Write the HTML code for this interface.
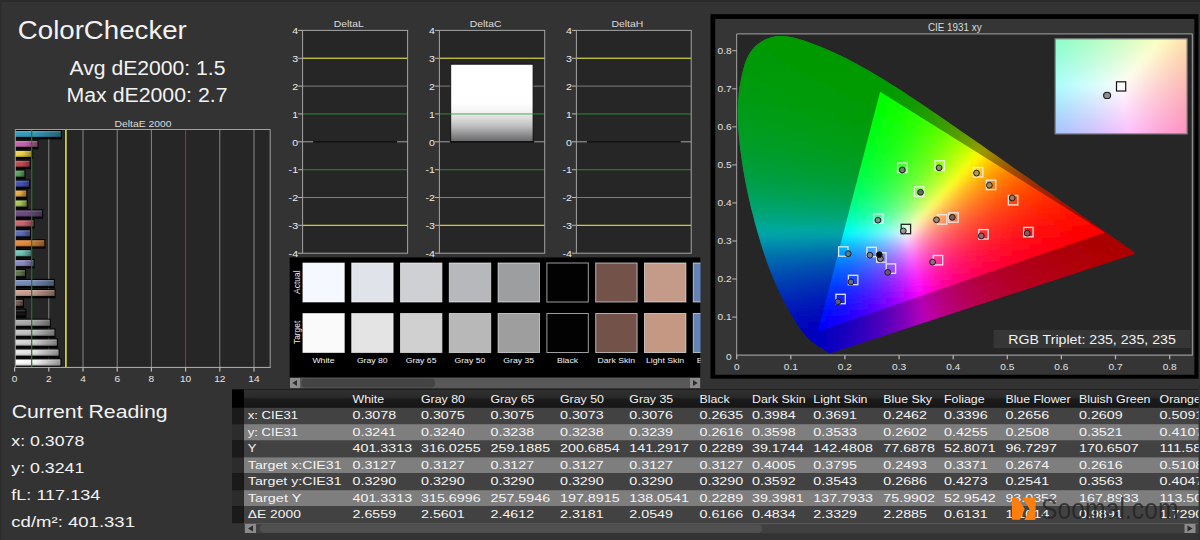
<!DOCTYPE html>
<html><head><meta charset="utf-8"><title>ColorChecker</title>
<style>
html,body{margin:0;padding:0;background:#333333;}
body{width:1200px;height:540px;overflow:hidden;}
svg{display:block;font-family:"Liberation Sans", sans-serif;}
</style></head><body>
<svg width="1200" height="540" viewBox="0 0 1200 540">
<rect x="0" y="0" width="1200" height="2" fill="#2a2a2a"/><rect x="0" y="0" width="1.5" height="540" fill="#2c2c2c"/>
<text x="17.8" y="39" font-size="25" text-anchor="start" fill="#f2f2f2" textLength="169" lengthAdjust="spacingAndGlyphs">ColorChecker</text>
<text x="69.5" y="75" font-size="19.5" text-anchor="start" fill="#f2f2f2" textLength="156" lengthAdjust="spacingAndGlyphs">Avg dE2000: 1.5</text>
<text x="66.5" y="101.5" font-size="19.5" text-anchor="start" fill="#f2f2f2" textLength="161" lengthAdjust="spacingAndGlyphs">Max dE2000: 2.7</text>
<rect x="15.3" y="129.5" width="254.89999999999998" height="237.89999999999998" fill="#262626"/>
<text x="143" y="126.6" font-size="9.6" text-anchor="middle" fill="#dcdcdc" textLength="56.9" lengthAdjust="spacingAndGlyphs">DeltaE 2000</text>
<rect x="48.3" y="129.5" width="1" height="237.89999999999998" fill="#868686"/>
<rect x="82.5" y="129.5" width="1" height="237.89999999999998" fill="#868686"/>
<rect x="116.7" y="129.5" width="1" height="237.89999999999998" fill="#868686"/>
<rect x="150.9" y="129.5" width="1" height="237.89999999999998" fill="#868686"/>
<rect x="185.1" y="129.5" width="1" height="237.89999999999998" fill="#cc2222"/>
<rect x="219.3" y="129.5" width="1" height="237.89999999999998" fill="#868686"/>
<rect x="253.5" y="129.5" width="1" height="237.89999999999998" fill="#868686"/>
<defs><linearGradient id="gl" x1="0" y1="0" x2="0" y2="1"><stop offset="0" stop-color="#fff" stop-opacity="0.25"/><stop offset="0.4" stop-color="#fff" stop-opacity="0"/><stop offset="1" stop-color="#000" stop-opacity="0.25"/></linearGradient><linearGradient id="gh" x1="0" y1="0" x2="1" y2="0"><stop offset="0" stop-color="#000" stop-opacity="0"/><stop offset="0.45" stop-color="#000" stop-opacity="0.05"/><stop offset="1" stop-color="#000" stop-opacity="0.42"/></linearGradient></defs>
<rect x="15.3" y="358.3" width="46.2" height="9.6" fill="#000" opacity="0.85"/>
<rect x="15.3" y="359.5" width="45.0" height="6" fill="#ffffff"/>
<rect x="15.3" y="359.5" width="45.0" height="6" fill="url(#gh)"/>
<rect x="15.3" y="359.5" width="45.0" height="6" fill="url(#gl)"/>
<rect x="15.3" y="348.4" width="44.3" height="9.6" fill="#000" opacity="0.85"/>
<rect x="15.3" y="349.6" width="43.1" height="6" fill="#eaeaea"/>
<rect x="15.3" y="349.6" width="43.1" height="6" fill="url(#gh)"/>
<rect x="15.3" y="349.6" width="43.1" height="6" fill="url(#gl)"/>
<rect x="15.3" y="338.4" width="42.6" height="9.6" fill="#000" opacity="0.85"/>
<rect x="15.3" y="339.6" width="41.4" height="6" fill="#d8d8d8"/>
<rect x="15.3" y="339.6" width="41.4" height="6" fill="url(#gh)"/>
<rect x="15.3" y="339.6" width="41.4" height="6" fill="url(#gl)"/>
<rect x="15.3" y="328.5" width="40.2" height="9.6" fill="#000" opacity="0.85"/>
<rect x="15.3" y="329.7" width="39.0" height="6" fill="#c6c6c6"/>
<rect x="15.3" y="329.7" width="39.0" height="6" fill="url(#gh)"/>
<rect x="15.3" y="329.7" width="39.0" height="6" fill="url(#gl)"/>
<rect x="15.3" y="318.6" width="35.6" height="9.6" fill="#000" opacity="0.85"/>
<rect x="15.3" y="319.8" width="34.4" height="6" fill="#adadad"/>
<rect x="15.3" y="319.8" width="34.4" height="6" fill="url(#gh)"/>
<rect x="15.3" y="319.8" width="34.4" height="6" fill="url(#gl)"/>
<rect x="15.3" y="308.6" width="11.1" height="9.6" fill="#000" opacity="0.85"/>
<rect x="15.3" y="309.8" width="9.9" height="6" fill="#0a0a0a"/>
<rect x="15.3" y="309.8" width="9.9" height="6" fill="url(#gh)"/>
<rect x="15.3" y="309.8" width="9.9" height="6" fill="url(#gl)"/>
<rect x="15.3" y="298.7" width="8.7" height="9.6" fill="#000" opacity="0.85"/>
<rect x="15.3" y="299.9" width="7.5" height="6" fill="#78584c"/>
<rect x="15.3" y="299.9" width="7.5" height="6" fill="url(#gh)"/>
<rect x="15.3" y="299.9" width="7.5" height="6" fill="url(#gl)"/>
<rect x="15.3" y="288.8" width="40.3" height="9.6" fill="#000" opacity="0.85"/>
<rect x="15.3" y="290.0" width="39.1" height="6" fill="#cca090"/>
<rect x="15.3" y="290.0" width="39.1" height="6" fill="url(#gh)"/>
<rect x="15.3" y="290.0" width="39.1" height="6" fill="url(#gl)"/>
<rect x="15.3" y="278.8" width="39.7" height="9.6" fill="#000" opacity="0.85"/>
<rect x="15.3" y="280.0" width="38.5" height="6" fill="#748cbc"/>
<rect x="15.3" y="280.0" width="38.5" height="6" fill="url(#gh)"/>
<rect x="15.3" y="280.0" width="38.5" height="6" fill="url(#gl)"/>
<rect x="15.3" y="268.9" width="10.9" height="9.6" fill="#000" opacity="0.85"/>
<rect x="15.3" y="270.1" width="9.7" height="6" fill="#627848"/>
<rect x="15.3" y="270.1" width="9.7" height="6" fill="url(#gh)"/>
<rect x="15.3" y="270.1" width="9.7" height="6" fill="url(#gl)"/>
<rect x="15.3" y="258.9" width="19.3" height="9.6" fill="#000" opacity="0.85"/>
<rect x="15.3" y="260.1" width="18.1" height="6" fill="#908cc8"/>
<rect x="15.3" y="260.1" width="18.1" height="6" fill="url(#gh)"/>
<rect x="15.3" y="260.1" width="18.1" height="6" fill="url(#gl)"/>
<rect x="15.3" y="249.0" width="16.7" height="9.6" fill="#000" opacity="0.85"/>
<rect x="15.3" y="250.2" width="15.5" height="6" fill="#70ccbc"/>
<rect x="15.3" y="250.2" width="15.5" height="6" fill="url(#gh)"/>
<rect x="15.3" y="250.2" width="15.5" height="6" fill="url(#gl)"/>
<rect x="15.3" y="239.1" width="30.1" height="9.6" fill="#000" opacity="0.85"/>
<rect x="15.3" y="240.3" width="28.9" height="6" fill="#ea8a3a"/>
<rect x="15.3" y="240.3" width="28.9" height="6" fill="url(#gh)"/>
<rect x="15.3" y="240.3" width="28.9" height="6" fill="url(#gl)"/>
<rect x="15.3" y="229.1" width="15.9" height="9.6" fill="#000" opacity="0.85"/>
<rect x="15.3" y="230.3" width="14.7" height="6" fill="#5c6cc0"/>
<rect x="15.3" y="230.3" width="14.7" height="6" fill="url(#gh)"/>
<rect x="15.3" y="230.3" width="14.7" height="6" fill="url(#gl)"/>
<rect x="15.3" y="219.2" width="19.3" height="9.6" fill="#000" opacity="0.85"/>
<rect x="15.3" y="220.4" width="18.1" height="6" fill="#d06470"/>
<rect x="15.3" y="220.4" width="18.1" height="6" fill="url(#gh)"/>
<rect x="15.3" y="220.4" width="18.1" height="6" fill="url(#gl)"/>
<rect x="15.3" y="209.3" width="27.9" height="9.6" fill="#000" opacity="0.85"/>
<rect x="15.3" y="210.5" width="26.7" height="6" fill="#6a4680"/>
<rect x="15.3" y="210.5" width="26.7" height="6" fill="url(#gh)"/>
<rect x="15.3" y="210.5" width="26.7" height="6" fill="url(#gl)"/>
<rect x="15.3" y="199.3" width="12.5" height="9.6" fill="#000" opacity="0.85"/>
<rect x="15.3" y="200.5" width="11.3" height="6" fill="#b0cc50"/>
<rect x="15.3" y="200.5" width="11.3" height="6" fill="url(#gh)"/>
<rect x="15.3" y="200.5" width="11.3" height="6" fill="url(#gl)"/>
<rect x="15.3" y="189.4" width="12.1" height="9.6" fill="#000" opacity="0.85"/>
<rect x="15.3" y="190.6" width="10.9" height="6" fill="#f0b040"/>
<rect x="15.3" y="190.6" width="10.9" height="6" fill="url(#gh)"/>
<rect x="15.3" y="190.6" width="10.9" height="6" fill="url(#gl)"/>
<rect x="15.3" y="179.5" width="15.0" height="9.6" fill="#000" opacity="0.85"/>
<rect x="15.3" y="180.7" width="13.8" height="6" fill="#4050b8"/>
<rect x="15.3" y="180.7" width="13.8" height="6" fill="url(#gh)"/>
<rect x="15.3" y="180.7" width="13.8" height="6" fill="url(#gl)"/>
<rect x="15.3" y="169.5" width="10.2" height="9.6" fill="#000" opacity="0.85"/>
<rect x="15.3" y="170.7" width="9.0" height="6" fill="#5aa85c"/>
<rect x="15.3" y="170.7" width="9.0" height="6" fill="url(#gh)"/>
<rect x="15.3" y="170.7" width="9.0" height="6" fill="url(#gl)"/>
<rect x="15.3" y="159.6" width="15.4" height="9.6" fill="#000" opacity="0.85"/>
<rect x="15.3" y="160.8" width="14.2" height="6" fill="#c84850"/>
<rect x="15.3" y="160.8" width="14.2" height="6" fill="url(#gh)"/>
<rect x="15.3" y="160.8" width="14.2" height="6" fill="url(#gl)"/>
<rect x="15.3" y="149.7" width="17.8" height="9.6" fill="#000" opacity="0.85"/>
<rect x="15.3" y="150.9" width="16.6" height="6" fill="#f4d844"/>
<rect x="15.3" y="150.9" width="16.6" height="6" fill="url(#gh)"/>
<rect x="15.3" y="150.9" width="16.6" height="6" fill="url(#gl)"/>
<rect x="15.3" y="139.7" width="23.2" height="9.6" fill="#000" opacity="0.85"/>
<rect x="15.3" y="140.9" width="22.0" height="6" fill="#c864b0"/>
<rect x="15.3" y="140.9" width="22.0" height="6" fill="url(#gh)"/>
<rect x="15.3" y="140.9" width="22.0" height="6" fill="url(#gl)"/>
<rect x="15.3" y="129.8" width="46.5" height="9.6" fill="#000" opacity="0.85"/>
<rect x="15.3" y="131.0" width="45.3" height="6" fill="#2e9cc0"/>
<rect x="15.3" y="131.0" width="45.3" height="6" fill="url(#gh)"/>
<rect x="15.3" y="131.0" width="45.3" height="6" fill="url(#gl)"/>
<rect x="31.0" y="129.5" width="1.3" height="237.89999999999998" fill="#1c7a20" opacity="0.9"/>
<rect x="64.3" y="129.5" width="3.2" height="237.89999999999998" fill="#1c1c10" opacity="0.7"/>
<rect x="65.0" y="129.5" width="1.8" height="237.89999999999998" fill="#d2c846"/>
<path d="M15.3 367.4 V129.5 H270.2 V367.4" fill="none" stroke="#a0a0a0" stroke-width="1"/>
<path d="M14.8 367.4 H270.7" fill="none" stroke="#b4b4b4" stroke-width="1"/>
<rect x="14.0" y="367.4" width="1.2" height="4.2" fill="#b8b8b8"/>
<text x="14.6" y="381.7" font-size="9.4" text-anchor="middle" fill="#e4e4e4" textLength="5.6" lengthAdjust="spacingAndGlyphs">0</text>
<rect x="48.2" y="367.4" width="1.2" height="4.2" fill="#b8b8b8"/>
<text x="48.8" y="381.7" font-size="9.4" text-anchor="middle" fill="#e4e4e4" textLength="5.6" lengthAdjust="spacingAndGlyphs">2</text>
<rect x="82.4" y="367.4" width="1.2" height="4.2" fill="#b8b8b8"/>
<text x="83.0" y="381.7" font-size="9.4" text-anchor="middle" fill="#e4e4e4" textLength="5.6" lengthAdjust="spacingAndGlyphs">4</text>
<rect x="116.6" y="367.4" width="1.2" height="4.2" fill="#b8b8b8"/>
<text x="117.2" y="381.7" font-size="9.4" text-anchor="middle" fill="#e4e4e4" textLength="5.6" lengthAdjust="spacingAndGlyphs">6</text>
<rect x="150.8" y="367.4" width="1.2" height="4.2" fill="#b8b8b8"/>
<text x="151.4" y="381.7" font-size="9.4" text-anchor="middle" fill="#e4e4e4" textLength="5.6" lengthAdjust="spacingAndGlyphs">8</text>
<rect x="185.0" y="367.4" width="1.2" height="4.2" fill="#b8b8b8"/>
<text x="185.6" y="381.7" font-size="9.4" text-anchor="middle" fill="#e4e4e4" textLength="11.3" lengthAdjust="spacingAndGlyphs">10</text>
<rect x="219.2" y="367.4" width="1.2" height="4.2" fill="#b8b8b8"/>
<text x="219.8" y="381.7" font-size="9.4" text-anchor="middle" fill="#e4e4e4" textLength="11.3" lengthAdjust="spacingAndGlyphs">12</text>
<rect x="253.4" y="367.4" width="1.2" height="4.2" fill="#b8b8b8"/>
<text x="254.0" y="381.7" font-size="9.4" text-anchor="middle" fill="#e4e4e4" textLength="11.3" lengthAdjust="spacingAndGlyphs">14</text>
<defs><linearGradient id="wb" x1="0" y1="0" x2="0" y2="1"><stop offset="0" stop-color="#fff"/><stop offset="0.5" stop-color="#fefefe"/><stop offset="0.62" stop-color="#f2f2f2"/><stop offset="0.8" stop-color="#bebec0"/><stop offset="1" stop-color="#646464"/></linearGradient></defs>
<rect x="302.6" y="30.4" width="105.0" height="222.79999999999998" fill="#262626"/>
<text x="298.1" y="256.9" font-size="9.3" text-anchor="end" fill="#ececec" textLength="9.5" lengthAdjust="spacingAndGlyphs">-4</text>
<rect x="298.1" y="252.7" width="4.5" height="1" fill="#b8b8b8"/>
<text x="298.1" y="229.0" font-size="9.3" text-anchor="end" fill="#ececec" textLength="9.5" lengthAdjust="spacingAndGlyphs">-3</text>
<rect x="298.1" y="224.8" width="4.5" height="1" fill="#b8b8b8"/>
<text x="298.1" y="201.2" font-size="9.3" text-anchor="end" fill="#ececec" textLength="9.5" lengthAdjust="spacingAndGlyphs">-2</text>
<rect x="298.1" y="197.0" width="4.5" height="1" fill="#b8b8b8"/>
<text x="298.1" y="173.3" font-size="9.3" text-anchor="end" fill="#ececec" textLength="9.5" lengthAdjust="spacingAndGlyphs">-1</text>
<rect x="298.1" y="169.2" width="4.5" height="1" fill="#b8b8b8"/>
<text x="298.1" y="145.5" font-size="9.3" text-anchor="end" fill="#ececec" textLength="5.9" lengthAdjust="spacingAndGlyphs">0</text>
<rect x="298.1" y="141.3" width="4.5" height="1" fill="#b8b8b8"/>
<text x="298.1" y="117.6" font-size="9.3" text-anchor="end" fill="#ececec" textLength="5.9" lengthAdjust="spacingAndGlyphs">1</text>
<rect x="298.1" y="113.4" width="4.5" height="1" fill="#b8b8b8"/>
<text x="298.1" y="89.8" font-size="9.3" text-anchor="end" fill="#ececec" textLength="5.9" lengthAdjust="spacingAndGlyphs">2</text>
<rect x="298.1" y="85.6" width="4.5" height="1" fill="#b8b8b8"/>
<text x="298.1" y="62.0" font-size="9.3" text-anchor="end" fill="#ececec" textLength="5.9" lengthAdjust="spacingAndGlyphs">3</text>
<rect x="298.1" y="57.8" width="4.5" height="1" fill="#b8b8b8"/>
<text x="298.1" y="34.1" font-size="9.3" text-anchor="end" fill="#ececec" textLength="5.9" lengthAdjust="spacingAndGlyphs">4</text>
<rect x="298.1" y="29.9" width="4.5" height="1" fill="#b8b8b8"/>
<rect x="302.6" y="85.60" width="105.0" height="1" fill="#7c7c7c"/>
<rect x="302.6" y="197.00" width="105.0" height="1" fill="#7c7c7c"/>
<rect x="302.6" y="57.65" width="105.0" height="1.2" fill="#d6d63c" opacity="1"/>
<rect x="302.6" y="113.35" width="105.0" height="1.2" fill="#2f9a36" opacity="0.7"/>
<rect x="302.6" y="169.05" width="105.0" height="1.2" fill="#2f9a36" opacity="0.7"/>
<rect x="302.6" y="224.75" width="105.0" height="1.2" fill="#d6d63c" opacity="1"/>
<rect x="313.1" y="141.3" width="84.0" height="1.2" fill="#0c0c0c"/>
<rect x="302.6" y="141.3" width="10.5" height="1" fill="#a0a0a0"/>
<rect x="397.1" y="141.3" width="10.5" height="1" fill="#a0a0a0"/>
<rect x="302.6" y="30.4" width="105.0" height="222.79999999999998" fill="none" stroke="#a4a4a4" stroke-width="1"/>
<text x="348.70000000000005" y="27.1" font-size="9.2" text-anchor="middle" fill="#dcdcdc" textLength="30.0" lengthAdjust="spacingAndGlyphs">DeltaL</text>
<rect x="439.4" y="30.4" width="105.30000000000007" height="222.79999999999998" fill="#262626"/>
<text x="434.9" y="256.9" font-size="9.3" text-anchor="end" fill="#ececec" textLength="9.5" lengthAdjust="spacingAndGlyphs">-4</text>
<rect x="434.9" y="252.7" width="4.5" height="1" fill="#b8b8b8"/>
<text x="434.9" y="229.0" font-size="9.3" text-anchor="end" fill="#ececec" textLength="9.5" lengthAdjust="spacingAndGlyphs">-3</text>
<rect x="434.9" y="224.8" width="4.5" height="1" fill="#b8b8b8"/>
<text x="434.9" y="201.2" font-size="9.3" text-anchor="end" fill="#ececec" textLength="9.5" lengthAdjust="spacingAndGlyphs">-2</text>
<rect x="434.9" y="197.0" width="4.5" height="1" fill="#b8b8b8"/>
<text x="434.9" y="173.3" font-size="9.3" text-anchor="end" fill="#ececec" textLength="9.5" lengthAdjust="spacingAndGlyphs">-1</text>
<rect x="434.9" y="169.2" width="4.5" height="1" fill="#b8b8b8"/>
<text x="434.9" y="145.5" font-size="9.3" text-anchor="end" fill="#ececec" textLength="5.9" lengthAdjust="spacingAndGlyphs">0</text>
<rect x="434.9" y="141.3" width="4.5" height="1" fill="#b8b8b8"/>
<text x="434.9" y="117.6" font-size="9.3" text-anchor="end" fill="#ececec" textLength="5.9" lengthAdjust="spacingAndGlyphs">1</text>
<rect x="434.9" y="113.4" width="4.5" height="1" fill="#b8b8b8"/>
<text x="434.9" y="89.8" font-size="9.3" text-anchor="end" fill="#ececec" textLength="5.9" lengthAdjust="spacingAndGlyphs">2</text>
<rect x="434.9" y="85.6" width="4.5" height="1" fill="#b8b8b8"/>
<text x="434.9" y="62.0" font-size="9.3" text-anchor="end" fill="#ececec" textLength="5.9" lengthAdjust="spacingAndGlyphs">3</text>
<rect x="434.9" y="57.8" width="4.5" height="1" fill="#b8b8b8"/>
<text x="434.9" y="34.1" font-size="9.3" text-anchor="end" fill="#ececec" textLength="5.9" lengthAdjust="spacingAndGlyphs">4</text>
<rect x="434.9" y="29.9" width="4.5" height="1" fill="#b8b8b8"/>
<rect x="439.4" y="85.60" width="105.30000000000007" height="1" fill="#7c7c7c"/>
<rect x="439.4" y="197.00" width="105.30000000000007" height="1" fill="#7c7c7c"/>
<rect x="450.7" y="64.2" width="82.4" height="77.6" fill="url(#wb)" stroke="#0c0c0c" stroke-width="0.9"/>
<rect x="439.4" y="57.65" width="105.30000000000007" height="1.2" fill="#d6d63c" opacity="1"/>
<rect x="439.4" y="113.35" width="105.30000000000007" height="1.2" fill="#2f9a36" opacity="0.7"/>
<rect x="439.4" y="169.05" width="105.30000000000007" height="1.2" fill="#2f9a36" opacity="0.7"/>
<rect x="439.4" y="224.75" width="105.30000000000007" height="1.2" fill="#d6d63c" opacity="1"/>
<rect x="449.9" y="141.3" width="84.30000000000007" height="1.2" fill="#0c0c0c"/>
<rect x="439.4" y="141.3" width="10.5" height="1" fill="#a0a0a0"/>
<rect x="534.2" y="141.3" width="10.5" height="1" fill="#a0a0a0"/>
<rect x="439.4" y="30.4" width="105.30000000000007" height="222.79999999999998" fill="none" stroke="#a4a4a4" stroke-width="1"/>
<text x="485.65000000000003" y="27.1" font-size="9.2" text-anchor="middle" fill="#dcdcdc" textLength="31.8" lengthAdjust="spacingAndGlyphs">DeltaC</text>
<rect x="576.4" y="30.4" width="114.80000000000007" height="222.79999999999998" fill="#262626"/>
<text x="571.9" y="256.9" font-size="9.3" text-anchor="end" fill="#ececec" textLength="9.5" lengthAdjust="spacingAndGlyphs">-4</text>
<rect x="571.9" y="252.7" width="4.5" height="1" fill="#b8b8b8"/>
<text x="571.9" y="229.0" font-size="9.3" text-anchor="end" fill="#ececec" textLength="9.5" lengthAdjust="spacingAndGlyphs">-3</text>
<rect x="571.9" y="224.8" width="4.5" height="1" fill="#b8b8b8"/>
<text x="571.9" y="201.2" font-size="9.3" text-anchor="end" fill="#ececec" textLength="9.5" lengthAdjust="spacingAndGlyphs">-2</text>
<rect x="571.9" y="197.0" width="4.5" height="1" fill="#b8b8b8"/>
<text x="571.9" y="173.3" font-size="9.3" text-anchor="end" fill="#ececec" textLength="9.5" lengthAdjust="spacingAndGlyphs">-1</text>
<rect x="571.9" y="169.2" width="4.5" height="1" fill="#b8b8b8"/>
<text x="571.9" y="145.5" font-size="9.3" text-anchor="end" fill="#ececec" textLength="5.9" lengthAdjust="spacingAndGlyphs">0</text>
<rect x="571.9" y="141.3" width="4.5" height="1" fill="#b8b8b8"/>
<text x="571.9" y="117.6" font-size="9.3" text-anchor="end" fill="#ececec" textLength="5.9" lengthAdjust="spacingAndGlyphs">1</text>
<rect x="571.9" y="113.4" width="4.5" height="1" fill="#b8b8b8"/>
<text x="571.9" y="89.8" font-size="9.3" text-anchor="end" fill="#ececec" textLength="5.9" lengthAdjust="spacingAndGlyphs">2</text>
<rect x="571.9" y="85.6" width="4.5" height="1" fill="#b8b8b8"/>
<text x="571.9" y="62.0" font-size="9.3" text-anchor="end" fill="#ececec" textLength="5.9" lengthAdjust="spacingAndGlyphs">3</text>
<rect x="571.9" y="57.8" width="4.5" height="1" fill="#b8b8b8"/>
<text x="571.9" y="34.1" font-size="9.3" text-anchor="end" fill="#ececec" textLength="5.9" lengthAdjust="spacingAndGlyphs">4</text>
<rect x="571.9" y="29.9" width="4.5" height="1" fill="#b8b8b8"/>
<rect x="576.4" y="85.60" width="114.80000000000007" height="1" fill="#7c7c7c"/>
<rect x="576.4" y="197.00" width="114.80000000000007" height="1" fill="#7c7c7c"/>
<rect x="576.4" y="57.65" width="114.80000000000007" height="1.2" fill="#d6d63c" opacity="1"/>
<rect x="576.4" y="113.35" width="114.80000000000007" height="1.2" fill="#2f9a36" opacity="0.7"/>
<rect x="576.4" y="169.05" width="114.80000000000007" height="1.2" fill="#2f9a36" opacity="0.7"/>
<rect x="576.4" y="224.75" width="114.80000000000007" height="1.2" fill="#d6d63c" opacity="1"/>
<rect x="586.9" y="141.3" width="93.80000000000007" height="1.2" fill="#0c0c0c"/>
<rect x="576.4" y="141.3" width="10.5" height="1" fill="#a0a0a0"/>
<rect x="680.7" y="141.3" width="10.5" height="1" fill="#a0a0a0"/>
<rect x="576.4" y="30.4" width="114.80000000000007" height="222.79999999999998" fill="none" stroke="#a4a4a4" stroke-width="1"/>
<text x="627.4" y="27.1" font-size="9.2" text-anchor="middle" fill="#dcdcdc" textLength="31.8" lengthAdjust="spacingAndGlyphs">DeltaH</text>
<rect x="289.7" y="257.4" width="410.8" height="131" fill="#000"/>
<rect x="302.9" y="263.0" width="41.4" height="39" fill="#f6f8ff" stroke="#fff" stroke-opacity="0.62" stroke-width="1"/>
<rect x="302.9" y="313.5" width="41.4" height="39" fill="#fafafa" stroke="#fff" stroke-opacity="0.62" stroke-width="1"/>
<text x="323.5" y="363" font-size="8.1" text-anchor="middle" fill="#f4f4f4" textLength="22.2" lengthAdjust="spacingAndGlyphs">White</text>
<rect x="351.7" y="263.0" width="41.4" height="39" fill="#e0e4ea" stroke="#fff" stroke-opacity="0.62" stroke-width="1"/>
<rect x="351.7" y="313.5" width="41.4" height="39" fill="#e4e4e4" stroke="#fff" stroke-opacity="0.62" stroke-width="1"/>
<text x="372.3" y="363" font-size="8.1" text-anchor="middle" fill="#f4f4f4" textLength="30.8" lengthAdjust="spacingAndGlyphs">Gray 80</text>
<rect x="400.5" y="263.0" width="41.4" height="39" fill="#ced0d4" stroke="#fff" stroke-opacity="0.62" stroke-width="1"/>
<rect x="400.5" y="313.5" width="41.4" height="39" fill="#d0d0d0" stroke="#fff" stroke-opacity="0.62" stroke-width="1"/>
<text x="421.1" y="363" font-size="8.1" text-anchor="middle" fill="#f4f4f4" textLength="30.8" lengthAdjust="spacingAndGlyphs">Gray 65</text>
<rect x="449.3" y="263.0" width="41.4" height="39" fill="#b6b8bc" stroke="#fff" stroke-opacity="0.62" stroke-width="1"/>
<rect x="449.3" y="313.5" width="41.4" height="39" fill="#b8b8b8" stroke="#fff" stroke-opacity="0.62" stroke-width="1"/>
<text x="469.9" y="363" font-size="8.1" text-anchor="middle" fill="#f4f4f4" textLength="30.8" lengthAdjust="spacingAndGlyphs">Gray 50</text>
<rect x="498.1" y="263.0" width="41.4" height="39" fill="#9c9ea0" stroke="#fff" stroke-opacity="0.62" stroke-width="1"/>
<rect x="498.1" y="313.5" width="41.4" height="39" fill="#9e9e9e" stroke="#fff" stroke-opacity="0.62" stroke-width="1"/>
<text x="518.7" y="363" font-size="8.1" text-anchor="middle" fill="#f4f4f4" textLength="30.8" lengthAdjust="spacingAndGlyphs">Gray 35</text>
<rect x="546.9" y="263.0" width="41.4" height="39" fill="#020202" stroke="#fff" stroke-opacity="0.62" stroke-width="1"/>
<rect x="546.9" y="313.5" width="41.4" height="39" fill="#020202" stroke="#fff" stroke-opacity="0.62" stroke-width="1"/>
<text x="567.5" y="363" font-size="8.1" text-anchor="middle" fill="#f4f4f4" textLength="21.2" lengthAdjust="spacingAndGlyphs">Black</text>
<rect x="595.7" y="263.0" width="41.4" height="39" fill="#73524a" stroke="#fff" stroke-opacity="0.62" stroke-width="1"/>
<rect x="595.7" y="313.5" width="41.4" height="39" fill="#73524a" stroke="#fff" stroke-opacity="0.62" stroke-width="1"/>
<text x="616.3" y="363" font-size="8.1" text-anchor="middle" fill="#f4f4f4" textLength="37.6" lengthAdjust="spacingAndGlyphs">Dark Skin</text>
<rect x="644.5" y="263.0" width="41.4" height="39" fill="#c49a88" stroke="#fff" stroke-opacity="0.62" stroke-width="1"/>
<rect x="644.5" y="313.5" width="41.4" height="39" fill="#c59884" stroke="#fff" stroke-opacity="0.62" stroke-width="1"/>
<text x="665.0999999999999" y="363" font-size="8.1" text-anchor="middle" fill="#f4f4f4" textLength="38.1" lengthAdjust="spacingAndGlyphs">Light Skin</text>
<rect x="693.3" y="263.0" width="41.4" height="39" fill="#6484b8" stroke="#fff" stroke-opacity="0.62" stroke-width="1"/>
<rect x="693.3" y="313.5" width="41.4" height="39" fill="#6484b8" stroke="#fff" stroke-opacity="0.62" stroke-width="1"/>
<text x="713.9" y="363" font-size="8.1" text-anchor="middle" fill="#f4f4f4" textLength="34.2" lengthAdjust="spacingAndGlyphs">Blue Sky</text>
<rect x="700.5" y="257" width="10.5" height="132" fill="#333333"/>
<text x="0" y="0" font-size="9.2" text-anchor="middle" fill="#f0f0f0" textLength="23.4" lengthAdjust="spacingAndGlyphs" transform="translate(299.6,282.2) rotate(-90)">Actual</text>
<text x="0" y="0" font-size="9.2" text-anchor="middle" fill="#f0f0f0" textLength="23.2" lengthAdjust="spacingAndGlyphs" transform="translate(299.6,332.4) rotate(-90)">Target</text>
<rect x="289.7" y="377.5" width="410.8" height="10.9" fill="#585858"/>
<rect x="301.5" y="378.5" width="133.5" height="9" fill="#444444" rx="4"/>
<rect x="290" y="378" width="10" height="10" fill="#8c8c8c"/><path d="M297 380 L292.3 383 L297 386 Z" fill="#2c2c2c"/>
<rect x="690" y="378" width="10" height="10" fill="#8c8c8c"/><path d="M693 380 L697.7 383 L693 386 Z" fill="#2c2c2c"/>
<rect x="710.5" y="14.2" width="488" height="364.5" fill="#000"/>
<rect x="715.2" y="18.9" width="479.2" height="355.9" fill="#353535"/>
<rect x="736.7" y="33.9" width="455.5999999999999" height="321.20000000000005" fill="#262626"/>
<text x="954.8" y="30.8" font-size="10" text-anchor="middle" fill="#dcdcdc" textLength="53.7" lengthAdjust="spacingAndGlyphs">CIE 1931 xy</text>
<defs><clipPath id="hs"><path d="M831.2 353.1 L831.1 353.1 L830.9 353.1 L830.8 353.1 L830.6 353.2 L830.3 353.2 L830.1 353.2 L829.7 353.2 L829.2 353.0 L828.5 352.7 L827.7 352.3 L826.6 351.6 L825.2 350.7 L823.5 349.6 L821.0 348.1 L818.0 346.2 L814.2 343.5 L811.7 341.6 L809.5 339.6 L806.2 336.2 L803.2 332.7 L800.4 329.1 L797.8 325.4 L795.3 321.6 L793.2 318.1 L791.1 314.6 L789.2 311.1 L787.3 307.6 L785.4 304.1 L783.2 299.8 L781.1 295.5 L779.0 291.2 L777.0 286.9 L775.0 282.5 L773.1 278.1 L771.5 274.2 L770.0 270.2 L768.5 266.2 L767.0 262.2 L765.7 258.2 L764.3 254.2 L763.0 250.2 L761.7 246.2 L760.5 242.2 L759.2 237.7 L757.9 233.3 L756.6 228.8 L755.3 224.3 L754.1 219.8 L753.0 215.3 L751.8 210.8 L750.7 206.3 L749.7 201.8 L748.6 197.3 L747.7 193.0 L746.8 188.7 L745.9 184.3 L745.1 180.0 L744.3 175.6 L743.5 171.3 L742.8 166.9 L742.1 162.6 L741.5 158.2 L740.9 153.8 L740.3 149.4 L739.8 145.0 L739.4 140.6 L738.9 136.1 L738.6 131.7 L738.3 127.2 L738.1 122.8 L737.9 118.3 L737.9 113.9 L737.9 109.5 L738.0 105.0 L738.2 100.5 L738.6 95.9 L739.0 91.3 L739.6 86.8 L740.4 82.2 L741.2 77.7 L742.3 73.1 L743.5 68.5 L744.7 64.3 L746.2 60.1 L748.1 55.9 L750.5 51.9 L753.5 48.1 L757.2 44.6 L761.4 41.6 L766.1 39.1 L771.3 37.2 L776.8 36.1 L782.3 36.0 L787.9 36.6 L793.4 37.6 L798.7 39.1 L804.5 40.8 L810.0 42.7 L815.4 44.7 L820.7 46.8 L826.0 49.0 L831.2 51.3 L836.4 53.7 L841.4 56.1 L846.5 58.6 L851.5 61.2 L856.5 63.8 L861.3 66.5 L866.3 69.3 L871.2 72.1 L876.1 75.0 L881.0 77.9 L884.9 80.3 L888.8 82.7 L892.7 85.2 L896.5 87.6 L900.4 90.1 L904.3 92.6 L908.1 95.2 L912.0 97.7 L915.8 100.3 L919.7 102.8 L923.6 105.4 L927.5 108.0 L931.3 110.7 L935.2 113.3 L939.1 115.9 L942.9 118.6 L946.8 121.2 L950.6 123.9 L954.5 126.5 L958.3 129.2 L962.2 131.9 L966.0 134.5 L969.8 137.2 L973.7 139.8 L977.5 142.5 L981.3 145.1 L985.0 147.7 L988.8 150.4 L992.5 153.0 L996.3 155.6 L1000.8 158.8 L1005.4 162.0 L1010.0 165.2 L1014.5 168.4 L1018.9 171.5 L1023.3 174.5 L1027.6 177.6 L1032.0 180.6 L1036.1 183.5 L1040.2 186.4 L1044.3 189.3 L1048.5 192.1 L1052.2 194.8 L1056.0 197.4 L1059.7 200.0 L1063.4 202.7 L1067.8 205.7 L1072.1 208.8 L1076.5 211.8 L1080.3 214.5 L1084.1 217.2 L1088.0 219.8 L1091.1 222.0 L1094.3 224.2 L1097.5 226.5 L1101.4 229.2 L1105.2 231.9 L1108.3 234.1 L1111.4 236.2 L1113.9 237.9 L1116.3 239.7 L1120.3 242.4 L1123.6 244.8 L1126.3 246.7 L1128.4 248.1 L1130.1 249.3 L1132.2 250.8 L1134.1 252.1 L1134.6 254.0 Z"/></clipPath><filter id="bl" x="-5%" y="-5%" width="110%" height="110%"><feGaussianBlur stdDeviation="3"/></filter></defs>
<g clip-path="url(#hs)"><g filter="url(#bl)">
<rect x="766.7" y="27.9" width="6.5" height="6.5" fill="#00ff01"/>
<rect x="772.7" y="27.9" width="6.5" height="6.5" fill="#00ff00"/>
<rect x="778.7" y="27.9" width="6.5" height="6.5" fill="#00ff00"/>
<rect x="784.7" y="27.9" width="6.5" height="6.5" fill="#00ff00"/>
<rect x="790.7" y="27.9" width="6.5" height="6.5" fill="#00ff00"/>
<rect x="754.7" y="33.9" width="6.5" height="6.5" fill="#00ff04"/>
<rect x="760.7" y="33.9" width="6.5" height="6.5" fill="#00ff03"/>
<rect x="766.7" y="33.9" width="6.5" height="6.5" fill="#00ff02"/>
<rect x="772.7" y="33.9" width="6.5" height="6.5" fill="#00ff01"/>
<rect x="778.7" y="33.9" width="6.5" height="6.5" fill="#00ff01"/>
<rect x="784.7" y="33.9" width="6.5" height="6.5" fill="#00ff00"/>
<rect x="790.7" y="33.9" width="6.5" height="6.5" fill="#00ff00"/>
<rect x="796.7" y="33.9" width="6.5" height="6.5" fill="#00ff00"/>
<rect x="802.7" y="33.9" width="6.5" height="6.5" fill="#00ff00"/>
<rect x="808.7" y="33.9" width="6.5" height="6.5" fill="#00ff00"/>
<rect x="748.7" y="39.9" width="6.5" height="6.5" fill="#00ff06"/>
<rect x="754.7" y="39.9" width="6.5" height="6.5" fill="#00ff05"/>
<rect x="760.7" y="39.9" width="6.5" height="6.5" fill="#00ff04"/>
<rect x="766.7" y="39.9" width="6.5" height="6.5" fill="#00ff03"/>
<rect x="772.7" y="39.9" width="6.5" height="6.5" fill="#00ff03"/>
<rect x="778.7" y="39.9" width="6.5" height="6.5" fill="#00ff02"/>
<rect x="784.7" y="39.9" width="6.5" height="6.5" fill="#00ff01"/>
<rect x="790.7" y="39.9" width="6.5" height="6.5" fill="#00ff01"/>
<rect x="796.7" y="39.9" width="6.5" height="6.5" fill="#00ff00"/>
<rect x="802.7" y="39.9" width="6.5" height="6.5" fill="#00ff00"/>
<rect x="808.7" y="39.9" width="6.5" height="6.5" fill="#00ff00"/>
<rect x="814.7" y="39.9" width="6.5" height="6.5" fill="#00ff00"/>
<rect x="820.7" y="39.9" width="6.5" height="6.5" fill="#00ff00"/>
<rect x="742.7" y="45.9" width="6.5" height="6.5" fill="#00ff09"/>
<rect x="748.7" y="45.9" width="6.5" height="6.5" fill="#00ff08"/>
<rect x="754.7" y="45.9" width="6.5" height="6.5" fill="#00ff07"/>
<rect x="760.7" y="45.9" width="6.5" height="6.5" fill="#00ff06"/>
<rect x="766.7" y="45.9" width="6.5" height="6.5" fill="#00ff05"/>
<rect x="772.7" y="45.9" width="6.5" height="6.5" fill="#00ff04"/>
<rect x="778.7" y="45.9" width="6.5" height="6.5" fill="#00ff03"/>
<rect x="784.7" y="45.9" width="6.5" height="6.5" fill="#00ff02"/>
<rect x="790.7" y="45.9" width="6.5" height="6.5" fill="#00ff02"/>
<rect x="796.7" y="45.9" width="6.5" height="6.5" fill="#00ff01"/>
<rect x="802.7" y="45.9" width="6.5" height="6.5" fill="#00ff00"/>
<rect x="808.7" y="45.9" width="6.5" height="6.5" fill="#00ff00"/>
<rect x="814.7" y="45.9" width="6.5" height="6.5" fill="#00ff00"/>
<rect x="820.7" y="45.9" width="6.5" height="6.5" fill="#00ff00"/>
<rect x="826.7" y="45.9" width="6.5" height="6.5" fill="#00ff00"/>
<rect x="832.7" y="45.9" width="6.5" height="6.5" fill="#00ff00"/>
<rect x="838.7" y="45.9" width="6.5" height="6.5" fill="#00ff00"/>
<rect x="742.7" y="51.9" width="6.5" height="6.5" fill="#00ff0b"/>
<rect x="748.7" y="51.9" width="6.5" height="6.5" fill="#00ff0a"/>
<rect x="754.7" y="51.9" width="6.5" height="6.5" fill="#00ff09"/>
<rect x="760.7" y="51.9" width="6.5" height="6.5" fill="#00ff08"/>
<rect x="766.7" y="51.9" width="6.5" height="6.5" fill="#00ff07"/>
<rect x="772.7" y="51.9" width="6.5" height="6.5" fill="#00ff06"/>
<rect x="778.7" y="51.9" width="6.5" height="6.5" fill="#00ff05"/>
<rect x="784.7" y="51.9" width="6.5" height="6.5" fill="#00ff04"/>
<rect x="790.7" y="51.9" width="6.5" height="6.5" fill="#00ff03"/>
<rect x="796.7" y="51.9" width="6.5" height="6.5" fill="#00ff02"/>
<rect x="802.7" y="51.9" width="6.5" height="6.5" fill="#00ff02"/>
<rect x="808.7" y="51.9" width="6.5" height="6.5" fill="#00ff01"/>
<rect x="814.7" y="51.9" width="6.5" height="6.5" fill="#00ff00"/>
<rect x="820.7" y="51.9" width="6.5" height="6.5" fill="#00ff00"/>
<rect x="826.7" y="51.9" width="6.5" height="6.5" fill="#00ff00"/>
<rect x="832.7" y="51.9" width="6.5" height="6.5" fill="#00ff00"/>
<rect x="838.7" y="51.9" width="6.5" height="6.5" fill="#00ff00"/>
<rect x="844.7" y="51.9" width="6.5" height="6.5" fill="#00ff00"/>
<rect x="850.7" y="51.9" width="6.5" height="6.5" fill="#00ff00"/>
<rect x="736.7" y="57.9" width="6.5" height="6.5" fill="#00ff0e"/>
<rect x="742.7" y="57.9" width="6.5" height="6.5" fill="#00ff0d"/>
<rect x="748.7" y="57.9" width="6.5" height="6.5" fill="#00ff0c"/>
<rect x="754.7" y="57.9" width="6.5" height="6.5" fill="#00ff0b"/>
<rect x="760.7" y="57.9" width="6.5" height="6.5" fill="#00ff0a"/>
<rect x="766.7" y="57.9" width="6.5" height="6.5" fill="#00ff09"/>
<rect x="772.7" y="57.9" width="6.5" height="6.5" fill="#00ff08"/>
<rect x="778.7" y="57.9" width="6.5" height="6.5" fill="#00ff07"/>
<rect x="784.7" y="57.9" width="6.5" height="6.5" fill="#00ff06"/>
<rect x="790.7" y="57.9" width="6.5" height="6.5" fill="#00ff05"/>
<rect x="796.7" y="57.9" width="6.5" height="6.5" fill="#00ff04"/>
<rect x="802.7" y="57.9" width="6.5" height="6.5" fill="#00ff03"/>
<rect x="808.7" y="57.9" width="6.5" height="6.5" fill="#00ff02"/>
<rect x="814.7" y="57.9" width="6.5" height="6.5" fill="#00ff01"/>
<rect x="820.7" y="57.9" width="6.5" height="6.5" fill="#00ff01"/>
<rect x="826.7" y="57.9" width="6.5" height="6.5" fill="#00ff00"/>
<rect x="832.7" y="57.9" width="6.5" height="6.5" fill="#00ff00"/>
<rect x="838.7" y="57.9" width="6.5" height="6.5" fill="#00ff00"/>
<rect x="844.7" y="57.9" width="6.5" height="6.5" fill="#00ff00"/>
<rect x="850.7" y="57.9" width="6.5" height="6.5" fill="#00ff00"/>
<rect x="856.7" y="57.9" width="6.5" height="6.5" fill="#00ff00"/>
<rect x="736.7" y="63.9" width="6.5" height="6.5" fill="#00ff10"/>
<rect x="742.7" y="63.9" width="6.5" height="6.5" fill="#00ff0f"/>
<rect x="748.7" y="63.9" width="6.5" height="6.5" fill="#00ff0e"/>
<rect x="754.7" y="63.9" width="6.5" height="6.5" fill="#00ff0d"/>
<rect x="760.7" y="63.9" width="6.5" height="6.5" fill="#00ff0c"/>
<rect x="766.7" y="63.9" width="6.5" height="6.5" fill="#00ff0b"/>
<rect x="772.7" y="63.9" width="6.5" height="6.5" fill="#00ff0a"/>
<rect x="778.7" y="63.9" width="6.5" height="6.5" fill="#00ff08"/>
<rect x="784.7" y="63.9" width="6.5" height="6.5" fill="#00ff07"/>
<rect x="790.7" y="63.9" width="6.5" height="6.5" fill="#00ff06"/>
<rect x="796.7" y="63.9" width="6.5" height="6.5" fill="#00ff05"/>
<rect x="802.7" y="63.9" width="6.5" height="6.5" fill="#00ff04"/>
<rect x="808.7" y="63.9" width="6.5" height="6.5" fill="#00ff04"/>
<rect x="814.7" y="63.9" width="6.5" height="6.5" fill="#00ff03"/>
<rect x="820.7" y="63.9" width="6.5" height="6.5" fill="#00ff02"/>
<rect x="826.7" y="63.9" width="6.5" height="6.5" fill="#00ff01"/>
<rect x="832.7" y="63.9" width="6.5" height="6.5" fill="#00ff00"/>
<rect x="838.7" y="63.9" width="6.5" height="6.5" fill="#00ff00"/>
<rect x="844.7" y="63.9" width="6.5" height="6.5" fill="#00ff00"/>
<rect x="850.7" y="63.9" width="6.5" height="6.5" fill="#00ff00"/>
<rect x="856.7" y="63.9" width="6.5" height="6.5" fill="#00ff00"/>
<rect x="862.7" y="63.9" width="6.5" height="6.5" fill="#00ff00"/>
<rect x="868.7" y="63.9" width="6.5" height="6.5" fill="#00ff00"/>
<rect x="736.7" y="69.9" width="6.5" height="6.5" fill="#00ff12"/>
<rect x="742.7" y="69.9" width="6.5" height="6.5" fill="#00ff11"/>
<rect x="748.7" y="69.9" width="6.5" height="6.5" fill="#00ff10"/>
<rect x="754.7" y="69.9" width="6.5" height="6.5" fill="#00ff0f"/>
<rect x="760.7" y="69.9" width="6.5" height="6.5" fill="#00ff0e"/>
<rect x="766.7" y="69.9" width="6.5" height="6.5" fill="#00ff0d"/>
<rect x="772.7" y="69.9" width="6.5" height="6.5" fill="#00ff0c"/>
<rect x="778.7" y="69.9" width="6.5" height="6.5" fill="#00ff0b"/>
<rect x="784.7" y="69.9" width="6.5" height="6.5" fill="#00ff0a"/>
<rect x="790.7" y="69.9" width="6.5" height="6.5" fill="#00ff08"/>
<rect x="796.7" y="69.9" width="6.5" height="6.5" fill="#00ff07"/>
<rect x="802.7" y="69.9" width="6.5" height="6.5" fill="#00ff06"/>
<rect x="808.7" y="69.9" width="6.5" height="6.5" fill="#00ff05"/>
<rect x="814.7" y="69.9" width="6.5" height="6.5" fill="#00ff04"/>
<rect x="820.7" y="69.9" width="6.5" height="6.5" fill="#00ff03"/>
<rect x="826.7" y="69.9" width="6.5" height="6.5" fill="#00ff02"/>
<rect x="832.7" y="69.9" width="6.5" height="6.5" fill="#00ff02"/>
<rect x="838.7" y="69.9" width="6.5" height="6.5" fill="#00ff01"/>
<rect x="844.7" y="69.9" width="6.5" height="6.5" fill="#00ff00"/>
<rect x="850.7" y="69.9" width="6.5" height="6.5" fill="#00ff00"/>
<rect x="856.7" y="69.9" width="6.5" height="6.5" fill="#00ff00"/>
<rect x="862.7" y="69.9" width="6.5" height="6.5" fill="#00ff00"/>
<rect x="868.7" y="69.9" width="6.5" height="6.5" fill="#00ff00"/>
<rect x="874.7" y="69.9" width="6.5" height="6.5" fill="#00ff00"/>
<rect x="880.7" y="69.9" width="6.5" height="6.5" fill="#00ff00"/>
<rect x="736.7" y="75.9" width="6.5" height="6.5" fill="#00ff15"/>
<rect x="742.7" y="75.9" width="6.5" height="6.5" fill="#00ff14"/>
<rect x="748.7" y="75.9" width="6.5" height="6.5" fill="#00ff13"/>
<rect x="754.7" y="75.9" width="6.5" height="6.5" fill="#00ff12"/>
<rect x="760.7" y="75.9" width="6.5" height="6.5" fill="#00ff10"/>
<rect x="766.7" y="75.9" width="6.5" height="6.5" fill="#00ff0f"/>
<rect x="772.7" y="75.9" width="6.5" height="6.5" fill="#00ff0e"/>
<rect x="778.7" y="75.9" width="6.5" height="6.5" fill="#00ff0d"/>
<rect x="784.7" y="75.9" width="6.5" height="6.5" fill="#00ff0c"/>
<rect x="790.7" y="75.9" width="6.5" height="6.5" fill="#00ff0b"/>
<rect x="796.7" y="75.9" width="6.5" height="6.5" fill="#00ff09"/>
<rect x="802.7" y="75.9" width="6.5" height="6.5" fill="#00ff08"/>
<rect x="808.7" y="75.9" width="6.5" height="6.5" fill="#00ff07"/>
<rect x="814.7" y="75.9" width="6.5" height="6.5" fill="#00ff06"/>
<rect x="820.7" y="75.9" width="6.5" height="6.5" fill="#00ff05"/>
<rect x="826.7" y="75.9" width="6.5" height="6.5" fill="#00ff04"/>
<rect x="832.7" y="75.9" width="6.5" height="6.5" fill="#00ff03"/>
<rect x="838.7" y="75.9" width="6.5" height="6.5" fill="#00ff02"/>
<rect x="844.7" y="75.9" width="6.5" height="6.5" fill="#00ff01"/>
<rect x="850.7" y="75.9" width="6.5" height="6.5" fill="#00ff01"/>
<rect x="856.7" y="75.9" width="6.5" height="6.5" fill="#00ff00"/>
<rect x="862.7" y="75.9" width="6.5" height="6.5" fill="#00ff00"/>
<rect x="868.7" y="75.9" width="6.5" height="6.5" fill="#00ff00"/>
<rect x="874.7" y="75.9" width="6.5" height="6.5" fill="#00ff00"/>
<rect x="880.7" y="75.9" width="6.5" height="6.5" fill="#00ff00"/>
<rect x="886.7" y="75.9" width="6.5" height="6.5" fill="#03ff00"/>
<rect x="892.7" y="75.9" width="6.5" height="6.5" fill="#06ff00"/>
<rect x="730.7" y="81.9" width="6.5" height="6.5" fill="#00ff19"/>
<rect x="736.7" y="81.9" width="6.5" height="6.5" fill="#00ff18"/>
<rect x="742.7" y="81.9" width="6.5" height="6.5" fill="#00ff17"/>
<rect x="748.7" y="81.9" width="6.5" height="6.5" fill="#00ff16"/>
<rect x="754.7" y="81.9" width="6.5" height="6.5" fill="#00ff14"/>
<rect x="760.7" y="81.9" width="6.5" height="6.5" fill="#00ff13"/>
<rect x="766.7" y="81.9" width="6.5" height="6.5" fill="#00ff12"/>
<rect x="772.7" y="81.9" width="6.5" height="6.5" fill="#00ff11"/>
<rect x="778.7" y="81.9" width="6.5" height="6.5" fill="#00ff10"/>
<rect x="784.7" y="81.9" width="6.5" height="6.5" fill="#00ff0e"/>
<rect x="790.7" y="81.9" width="6.5" height="6.5" fill="#00ff0d"/>
<rect x="796.7" y="81.9" width="6.5" height="6.5" fill="#00ff0c"/>
<rect x="802.7" y="81.9" width="6.5" height="6.5" fill="#00ff0b"/>
<rect x="808.7" y="81.9" width="6.5" height="6.5" fill="#00ff09"/>
<rect x="814.7" y="81.9" width="6.5" height="6.5" fill="#00ff08"/>
<rect x="820.7" y="81.9" width="6.5" height="6.5" fill="#00ff07"/>
<rect x="826.7" y="81.9" width="6.5" height="6.5" fill="#00ff06"/>
<rect x="832.7" y="81.9" width="6.5" height="6.5" fill="#00ff05"/>
<rect x="838.7" y="81.9" width="6.5" height="6.5" fill="#00ff04"/>
<rect x="844.7" y="81.9" width="6.5" height="6.5" fill="#00ff03"/>
<rect x="850.7" y="81.9" width="6.5" height="6.5" fill="#00ff02"/>
<rect x="856.7" y="81.9" width="6.5" height="6.5" fill="#00ff01"/>
<rect x="862.7" y="81.9" width="6.5" height="6.5" fill="#00ff00"/>
<rect x="868.7" y="81.9" width="6.5" height="6.5" fill="#00ff00"/>
<rect x="874.7" y="81.9" width="6.5" height="6.5" fill="#00ff00"/>
<rect x="880.7" y="81.9" width="6.5" height="6.5" fill="#01ff00"/>
<rect x="886.7" y="81.9" width="6.5" height="6.5" fill="#04ff00"/>
<rect x="892.7" y="81.9" width="6.5" height="6.5" fill="#07ff00"/>
<rect x="898.7" y="81.9" width="6.5" height="6.5" fill="#0cff00"/>
<rect x="730.7" y="87.9" width="6.5" height="6.5" fill="#00ff1c"/>
<rect x="736.7" y="87.9" width="6.5" height="6.5" fill="#00ff1b"/>
<rect x="742.7" y="87.9" width="6.5" height="6.5" fill="#00ff1a"/>
<rect x="748.7" y="87.9" width="6.5" height="6.5" fill="#00ff19"/>
<rect x="754.7" y="87.9" width="6.5" height="6.5" fill="#00ff17"/>
<rect x="760.7" y="87.9" width="6.5" height="6.5" fill="#00ff16"/>
<rect x="766.7" y="87.9" width="6.5" height="6.5" fill="#00ff15"/>
<rect x="772.7" y="87.9" width="6.5" height="6.5" fill="#00ff14"/>
<rect x="778.7" y="87.9" width="6.5" height="6.5" fill="#00ff12"/>
<rect x="784.7" y="87.9" width="6.5" height="6.5" fill="#00ff11"/>
<rect x="790.7" y="87.9" width="6.5" height="6.5" fill="#00ff10"/>
<rect x="796.7" y="87.9" width="6.5" height="6.5" fill="#00ff0e"/>
<rect x="802.7" y="87.9" width="6.5" height="6.5" fill="#00ff0d"/>
<rect x="808.7" y="87.9" width="6.5" height="6.5" fill="#00ff0c"/>
<rect x="814.7" y="87.9" width="6.5" height="6.5" fill="#00ff0b"/>
<rect x="820.7" y="87.9" width="6.5" height="6.5" fill="#00ff09"/>
<rect x="826.7" y="87.9" width="6.5" height="6.5" fill="#00ff08"/>
<rect x="832.7" y="87.9" width="6.5" height="6.5" fill="#00ff07"/>
<rect x="838.7" y="87.9" width="6.5" height="6.5" fill="#00ff06"/>
<rect x="844.7" y="87.9" width="6.5" height="6.5" fill="#00ff05"/>
<rect x="850.7" y="87.9" width="6.5" height="6.5" fill="#00ff04"/>
<rect x="856.7" y="87.9" width="6.5" height="6.5" fill="#00ff03"/>
<rect x="862.7" y="87.9" width="6.5" height="6.5" fill="#00ff02"/>
<rect x="868.7" y="87.9" width="6.5" height="6.5" fill="#00ff01"/>
<rect x="874.7" y="87.9" width="6.5" height="6.5" fill="#00ff00"/>
<rect x="880.7" y="87.9" width="6.5" height="6.5" fill="#01ff00"/>
<rect x="886.7" y="87.9" width="6.5" height="6.5" fill="#05ff00"/>
<rect x="892.7" y="87.9" width="6.5" height="6.5" fill="#09ff00"/>
<rect x="898.7" y="87.9" width="6.5" height="6.5" fill="#0eff00"/>
<rect x="904.7" y="87.9" width="6.5" height="6.5" fill="#13ff00"/>
<rect x="910.7" y="87.9" width="6.5" height="6.5" fill="#19ff00"/>
<rect x="730.7" y="93.9" width="6.5" height="6.5" fill="#00ff20"/>
<rect x="736.7" y="93.9" width="6.5" height="6.5" fill="#00ff1e"/>
<rect x="742.7" y="93.9" width="6.5" height="6.5" fill="#00ff1d"/>
<rect x="748.7" y="93.9" width="6.5" height="6.5" fill="#00ff1c"/>
<rect x="754.7" y="93.9" width="6.5" height="6.5" fill="#00ff1b"/>
<rect x="760.7" y="93.9" width="6.5" height="6.5" fill="#00ff19"/>
<rect x="766.7" y="93.9" width="6.5" height="6.5" fill="#00ff18"/>
<rect x="772.7" y="93.9" width="6.5" height="6.5" fill="#00ff17"/>
<rect x="778.7" y="93.9" width="6.5" height="6.5" fill="#00ff15"/>
<rect x="784.7" y="93.9" width="6.5" height="6.5" fill="#00ff14"/>
<rect x="790.7" y="93.9" width="6.5" height="6.5" fill="#00ff13"/>
<rect x="796.7" y="93.9" width="6.5" height="6.5" fill="#00ff11"/>
<rect x="802.7" y="93.9" width="6.5" height="6.5" fill="#00ff10"/>
<rect x="808.7" y="93.9" width="6.5" height="6.5" fill="#00ff0f"/>
<rect x="814.7" y="93.9" width="6.5" height="6.5" fill="#00ff0d"/>
<rect x="820.7" y="93.9" width="6.5" height="6.5" fill="#00ff0c"/>
<rect x="826.7" y="93.9" width="6.5" height="6.5" fill="#00ff0b"/>
<rect x="832.7" y="93.9" width="6.5" height="6.5" fill="#00ff09"/>
<rect x="838.7" y="93.9" width="6.5" height="6.5" fill="#00ff08"/>
<rect x="844.7" y="93.9" width="6.5" height="6.5" fill="#00ff07"/>
<rect x="850.7" y="93.9" width="6.5" height="6.5" fill="#00ff06"/>
<rect x="856.7" y="93.9" width="6.5" height="6.5" fill="#00ff05"/>
<rect x="862.7" y="93.9" width="6.5" height="6.5" fill="#00ff03"/>
<rect x="868.7" y="93.9" width="6.5" height="6.5" fill="#00ff02"/>
<rect x="874.7" y="93.9" width="6.5" height="6.5" fill="#00ff01"/>
<rect x="880.7" y="93.9" width="6.5" height="6.5" fill="#02ff00"/>
<rect x="886.7" y="93.9" width="6.5" height="6.5" fill="#06ff00"/>
<rect x="892.7" y="93.9" width="6.5" height="6.5" fill="#0aff00"/>
<rect x="898.7" y="93.9" width="6.5" height="6.5" fill="#10ff00"/>
<rect x="904.7" y="93.9" width="6.5" height="6.5" fill="#16ff00"/>
<rect x="910.7" y="93.9" width="6.5" height="6.5" fill="#1cff00"/>
<rect x="916.7" y="93.9" width="6.5" height="6.5" fill="#23ff00"/>
<rect x="730.7" y="99.9" width="6.5" height="6.5" fill="#00ff23"/>
<rect x="736.7" y="99.9" width="6.5" height="6.5" fill="#00ff22"/>
<rect x="742.7" y="99.9" width="6.5" height="6.5" fill="#00ff21"/>
<rect x="748.7" y="99.9" width="6.5" height="6.5" fill="#00ff1f"/>
<rect x="754.7" y="99.9" width="6.5" height="6.5" fill="#00ff1e"/>
<rect x="760.7" y="99.9" width="6.5" height="6.5" fill="#00ff1d"/>
<rect x="766.7" y="99.9" width="6.5" height="6.5" fill="#00ff1b"/>
<rect x="772.7" y="99.9" width="6.5" height="6.5" fill="#00ff1a"/>
<rect x="778.7" y="99.9" width="6.5" height="6.5" fill="#00ff19"/>
<rect x="784.7" y="99.9" width="6.5" height="6.5" fill="#00ff17"/>
<rect x="790.7" y="99.9" width="6.5" height="6.5" fill="#00ff16"/>
<rect x="796.7" y="99.9" width="6.5" height="6.5" fill="#00ff14"/>
<rect x="802.7" y="99.9" width="6.5" height="6.5" fill="#00ff13"/>
<rect x="808.7" y="99.9" width="6.5" height="6.5" fill="#00ff12"/>
<rect x="814.7" y="99.9" width="6.5" height="6.5" fill="#00ff10"/>
<rect x="820.7" y="99.9" width="6.5" height="6.5" fill="#00ff0f"/>
<rect x="826.7" y="99.9" width="6.5" height="6.5" fill="#00ff0e"/>
<rect x="832.7" y="99.9" width="6.5" height="6.5" fill="#00ff0c"/>
<rect x="838.7" y="99.9" width="6.5" height="6.5" fill="#00ff0b"/>
<rect x="844.7" y="99.9" width="6.5" height="6.5" fill="#00ff09"/>
<rect x="850.7" y="99.9" width="6.5" height="6.5" fill="#00ff08"/>
<rect x="856.7" y="99.9" width="6.5" height="6.5" fill="#00ff07"/>
<rect x="862.7" y="99.9" width="6.5" height="6.5" fill="#00ff06"/>
<rect x="868.7" y="99.9" width="6.5" height="6.5" fill="#00ff04"/>
<rect x="874.7" y="99.9" width="6.5" height="6.5" fill="#00ff03"/>
<rect x="880.7" y="99.9" width="6.5" height="6.5" fill="#03ff02"/>
<rect x="886.7" y="99.9" width="6.5" height="6.5" fill="#07ff01"/>
<rect x="892.7" y="99.9" width="6.5" height="6.5" fill="#0cff00"/>
<rect x="898.7" y="99.9" width="6.5" height="6.5" fill="#12ff00"/>
<rect x="904.7" y="99.9" width="6.5" height="6.5" fill="#18ff00"/>
<rect x="910.7" y="99.9" width="6.5" height="6.5" fill="#1fff00"/>
<rect x="916.7" y="99.9" width="6.5" height="6.5" fill="#26ff00"/>
<rect x="922.7" y="99.9" width="6.5" height="6.5" fill="#2eff00"/>
<rect x="928.7" y="99.9" width="6.5" height="6.5" fill="#36ff00"/>
<rect x="730.7" y="105.9" width="6.5" height="6.5" fill="#00ff27"/>
<rect x="736.7" y="105.9" width="6.5" height="6.5" fill="#00ff26"/>
<rect x="742.7" y="105.9" width="6.5" height="6.5" fill="#00ff25"/>
<rect x="748.7" y="105.9" width="6.5" height="6.5" fill="#00ff23"/>
<rect x="754.7" y="105.9" width="6.5" height="6.5" fill="#00ff22"/>
<rect x="760.7" y="105.9" width="6.5" height="6.5" fill="#00ff20"/>
<rect x="766.7" y="105.9" width="6.5" height="6.5" fill="#00ff1f"/>
<rect x="772.7" y="105.9" width="6.5" height="6.5" fill="#00ff1e"/>
<rect x="778.7" y="105.9" width="6.5" height="6.5" fill="#00ff1c"/>
<rect x="784.7" y="105.9" width="6.5" height="6.5" fill="#00ff1b"/>
<rect x="790.7" y="105.9" width="6.5" height="6.5" fill="#00ff19"/>
<rect x="796.7" y="105.9" width="6.5" height="6.5" fill="#00ff18"/>
<rect x="802.7" y="105.9" width="6.5" height="6.5" fill="#00ff16"/>
<rect x="808.7" y="105.9" width="6.5" height="6.5" fill="#00ff15"/>
<rect x="814.7" y="105.9" width="6.5" height="6.5" fill="#00ff14"/>
<rect x="820.7" y="105.9" width="6.5" height="6.5" fill="#00ff12"/>
<rect x="826.7" y="105.9" width="6.5" height="6.5" fill="#00ff11"/>
<rect x="832.7" y="105.9" width="6.5" height="6.5" fill="#00ff0f"/>
<rect x="838.7" y="105.9" width="6.5" height="6.5" fill="#00ff0e"/>
<rect x="844.7" y="105.9" width="6.5" height="6.5" fill="#00ff0c"/>
<rect x="850.7" y="105.9" width="6.5" height="6.5" fill="#00ff0b"/>
<rect x="856.7" y="105.9" width="6.5" height="6.5" fill="#00ff09"/>
<rect x="862.7" y="105.9" width="6.5" height="6.5" fill="#00ff08"/>
<rect x="868.7" y="105.9" width="6.5" height="6.5" fill="#00ff07"/>
<rect x="874.7" y="105.9" width="6.5" height="6.5" fill="#01ff05"/>
<rect x="880.7" y="105.9" width="6.5" height="6.5" fill="#04ff04"/>
<rect x="886.7" y="105.9" width="6.5" height="6.5" fill="#09ff03"/>
<rect x="892.7" y="105.9" width="6.5" height="6.5" fill="#0eff02"/>
<rect x="898.7" y="105.9" width="6.5" height="6.5" fill="#14ff01"/>
<rect x="904.7" y="105.9" width="6.5" height="6.5" fill="#1bff00"/>
<rect x="910.7" y="105.9" width="6.5" height="6.5" fill="#22ff00"/>
<rect x="916.7" y="105.9" width="6.5" height="6.5" fill="#2aff00"/>
<rect x="922.7" y="105.9" width="6.5" height="6.5" fill="#32ff00"/>
<rect x="928.7" y="105.9" width="6.5" height="6.5" fill="#3aff00"/>
<rect x="934.7" y="105.9" width="6.5" height="6.5" fill="#44ff00"/>
<rect x="730.7" y="111.9" width="6.5" height="6.5" fill="#00ff2b"/>
<rect x="736.7" y="111.9" width="6.5" height="6.5" fill="#00ff2a"/>
<rect x="742.7" y="111.9" width="6.5" height="6.5" fill="#00ff29"/>
<rect x="748.7" y="111.9" width="6.5" height="6.5" fill="#00ff27"/>
<rect x="754.7" y="111.9" width="6.5" height="6.5" fill="#00ff26"/>
<rect x="760.7" y="111.9" width="6.5" height="6.5" fill="#00ff24"/>
<rect x="766.7" y="111.9" width="6.5" height="6.5" fill="#00ff23"/>
<rect x="772.7" y="111.9" width="6.5" height="6.5" fill="#00ff22"/>
<rect x="778.7" y="111.9" width="6.5" height="6.5" fill="#00ff20"/>
<rect x="784.7" y="111.9" width="6.5" height="6.5" fill="#00ff1f"/>
<rect x="790.7" y="111.9" width="6.5" height="6.5" fill="#00ff1d"/>
<rect x="796.7" y="111.9" width="6.5" height="6.5" fill="#00ff1c"/>
<rect x="802.7" y="111.9" width="6.5" height="6.5" fill="#00ff1a"/>
<rect x="808.7" y="111.9" width="6.5" height="6.5" fill="#00ff19"/>
<rect x="814.7" y="111.9" width="6.5" height="6.5" fill="#00ff17"/>
<rect x="820.7" y="111.9" width="6.5" height="6.5" fill="#00ff16"/>
<rect x="826.7" y="111.9" width="6.5" height="6.5" fill="#00ff14"/>
<rect x="832.7" y="111.9" width="6.5" height="6.5" fill="#00ff12"/>
<rect x="838.7" y="111.9" width="6.5" height="6.5" fill="#00ff11"/>
<rect x="844.7" y="111.9" width="6.5" height="6.5" fill="#00ff0f"/>
<rect x="850.7" y="111.9" width="6.5" height="6.5" fill="#00ff0e"/>
<rect x="856.7" y="111.9" width="6.5" height="6.5" fill="#00ff0c"/>
<rect x="862.7" y="111.9" width="6.5" height="6.5" fill="#00ff0b"/>
<rect x="868.7" y="111.9" width="6.5" height="6.5" fill="#00ff09"/>
<rect x="874.7" y="111.9" width="6.5" height="6.5" fill="#02ff08"/>
<rect x="880.7" y="111.9" width="6.5" height="6.5" fill="#05ff06"/>
<rect x="886.7" y="111.9" width="6.5" height="6.5" fill="#0aff05"/>
<rect x="892.7" y="111.9" width="6.5" height="6.5" fill="#10ff04"/>
<rect x="898.7" y="111.9" width="6.5" height="6.5" fill="#17ff02"/>
<rect x="904.7" y="111.9" width="6.5" height="6.5" fill="#1eff01"/>
<rect x="910.7" y="111.9" width="6.5" height="6.5" fill="#25ff00"/>
<rect x="916.7" y="111.9" width="6.5" height="6.5" fill="#2dff00"/>
<rect x="922.7" y="111.9" width="6.5" height="6.5" fill="#36ff00"/>
<rect x="928.7" y="111.9" width="6.5" height="6.5" fill="#3fff00"/>
<rect x="934.7" y="111.9" width="6.5" height="6.5" fill="#49ff00"/>
<rect x="940.7" y="111.9" width="6.5" height="6.5" fill="#53ff00"/>
<rect x="946.7" y="111.9" width="6.5" height="6.5" fill="#5eff00"/>
<rect x="730.7" y="117.9" width="6.5" height="6.5" fill="#00ff30"/>
<rect x="736.7" y="117.9" width="6.5" height="6.5" fill="#00ff2f"/>
<rect x="742.7" y="117.9" width="6.5" height="6.5" fill="#00ff2d"/>
<rect x="748.7" y="117.9" width="6.5" height="6.5" fill="#00ff2c"/>
<rect x="754.7" y="117.9" width="6.5" height="6.5" fill="#00ff2a"/>
<rect x="760.7" y="117.9" width="6.5" height="6.5" fill="#00ff29"/>
<rect x="766.7" y="117.9" width="6.5" height="6.5" fill="#00ff27"/>
<rect x="772.7" y="117.9" width="6.5" height="6.5" fill="#00ff26"/>
<rect x="778.7" y="117.9" width="6.5" height="6.5" fill="#00ff24"/>
<rect x="784.7" y="117.9" width="6.5" height="6.5" fill="#00ff23"/>
<rect x="790.7" y="117.9" width="6.5" height="6.5" fill="#00ff21"/>
<rect x="796.7" y="117.9" width="6.5" height="6.5" fill="#00ff20"/>
<rect x="802.7" y="117.9" width="6.5" height="6.5" fill="#00ff1e"/>
<rect x="808.7" y="117.9" width="6.5" height="6.5" fill="#00ff1d"/>
<rect x="814.7" y="117.9" width="6.5" height="6.5" fill="#00ff1b"/>
<rect x="820.7" y="117.9" width="6.5" height="6.5" fill="#00ff19"/>
<rect x="826.7" y="117.9" width="6.5" height="6.5" fill="#00ff18"/>
<rect x="832.7" y="117.9" width="6.5" height="6.5" fill="#00ff16"/>
<rect x="838.7" y="117.9" width="6.5" height="6.5" fill="#00ff15"/>
<rect x="844.7" y="117.9" width="6.5" height="6.5" fill="#00ff13"/>
<rect x="850.7" y="117.9" width="6.5" height="6.5" fill="#00ff11"/>
<rect x="856.7" y="117.9" width="6.5" height="6.5" fill="#00ff10"/>
<rect x="862.7" y="117.9" width="6.5" height="6.5" fill="#00ff0e"/>
<rect x="868.7" y="117.9" width="6.5" height="6.5" fill="#00ff0d"/>
<rect x="874.7" y="117.9" width="6.5" height="6.5" fill="#03ff0b"/>
<rect x="880.7" y="117.9" width="6.5" height="6.5" fill="#07ff09"/>
<rect x="886.7" y="117.9" width="6.5" height="6.5" fill="#0cff08"/>
<rect x="892.7" y="117.9" width="6.5" height="6.5" fill="#12ff06"/>
<rect x="898.7" y="117.9" width="6.5" height="6.5" fill="#19ff05"/>
<rect x="904.7" y="117.9" width="6.5" height="6.5" fill="#21ff03"/>
<rect x="910.7" y="117.9" width="6.5" height="6.5" fill="#29ff02"/>
<rect x="916.7" y="117.9" width="6.5" height="6.5" fill="#31ff01"/>
<rect x="922.7" y="117.9" width="6.5" height="6.5" fill="#3bff00"/>
<rect x="928.7" y="117.9" width="6.5" height="6.5" fill="#44ff00"/>
<rect x="934.7" y="117.9" width="6.5" height="6.5" fill="#4fff00"/>
<rect x="940.7" y="117.9" width="6.5" height="6.5" fill="#5aff00"/>
<rect x="946.7" y="117.9" width="6.5" height="6.5" fill="#66ff00"/>
<rect x="952.7" y="117.9" width="6.5" height="6.5" fill="#72ff00"/>
<rect x="730.7" y="123.9" width="6.5" height="6.5" fill="#00ff35"/>
<rect x="736.7" y="123.9" width="6.5" height="6.5" fill="#00ff33"/>
<rect x="742.7" y="123.9" width="6.5" height="6.5" fill="#00ff32"/>
<rect x="748.7" y="123.9" width="6.5" height="6.5" fill="#00ff30"/>
<rect x="754.7" y="123.9" width="6.5" height="6.5" fill="#00ff2f"/>
<rect x="760.7" y="123.9" width="6.5" height="6.5" fill="#00ff2d"/>
<rect x="766.7" y="123.9" width="6.5" height="6.5" fill="#00ff2c"/>
<rect x="772.7" y="123.9" width="6.5" height="6.5" fill="#00ff2a"/>
<rect x="778.7" y="123.9" width="6.5" height="6.5" fill="#00ff29"/>
<rect x="784.7" y="123.9" width="6.5" height="6.5" fill="#00ff27"/>
<rect x="790.7" y="123.9" width="6.5" height="6.5" fill="#00ff26"/>
<rect x="796.7" y="123.9" width="6.5" height="6.5" fill="#00ff24"/>
<rect x="802.7" y="123.9" width="6.5" height="6.5" fill="#00ff22"/>
<rect x="808.7" y="123.9" width="6.5" height="6.5" fill="#00ff21"/>
<rect x="814.7" y="123.9" width="6.5" height="6.5" fill="#00ff1f"/>
<rect x="820.7" y="123.9" width="6.5" height="6.5" fill="#00ff1e"/>
<rect x="826.7" y="123.9" width="6.5" height="6.5" fill="#00ff1c"/>
<rect x="832.7" y="123.9" width="6.5" height="6.5" fill="#00ff1a"/>
<rect x="838.7" y="123.9" width="6.5" height="6.5" fill="#00ff19"/>
<rect x="844.7" y="123.9" width="6.5" height="6.5" fill="#00ff17"/>
<rect x="850.7" y="123.9" width="6.5" height="6.5" fill="#00ff15"/>
<rect x="856.7" y="123.9" width="6.5" height="6.5" fill="#00ff13"/>
<rect x="862.7" y="123.9" width="6.5" height="6.5" fill="#00ff12"/>
<rect x="868.7" y="123.9" width="6.5" height="6.5" fill="#00ff10"/>
<rect x="874.7" y="123.9" width="6.5" height="6.5" fill="#04ff0e"/>
<rect x="880.7" y="123.9" width="6.5" height="6.5" fill="#09ff0d"/>
<rect x="886.7" y="123.9" width="6.5" height="6.5" fill="#0eff0b"/>
<rect x="892.7" y="123.9" width="6.5" height="6.5" fill="#15ff09"/>
<rect x="898.7" y="123.9" width="6.5" height="6.5" fill="#1cff08"/>
<rect x="904.7" y="123.9" width="6.5" height="6.5" fill="#24ff06"/>
<rect x="910.7" y="123.9" width="6.5" height="6.5" fill="#2dff05"/>
<rect x="916.7" y="123.9" width="6.5" height="6.5" fill="#36ff03"/>
<rect x="922.7" y="123.9" width="6.5" height="6.5" fill="#40ff02"/>
<rect x="928.7" y="123.9" width="6.5" height="6.5" fill="#4aff01"/>
<rect x="934.7" y="123.9" width="6.5" height="6.5" fill="#55ff00"/>
<rect x="940.7" y="123.9" width="6.5" height="6.5" fill="#61ff00"/>
<rect x="946.7" y="123.9" width="6.5" height="6.5" fill="#6dff00"/>
<rect x="952.7" y="123.9" width="6.5" height="6.5" fill="#7aff00"/>
<rect x="958.7" y="123.9" width="6.5" height="6.5" fill="#88ff00"/>
<rect x="730.7" y="129.9" width="6.5" height="6.5" fill="#00ff3a"/>
<rect x="736.7" y="129.9" width="6.5" height="6.5" fill="#00ff38"/>
<rect x="742.7" y="129.9" width="6.5" height="6.5" fill="#00ff37"/>
<rect x="748.7" y="129.9" width="6.5" height="6.5" fill="#00ff36"/>
<rect x="754.7" y="129.9" width="6.5" height="6.5" fill="#00ff34"/>
<rect x="760.7" y="129.9" width="6.5" height="6.5" fill="#00ff32"/>
<rect x="766.7" y="129.9" width="6.5" height="6.5" fill="#00ff31"/>
<rect x="772.7" y="129.9" width="6.5" height="6.5" fill="#00ff2f"/>
<rect x="778.7" y="129.9" width="6.5" height="6.5" fill="#00ff2e"/>
<rect x="784.7" y="129.9" width="6.5" height="6.5" fill="#00ff2c"/>
<rect x="790.7" y="129.9" width="6.5" height="6.5" fill="#00ff2b"/>
<rect x="796.7" y="129.9" width="6.5" height="6.5" fill="#00ff29"/>
<rect x="802.7" y="129.9" width="6.5" height="6.5" fill="#00ff27"/>
<rect x="808.7" y="129.9" width="6.5" height="6.5" fill="#00ff26"/>
<rect x="814.7" y="129.9" width="6.5" height="6.5" fill="#00ff24"/>
<rect x="820.7" y="129.9" width="6.5" height="6.5" fill="#00ff22"/>
<rect x="826.7" y="129.9" width="6.5" height="6.5" fill="#00ff20"/>
<rect x="832.7" y="129.9" width="6.5" height="6.5" fill="#00ff1f"/>
<rect x="838.7" y="129.9" width="6.5" height="6.5" fill="#00ff1d"/>
<rect x="844.7" y="129.9" width="6.5" height="6.5" fill="#00ff1b"/>
<rect x="850.7" y="129.9" width="6.5" height="6.5" fill="#00ff19"/>
<rect x="856.7" y="129.9" width="6.5" height="6.5" fill="#00ff18"/>
<rect x="862.7" y="129.9" width="6.5" height="6.5" fill="#00ff16"/>
<rect x="868.7" y="129.9" width="6.5" height="6.5" fill="#01ff14"/>
<rect x="874.7" y="129.9" width="6.5" height="6.5" fill="#05ff12"/>
<rect x="880.7" y="129.9" width="6.5" height="6.5" fill="#0aff10"/>
<rect x="886.7" y="129.9" width="6.5" height="6.5" fill="#11ff0f"/>
<rect x="892.7" y="129.9" width="6.5" height="6.5" fill="#18ff0d"/>
<rect x="898.7" y="129.9" width="6.5" height="6.5" fill="#20ff0b"/>
<rect x="904.7" y="129.9" width="6.5" height="6.5" fill="#28ff09"/>
<rect x="910.7" y="129.9" width="6.5" height="6.5" fill="#31ff08"/>
<rect x="916.7" y="129.9" width="6.5" height="6.5" fill="#3bff06"/>
<rect x="922.7" y="129.9" width="6.5" height="6.5" fill="#45ff04"/>
<rect x="928.7" y="129.9" width="6.5" height="6.5" fill="#50ff03"/>
<rect x="934.7" y="129.9" width="6.5" height="6.5" fill="#5cff01"/>
<rect x="940.7" y="129.9" width="6.5" height="6.5" fill="#69ff00"/>
<rect x="946.7" y="129.9" width="6.5" height="6.5" fill="#76ff00"/>
<rect x="952.7" y="129.9" width="6.5" height="6.5" fill="#84ff00"/>
<rect x="958.7" y="129.9" width="6.5" height="6.5" fill="#92ff00"/>
<rect x="964.7" y="129.9" width="6.5" height="6.5" fill="#a2ff00"/>
<rect x="970.7" y="129.9" width="6.5" height="6.5" fill="#b2ff00"/>
<rect x="730.7" y="135.9" width="6.5" height="6.5" fill="#00ff40"/>
<rect x="736.7" y="135.9" width="6.5" height="6.5" fill="#00ff3e"/>
<rect x="742.7" y="135.9" width="6.5" height="6.5" fill="#00ff3d"/>
<rect x="748.7" y="135.9" width="6.5" height="6.5" fill="#00ff3b"/>
<rect x="754.7" y="135.9" width="6.5" height="6.5" fill="#00ff3a"/>
<rect x="760.7" y="135.9" width="6.5" height="6.5" fill="#00ff38"/>
<rect x="766.7" y="135.9" width="6.5" height="6.5" fill="#00ff36"/>
<rect x="772.7" y="135.9" width="6.5" height="6.5" fill="#00ff35"/>
<rect x="778.7" y="135.9" width="6.5" height="6.5" fill="#00ff33"/>
<rect x="784.7" y="135.9" width="6.5" height="6.5" fill="#00ff32"/>
<rect x="790.7" y="135.9" width="6.5" height="6.5" fill="#00ff30"/>
<rect x="796.7" y="135.9" width="6.5" height="6.5" fill="#00ff2e"/>
<rect x="802.7" y="135.9" width="6.5" height="6.5" fill="#00ff2d"/>
<rect x="808.7" y="135.9" width="6.5" height="6.5" fill="#00ff2b"/>
<rect x="814.7" y="135.9" width="6.5" height="6.5" fill="#00ff29"/>
<rect x="820.7" y="135.9" width="6.5" height="6.5" fill="#00ff27"/>
<rect x="826.7" y="135.9" width="6.5" height="6.5" fill="#00ff26"/>
<rect x="832.7" y="135.9" width="6.5" height="6.5" fill="#00ff24"/>
<rect x="838.7" y="135.9" width="6.5" height="6.5" fill="#00ff22"/>
<rect x="844.7" y="135.9" width="6.5" height="6.5" fill="#00ff20"/>
<rect x="850.7" y="135.9" width="6.5" height="6.5" fill="#00ff1e"/>
<rect x="856.7" y="135.9" width="6.5" height="6.5" fill="#00ff1c"/>
<rect x="862.7" y="135.9" width="6.5" height="6.5" fill="#00ff1a"/>
<rect x="868.7" y="135.9" width="6.5" height="6.5" fill="#02ff19"/>
<rect x="874.7" y="135.9" width="6.5" height="6.5" fill="#07ff17"/>
<rect x="880.7" y="135.9" width="6.5" height="6.5" fill="#0cff15"/>
<rect x="886.7" y="135.9" width="6.5" height="6.5" fill="#13ff13"/>
<rect x="892.7" y="135.9" width="6.5" height="6.5" fill="#1bff11"/>
<rect x="898.7" y="135.9" width="6.5" height="6.5" fill="#23ff0f"/>
<rect x="904.7" y="135.9" width="6.5" height="6.5" fill="#2cff0d"/>
<rect x="910.7" y="135.9" width="6.5" height="6.5" fill="#36ff0b"/>
<rect x="916.7" y="135.9" width="6.5" height="6.5" fill="#40ff09"/>
<rect x="922.7" y="135.9" width="6.5" height="6.5" fill="#4cff07"/>
<rect x="928.7" y="135.9" width="6.5" height="6.5" fill="#57ff06"/>
<rect x="934.7" y="135.9" width="6.5" height="6.5" fill="#64ff04"/>
<rect x="940.7" y="135.9" width="6.5" height="6.5" fill="#71ff02"/>
<rect x="946.7" y="135.9" width="6.5" height="6.5" fill="#7fff01"/>
<rect x="952.7" y="135.9" width="6.5" height="6.5" fill="#8eff00"/>
<rect x="958.7" y="135.9" width="6.5" height="6.5" fill="#9eff00"/>
<rect x="964.7" y="135.9" width="6.5" height="6.5" fill="#aeff00"/>
<rect x="970.7" y="135.9" width="6.5" height="6.5" fill="#c0ff00"/>
<rect x="976.7" y="135.9" width="6.5" height="6.5" fill="#d2ff00"/>
<rect x="730.7" y="141.9" width="6.5" height="6.5" fill="#00ff46"/>
<rect x="736.7" y="141.9" width="6.5" height="6.5" fill="#00ff44"/>
<rect x="742.7" y="141.9" width="6.5" height="6.5" fill="#00ff43"/>
<rect x="748.7" y="141.9" width="6.5" height="6.5" fill="#00ff41"/>
<rect x="754.7" y="141.9" width="6.5" height="6.5" fill="#00ff3f"/>
<rect x="760.7" y="141.9" width="6.5" height="6.5" fill="#00ff3e"/>
<rect x="766.7" y="141.9" width="6.5" height="6.5" fill="#00ff3c"/>
<rect x="772.7" y="141.9" width="6.5" height="6.5" fill="#00ff3b"/>
<rect x="778.7" y="141.9" width="6.5" height="6.5" fill="#00ff39"/>
<rect x="784.7" y="141.9" width="6.5" height="6.5" fill="#00ff37"/>
<rect x="790.7" y="141.9" width="6.5" height="6.5" fill="#00ff36"/>
<rect x="796.7" y="141.9" width="6.5" height="6.5" fill="#00ff34"/>
<rect x="802.7" y="141.9" width="6.5" height="6.5" fill="#00ff32"/>
<rect x="808.7" y="141.9" width="6.5" height="6.5" fill="#00ff30"/>
<rect x="814.7" y="141.9" width="6.5" height="6.5" fill="#00ff2f"/>
<rect x="820.7" y="141.9" width="6.5" height="6.5" fill="#00ff2d"/>
<rect x="826.7" y="141.9" width="6.5" height="6.5" fill="#00ff2b"/>
<rect x="832.7" y="141.9" width="6.5" height="6.5" fill="#00ff29"/>
<rect x="838.7" y="141.9" width="6.5" height="6.5" fill="#00ff27"/>
<rect x="844.7" y="141.9" width="6.5" height="6.5" fill="#00ff25"/>
<rect x="850.7" y="141.9" width="6.5" height="6.5" fill="#00ff23"/>
<rect x="856.7" y="141.9" width="6.5" height="6.5" fill="#00ff22"/>
<rect x="862.7" y="141.9" width="6.5" height="6.5" fill="#00ff20"/>
<rect x="868.7" y="141.9" width="6.5" height="6.5" fill="#03ff1e"/>
<rect x="874.7" y="141.9" width="6.5" height="6.5" fill="#08ff1c"/>
<rect x="880.7" y="141.9" width="6.5" height="6.5" fill="#0fff1a"/>
<rect x="886.7" y="141.9" width="6.5" height="6.5" fill="#16ff18"/>
<rect x="892.7" y="141.9" width="6.5" height="6.5" fill="#1eff15"/>
<rect x="898.7" y="141.9" width="6.5" height="6.5" fill="#27ff13"/>
<rect x="904.7" y="141.9" width="6.5" height="6.5" fill="#31ff11"/>
<rect x="910.7" y="141.9" width="6.5" height="6.5" fill="#3bff0f"/>
<rect x="916.7" y="141.9" width="6.5" height="6.5" fill="#46ff0d"/>
<rect x="922.7" y="141.9" width="6.5" height="6.5" fill="#52ff0b"/>
<rect x="928.7" y="141.9" width="6.5" height="6.5" fill="#5fff09"/>
<rect x="934.7" y="141.9" width="6.5" height="6.5" fill="#6cff07"/>
<rect x="940.7" y="141.9" width="6.5" height="6.5" fill="#7bff05"/>
<rect x="946.7" y="141.9" width="6.5" height="6.5" fill="#8aff04"/>
<rect x="952.7" y="141.9" width="6.5" height="6.5" fill="#9aff02"/>
<rect x="958.7" y="141.9" width="6.5" height="6.5" fill="#abff01"/>
<rect x="964.7" y="141.9" width="6.5" height="6.5" fill="#bcff00"/>
<rect x="970.7" y="141.9" width="6.5" height="6.5" fill="#cfff00"/>
<rect x="976.7" y="141.9" width="6.5" height="6.5" fill="#e3ff00"/>
<rect x="982.7" y="141.9" width="6.5" height="6.5" fill="#f8ff00"/>
<rect x="988.7" y="141.9" width="6.5" height="6.5" fill="#fff100"/>
<rect x="730.7" y="147.9" width="6.5" height="6.5" fill="#00ff4c"/>
<rect x="736.7" y="147.9" width="6.5" height="6.5" fill="#00ff4b"/>
<rect x="742.7" y="147.9" width="6.5" height="6.5" fill="#00ff49"/>
<rect x="748.7" y="147.9" width="6.5" height="6.5" fill="#00ff47"/>
<rect x="754.7" y="147.9" width="6.5" height="6.5" fill="#00ff46"/>
<rect x="760.7" y="147.9" width="6.5" height="6.5" fill="#00ff44"/>
<rect x="766.7" y="147.9" width="6.5" height="6.5" fill="#00ff43"/>
<rect x="772.7" y="147.9" width="6.5" height="6.5" fill="#00ff41"/>
<rect x="778.7" y="147.9" width="6.5" height="6.5" fill="#00ff3f"/>
<rect x="784.7" y="147.9" width="6.5" height="6.5" fill="#00ff3e"/>
<rect x="790.7" y="147.9" width="6.5" height="6.5" fill="#00ff3c"/>
<rect x="796.7" y="147.9" width="6.5" height="6.5" fill="#00ff3a"/>
<rect x="802.7" y="147.9" width="6.5" height="6.5" fill="#00ff38"/>
<rect x="808.7" y="147.9" width="6.5" height="6.5" fill="#00ff37"/>
<rect x="814.7" y="147.9" width="6.5" height="6.5" fill="#00ff35"/>
<rect x="820.7" y="147.9" width="6.5" height="6.5" fill="#00ff33"/>
<rect x="826.7" y="147.9" width="6.5" height="6.5" fill="#00ff31"/>
<rect x="832.7" y="147.9" width="6.5" height="6.5" fill="#00ff2f"/>
<rect x="838.7" y="147.9" width="6.5" height="6.5" fill="#00ff2d"/>
<rect x="844.7" y="147.9" width="6.5" height="6.5" fill="#00ff2b"/>
<rect x="850.7" y="147.9" width="6.5" height="6.5" fill="#00ff29"/>
<rect x="856.7" y="147.9" width="6.5" height="6.5" fill="#00ff27"/>
<rect x="862.7" y="147.9" width="6.5" height="6.5" fill="#00ff25"/>
<rect x="868.7" y="147.9" width="6.5" height="6.5" fill="#05ff23"/>
<rect x="874.7" y="147.9" width="6.5" height="6.5" fill="#0aff21"/>
<rect x="880.7" y="147.9" width="6.5" height="6.5" fill="#11ff1f"/>
<rect x="886.7" y="147.9" width="6.5" height="6.5" fill="#19ff1d"/>
<rect x="892.7" y="147.9" width="6.5" height="6.5" fill="#22ff1b"/>
<rect x="898.7" y="147.9" width="6.5" height="6.5" fill="#2cff18"/>
<rect x="904.7" y="147.9" width="6.5" height="6.5" fill="#36ff16"/>
<rect x="910.7" y="147.9" width="6.5" height="6.5" fill="#41ff14"/>
<rect x="916.7" y="147.9" width="6.5" height="6.5" fill="#4dff12"/>
<rect x="922.7" y="147.9" width="6.5" height="6.5" fill="#5aff10"/>
<rect x="928.7" y="147.9" width="6.5" height="6.5" fill="#67ff0d"/>
<rect x="934.7" y="147.9" width="6.5" height="6.5" fill="#76ff0b"/>
<rect x="940.7" y="147.9" width="6.5" height="6.5" fill="#85ff09"/>
<rect x="946.7" y="147.9" width="6.5" height="6.5" fill="#95ff07"/>
<rect x="952.7" y="147.9" width="6.5" height="6.5" fill="#a6ff05"/>
<rect x="958.7" y="147.9" width="6.5" height="6.5" fill="#b9ff03"/>
<rect x="964.7" y="147.9" width="6.5" height="6.5" fill="#ccff01"/>
<rect x="970.7" y="147.9" width="6.5" height="6.5" fill="#e0ff00"/>
<rect x="976.7" y="147.9" width="6.5" height="6.5" fill="#f5ff00"/>
<rect x="982.7" y="147.9" width="6.5" height="6.5" fill="#fff300"/>
<rect x="988.7" y="147.9" width="6.5" height="6.5" fill="#ffdf00"/>
<rect x="994.7" y="147.9" width="6.5" height="6.5" fill="#ffcd00"/>
<rect x="736.7" y="153.9" width="6.5" height="6.5" fill="#00ff52"/>
<rect x="742.7" y="153.9" width="6.5" height="6.5" fill="#00ff50"/>
<rect x="748.7" y="153.9" width="6.5" height="6.5" fill="#00ff4e"/>
<rect x="754.7" y="153.9" width="6.5" height="6.5" fill="#00ff4d"/>
<rect x="760.7" y="153.9" width="6.5" height="6.5" fill="#00ff4b"/>
<rect x="766.7" y="153.9" width="6.5" height="6.5" fill="#00ff4a"/>
<rect x="772.7" y="153.9" width="6.5" height="6.5" fill="#00ff48"/>
<rect x="778.7" y="153.9" width="6.5" height="6.5" fill="#00ff46"/>
<rect x="784.7" y="153.9" width="6.5" height="6.5" fill="#00ff45"/>
<rect x="790.7" y="153.9" width="6.5" height="6.5" fill="#00ff43"/>
<rect x="796.7" y="153.9" width="6.5" height="6.5" fill="#00ff41"/>
<rect x="802.7" y="153.9" width="6.5" height="6.5" fill="#00ff3f"/>
<rect x="808.7" y="153.9" width="6.5" height="6.5" fill="#00ff3d"/>
<rect x="814.7" y="153.9" width="6.5" height="6.5" fill="#00ff3c"/>
<rect x="820.7" y="153.9" width="6.5" height="6.5" fill="#00ff3a"/>
<rect x="826.7" y="153.9" width="6.5" height="6.5" fill="#00ff38"/>
<rect x="832.7" y="153.9" width="6.5" height="6.5" fill="#00ff36"/>
<rect x="838.7" y="153.9" width="6.5" height="6.5" fill="#00ff34"/>
<rect x="844.7" y="153.9" width="6.5" height="6.5" fill="#00ff32"/>
<rect x="850.7" y="153.9" width="6.5" height="6.5" fill="#00ff30"/>
<rect x="856.7" y="153.9" width="6.5" height="6.5" fill="#00ff2e"/>
<rect x="862.7" y="153.9" width="6.5" height="6.5" fill="#01ff2c"/>
<rect x="868.7" y="153.9" width="6.5" height="6.5" fill="#06ff29"/>
<rect x="874.7" y="153.9" width="6.5" height="6.5" fill="#0dff27"/>
<rect x="880.7" y="153.9" width="6.5" height="6.5" fill="#14ff25"/>
<rect x="886.7" y="153.9" width="6.5" height="6.5" fill="#1dff23"/>
<rect x="892.7" y="153.9" width="6.5" height="6.5" fill="#26ff21"/>
<rect x="898.7" y="153.9" width="6.5" height="6.5" fill="#30ff1e"/>
<rect x="904.7" y="153.9" width="6.5" height="6.5" fill="#3cff1c"/>
<rect x="910.7" y="153.9" width="6.5" height="6.5" fill="#48ff1a"/>
<rect x="916.7" y="153.9" width="6.5" height="6.5" fill="#54ff17"/>
<rect x="922.7" y="153.9" width="6.5" height="6.5" fill="#62ff15"/>
<rect x="928.7" y="153.9" width="6.5" height="6.5" fill="#71ff13"/>
<rect x="934.7" y="153.9" width="6.5" height="6.5" fill="#80ff10"/>
<rect x="940.7" y="153.9" width="6.5" height="6.5" fill="#91ff0e"/>
<rect x="946.7" y="153.9" width="6.5" height="6.5" fill="#a2ff0b"/>
<rect x="952.7" y="153.9" width="6.5" height="6.5" fill="#b5ff09"/>
<rect x="958.7" y="153.9" width="6.5" height="6.5" fill="#c8ff07"/>
<rect x="964.7" y="153.9" width="6.5" height="6.5" fill="#ddff05"/>
<rect x="970.7" y="153.9" width="6.5" height="6.5" fill="#f3ff03"/>
<rect x="976.7" y="153.9" width="6.5" height="6.5" fill="#fff401"/>
<rect x="982.7" y="153.9" width="6.5" height="6.5" fill="#ffe000"/>
<rect x="988.7" y="153.9" width="6.5" height="6.5" fill="#ffcd00"/>
<rect x="994.7" y="153.9" width="6.5" height="6.5" fill="#ffbd00"/>
<rect x="1000.7" y="153.9" width="6.5" height="6.5" fill="#ffae00"/>
<rect x="1006.7" y="153.9" width="6.5" height="6.5" fill="#ffa100"/>
<rect x="736.7" y="159.9" width="6.5" height="6.5" fill="#00ff59"/>
<rect x="742.7" y="159.9" width="6.5" height="6.5" fill="#00ff58"/>
<rect x="748.7" y="159.9" width="6.5" height="6.5" fill="#00ff56"/>
<rect x="754.7" y="159.9" width="6.5" height="6.5" fill="#00ff55"/>
<rect x="760.7" y="159.9" width="6.5" height="6.5" fill="#00ff53"/>
<rect x="766.7" y="159.9" width="6.5" height="6.5" fill="#00ff51"/>
<rect x="772.7" y="159.9" width="6.5" height="6.5" fill="#00ff50"/>
<rect x="778.7" y="159.9" width="6.5" height="6.5" fill="#00ff4e"/>
<rect x="784.7" y="159.9" width="6.5" height="6.5" fill="#00ff4c"/>
<rect x="790.7" y="159.9" width="6.5" height="6.5" fill="#00ff4a"/>
<rect x="796.7" y="159.9" width="6.5" height="6.5" fill="#00ff49"/>
<rect x="802.7" y="159.9" width="6.5" height="6.5" fill="#00ff47"/>
<rect x="808.7" y="159.9" width="6.5" height="6.5" fill="#00ff45"/>
<rect x="814.7" y="159.9" width="6.5" height="6.5" fill="#00ff43"/>
<rect x="820.7" y="159.9" width="6.5" height="6.5" fill="#00ff41"/>
<rect x="826.7" y="159.9" width="6.5" height="6.5" fill="#00ff3f"/>
<rect x="832.7" y="159.9" width="6.5" height="6.5" fill="#00ff3d"/>
<rect x="838.7" y="159.9" width="6.5" height="6.5" fill="#00ff3b"/>
<rect x="844.7" y="159.9" width="6.5" height="6.5" fill="#00ff39"/>
<rect x="850.7" y="159.9" width="6.5" height="6.5" fill="#00ff37"/>
<rect x="856.7" y="159.9" width="6.5" height="6.5" fill="#00ff35"/>
<rect x="862.7" y="159.9" width="6.5" height="6.5" fill="#02ff33"/>
<rect x="868.7" y="159.9" width="6.5" height="6.5" fill="#08ff31"/>
<rect x="874.7" y="159.9" width="6.5" height="6.5" fill="#0fff2e"/>
<rect x="880.7" y="159.9" width="6.5" height="6.5" fill="#17ff2c"/>
<rect x="886.7" y="159.9" width="6.5" height="6.5" fill="#21ff2a"/>
<rect x="892.7" y="159.9" width="6.5" height="6.5" fill="#2bff27"/>
<rect x="898.7" y="159.9" width="6.5" height="6.5" fill="#36ff25"/>
<rect x="904.7" y="159.9" width="6.5" height="6.5" fill="#42ff22"/>
<rect x="910.7" y="159.9" width="6.5" height="6.5" fill="#4fff20"/>
<rect x="916.7" y="159.9" width="6.5" height="6.5" fill="#5dff1e"/>
<rect x="922.7" y="159.9" width="6.5" height="6.5" fill="#6bff1b"/>
<rect x="928.7" y="159.9" width="6.5" height="6.5" fill="#7bff18"/>
<rect x="934.7" y="159.9" width="6.5" height="6.5" fill="#8cff16"/>
<rect x="940.7" y="159.9" width="6.5" height="6.5" fill="#9eff13"/>
<rect x="946.7" y="159.9" width="6.5" height="6.5" fill="#b1ff11"/>
<rect x="952.7" y="159.9" width="6.5" height="6.5" fill="#c5ff0e"/>
<rect x="958.7" y="159.9" width="6.5" height="6.5" fill="#daff0c"/>
<rect x="964.7" y="159.9" width="6.5" height="6.5" fill="#f1ff09"/>
<rect x="970.7" y="159.9" width="6.5" height="6.5" fill="#fff606"/>
<rect x="976.7" y="159.9" width="6.5" height="6.5" fill="#ffe004"/>
<rect x="982.7" y="159.9" width="6.5" height="6.5" fill="#ffcd02"/>
<rect x="988.7" y="159.9" width="6.5" height="6.5" fill="#ffbc00"/>
<rect x="994.7" y="159.9" width="6.5" height="6.5" fill="#ffad00"/>
<rect x="1000.7" y="159.9" width="6.5" height="6.5" fill="#ffa000"/>
<rect x="1006.7" y="159.9" width="6.5" height="6.5" fill="#ff9400"/>
<rect x="1012.7" y="159.9" width="6.5" height="6.5" fill="#ff8800"/>
<rect x="736.7" y="165.9" width="6.5" height="6.5" fill="#00ff61"/>
<rect x="742.7" y="165.9" width="6.5" height="6.5" fill="#00ff60"/>
<rect x="748.7" y="165.9" width="6.5" height="6.5" fill="#00ff5e"/>
<rect x="754.7" y="165.9" width="6.5" height="6.5" fill="#00ff5d"/>
<rect x="760.7" y="165.9" width="6.5" height="6.5" fill="#00ff5b"/>
<rect x="766.7" y="165.9" width="6.5" height="6.5" fill="#00ff5a"/>
<rect x="772.7" y="165.9" width="6.5" height="6.5" fill="#00ff58"/>
<rect x="778.7" y="165.9" width="6.5" height="6.5" fill="#00ff56"/>
<rect x="784.7" y="165.9" width="6.5" height="6.5" fill="#00ff55"/>
<rect x="790.7" y="165.9" width="6.5" height="6.5" fill="#00ff53"/>
<rect x="796.7" y="165.9" width="6.5" height="6.5" fill="#00ff51"/>
<rect x="802.7" y="165.9" width="6.5" height="6.5" fill="#00ff4f"/>
<rect x="808.7" y="165.9" width="6.5" height="6.5" fill="#00ff4d"/>
<rect x="814.7" y="165.9" width="6.5" height="6.5" fill="#00ff4b"/>
<rect x="820.7" y="165.9" width="6.5" height="6.5" fill="#00ff49"/>
<rect x="826.7" y="165.9" width="6.5" height="6.5" fill="#00ff47"/>
<rect x="832.7" y="165.9" width="6.5" height="6.5" fill="#00ff45"/>
<rect x="838.7" y="165.9" width="6.5" height="6.5" fill="#00ff43"/>
<rect x="844.7" y="165.9" width="6.5" height="6.5" fill="#00ff41"/>
<rect x="850.7" y="165.9" width="6.5" height="6.5" fill="#00ff3f"/>
<rect x="856.7" y="165.9" width="6.5" height="6.5" fill="#00ff3d"/>
<rect x="862.7" y="165.9" width="6.5" height="6.5" fill="#04ff3b"/>
<rect x="868.7" y="165.9" width="6.5" height="6.5" fill="#0aff38"/>
<rect x="874.7" y="165.9" width="6.5" height="6.5" fill="#12ff36"/>
<rect x="880.7" y="165.9" width="6.5" height="6.5" fill="#1bff34"/>
<rect x="886.7" y="165.9" width="6.5" height="6.5" fill="#25ff31"/>
<rect x="892.7" y="165.9" width="6.5" height="6.5" fill="#30ff2f"/>
<rect x="898.7" y="165.9" width="6.5" height="6.5" fill="#3cff2c"/>
<rect x="904.7" y="165.9" width="6.5" height="6.5" fill="#49ff2a"/>
<rect x="910.7" y="165.9" width="6.5" height="6.5" fill="#57ff27"/>
<rect x="916.7" y="165.9" width="6.5" height="6.5" fill="#66ff25"/>
<rect x="922.7" y="165.9" width="6.5" height="6.5" fill="#76ff22"/>
<rect x="928.7" y="165.9" width="6.5" height="6.5" fill="#87ff1f"/>
<rect x="934.7" y="165.9" width="6.5" height="6.5" fill="#99ff1d"/>
<rect x="940.7" y="165.9" width="6.5" height="6.5" fill="#acff1a"/>
<rect x="946.7" y="165.9" width="6.5" height="6.5" fill="#c1ff17"/>
<rect x="952.7" y="165.9" width="6.5" height="6.5" fill="#d7ff14"/>
<rect x="958.7" y="165.9" width="6.5" height="6.5" fill="#eeff11"/>
<rect x="964.7" y="165.9" width="6.5" height="6.5" fill="#fff80e"/>
<rect x="970.7" y="165.9" width="6.5" height="6.5" fill="#ffe10a"/>
<rect x="976.7" y="165.9" width="6.5" height="6.5" fill="#ffcd07"/>
<rect x="982.7" y="165.9" width="6.5" height="6.5" fill="#ffbc05"/>
<rect x="988.7" y="165.9" width="6.5" height="6.5" fill="#ffac03"/>
<rect x="994.7" y="165.9" width="6.5" height="6.5" fill="#ff9e01"/>
<rect x="1000.7" y="165.9" width="6.5" height="6.5" fill="#ff9200"/>
<rect x="1006.7" y="165.9" width="6.5" height="6.5" fill="#ff8700"/>
<rect x="1012.7" y="165.9" width="6.5" height="6.5" fill="#ff7c00"/>
<rect x="1018.7" y="165.9" width="6.5" height="6.5" fill="#ff7300"/>
<rect x="736.7" y="171.9" width="6.5" height="6.5" fill="#00ff6a"/>
<rect x="742.7" y="171.9" width="6.5" height="6.5" fill="#00ff69"/>
<rect x="748.7" y="171.9" width="6.5" height="6.5" fill="#00ff67"/>
<rect x="754.7" y="171.9" width="6.5" height="6.5" fill="#00ff66"/>
<rect x="760.7" y="171.9" width="6.5" height="6.5" fill="#00ff64"/>
<rect x="766.7" y="171.9" width="6.5" height="6.5" fill="#00ff63"/>
<rect x="772.7" y="171.9" width="6.5" height="6.5" fill="#00ff61"/>
<rect x="778.7" y="171.9" width="6.5" height="6.5" fill="#00ff5f"/>
<rect x="784.7" y="171.9" width="6.5" height="6.5" fill="#00ff5e"/>
<rect x="790.7" y="171.9" width="6.5" height="6.5" fill="#00ff5c"/>
<rect x="796.7" y="171.9" width="6.5" height="6.5" fill="#00ff5a"/>
<rect x="802.7" y="171.9" width="6.5" height="6.5" fill="#00ff58"/>
<rect x="808.7" y="171.9" width="6.5" height="6.5" fill="#00ff56"/>
<rect x="814.7" y="171.9" width="6.5" height="6.5" fill="#00ff54"/>
<rect x="820.7" y="171.9" width="6.5" height="6.5" fill="#00ff53"/>
<rect x="826.7" y="171.9" width="6.5" height="6.5" fill="#00ff51"/>
<rect x="832.7" y="171.9" width="6.5" height="6.5" fill="#00ff4f"/>
<rect x="838.7" y="171.9" width="6.5" height="6.5" fill="#00ff4c"/>
<rect x="844.7" y="171.9" width="6.5" height="6.5" fill="#00ff4a"/>
<rect x="850.7" y="171.9" width="6.5" height="6.5" fill="#00ff48"/>
<rect x="856.7" y="171.9" width="6.5" height="6.5" fill="#01ff46"/>
<rect x="862.7" y="171.9" width="6.5" height="6.5" fill="#06ff44"/>
<rect x="868.7" y="171.9" width="6.5" height="6.5" fill="#0dff41"/>
<rect x="874.7" y="171.9" width="6.5" height="6.5" fill="#15ff3f"/>
<rect x="880.7" y="171.9" width="6.5" height="6.5" fill="#1fff3d"/>
<rect x="886.7" y="171.9" width="6.5" height="6.5" fill="#2aff3a"/>
<rect x="892.7" y="171.9" width="6.5" height="6.5" fill="#36ff38"/>
<rect x="898.7" y="171.9" width="6.5" height="6.5" fill="#43ff35"/>
<rect x="904.7" y="171.9" width="6.5" height="6.5" fill="#51ff32"/>
<rect x="910.7" y="171.9" width="6.5" height="6.5" fill="#60ff30"/>
<rect x="916.7" y="171.9" width="6.5" height="6.5" fill="#70ff2d"/>
<rect x="922.7" y="171.9" width="6.5" height="6.5" fill="#81ff2a"/>
<rect x="928.7" y="171.9" width="6.5" height="6.5" fill="#94ff27"/>
<rect x="934.7" y="171.9" width="6.5" height="6.5" fill="#a8ff24"/>
<rect x="940.7" y="171.9" width="6.5" height="6.5" fill="#bdff21"/>
<rect x="946.7" y="171.9" width="6.5" height="6.5" fill="#d3ff1e"/>
<rect x="952.7" y="171.9" width="6.5" height="6.5" fill="#ebff1b"/>
<rect x="958.7" y="171.9" width="6.5" height="6.5" fill="#fffa18"/>
<rect x="964.7" y="171.9" width="6.5" height="6.5" fill="#ffe213"/>
<rect x="970.7" y="171.9" width="6.5" height="6.5" fill="#ffce0f"/>
<rect x="976.7" y="171.9" width="6.5" height="6.5" fill="#ffbb0b"/>
<rect x="982.7" y="171.9" width="6.5" height="6.5" fill="#ffab08"/>
<rect x="988.7" y="171.9" width="6.5" height="6.5" fill="#ff9d05"/>
<rect x="994.7" y="171.9" width="6.5" height="6.5" fill="#ff9003"/>
<rect x="1000.7" y="171.9" width="6.5" height="6.5" fill="#ff8502"/>
<rect x="1006.7" y="171.9" width="6.5" height="6.5" fill="#ff7a00"/>
<rect x="1012.7" y="171.9" width="6.5" height="6.5" fill="#ff7100"/>
<rect x="1018.7" y="171.9" width="6.5" height="6.5" fill="#ff6800"/>
<rect x="1024.7" y="171.9" width="6.5" height="6.5" fill="#ff6000"/>
<rect x="1030.7" y="171.9" width="6.5" height="6.5" fill="#ff5900"/>
<rect x="736.7" y="177.9" width="6.5" height="6.5" fill="#00ff74"/>
<rect x="742.7" y="177.9" width="6.5" height="6.5" fill="#00ff73"/>
<rect x="748.7" y="177.9" width="6.5" height="6.5" fill="#00ff71"/>
<rect x="754.7" y="177.9" width="6.5" height="6.5" fill="#00ff70"/>
<rect x="760.7" y="177.9" width="6.5" height="6.5" fill="#00ff6e"/>
<rect x="766.7" y="177.9" width="6.5" height="6.5" fill="#00ff6d"/>
<rect x="772.7" y="177.9" width="6.5" height="6.5" fill="#00ff6b"/>
<rect x="778.7" y="177.9" width="6.5" height="6.5" fill="#00ff69"/>
<rect x="784.7" y="177.9" width="6.5" height="6.5" fill="#00ff68"/>
<rect x="790.7" y="177.9" width="6.5" height="6.5" fill="#00ff66"/>
<rect x="796.7" y="177.9" width="6.5" height="6.5" fill="#00ff64"/>
<rect x="802.7" y="177.9" width="6.5" height="6.5" fill="#00ff62"/>
<rect x="808.7" y="177.9" width="6.5" height="6.5" fill="#00ff60"/>
<rect x="814.7" y="177.9" width="6.5" height="6.5" fill="#00ff5f"/>
<rect x="820.7" y="177.9" width="6.5" height="6.5" fill="#00ff5d"/>
<rect x="826.7" y="177.9" width="6.5" height="6.5" fill="#00ff5b"/>
<rect x="832.7" y="177.9" width="6.5" height="6.5" fill="#00ff59"/>
<rect x="838.7" y="177.9" width="6.5" height="6.5" fill="#00ff57"/>
<rect x="844.7" y="177.9" width="6.5" height="6.5" fill="#00ff54"/>
<rect x="850.7" y="177.9" width="6.5" height="6.5" fill="#00ff52"/>
<rect x="856.7" y="177.9" width="6.5" height="6.5" fill="#02ff50"/>
<rect x="862.7" y="177.9" width="6.5" height="6.5" fill="#08ff4e"/>
<rect x="868.7" y="177.9" width="6.5" height="6.5" fill="#10ff4b"/>
<rect x="874.7" y="177.9" width="6.5" height="6.5" fill="#19ff49"/>
<rect x="880.7" y="177.9" width="6.5" height="6.5" fill="#24ff47"/>
<rect x="886.7" y="177.9" width="6.5" height="6.5" fill="#2fff44"/>
<rect x="892.7" y="177.9" width="6.5" height="6.5" fill="#3cff42"/>
<rect x="898.7" y="177.9" width="6.5" height="6.5" fill="#4aff3f"/>
<rect x="904.7" y="177.9" width="6.5" height="6.5" fill="#5aff3c"/>
<rect x="910.7" y="177.9" width="6.5" height="6.5" fill="#6aff39"/>
<rect x="916.7" y="177.9" width="6.5" height="6.5" fill="#7cff37"/>
<rect x="922.7" y="177.9" width="6.5" height="6.5" fill="#8eff34"/>
<rect x="928.7" y="177.9" width="6.5" height="6.5" fill="#a3ff31"/>
<rect x="934.7" y="177.9" width="6.5" height="6.5" fill="#b8ff2e"/>
<rect x="940.7" y="177.9" width="6.5" height="6.5" fill="#cfff2b"/>
<rect x="946.7" y="177.9" width="6.5" height="6.5" fill="#e8ff27"/>
<rect x="952.7" y="177.9" width="6.5" height="6.5" fill="#fffc24"/>
<rect x="958.7" y="177.9" width="6.5" height="6.5" fill="#ffe31d"/>
<rect x="964.7" y="177.9" width="6.5" height="6.5" fill="#ffce18"/>
<rect x="970.7" y="177.9" width="6.5" height="6.5" fill="#ffbb13"/>
<rect x="976.7" y="177.9" width="6.5" height="6.5" fill="#ffaa0f"/>
<rect x="982.7" y="177.9" width="6.5" height="6.5" fill="#ff9b0c"/>
<rect x="988.7" y="177.9" width="6.5" height="6.5" fill="#ff8e09"/>
<rect x="994.7" y="177.9" width="6.5" height="6.5" fill="#ff8206"/>
<rect x="1000.7" y="177.9" width="6.5" height="6.5" fill="#ff7804"/>
<rect x="1006.7" y="177.9" width="6.5" height="6.5" fill="#ff6e02"/>
<rect x="1012.7" y="177.9" width="6.5" height="6.5" fill="#ff6501"/>
<rect x="1018.7" y="177.9" width="6.5" height="6.5" fill="#ff5e00"/>
<rect x="1024.7" y="177.9" width="6.5" height="6.5" fill="#ff5600"/>
<rect x="1030.7" y="177.9" width="6.5" height="6.5" fill="#ff5000"/>
<rect x="1036.7" y="177.9" width="6.5" height="6.5" fill="#ff4a00"/>
<rect x="736.7" y="183.9" width="6.5" height="6.5" fill="#00ff7f"/>
<rect x="742.7" y="183.9" width="6.5" height="6.5" fill="#00ff7d"/>
<rect x="748.7" y="183.9" width="6.5" height="6.5" fill="#00ff7c"/>
<rect x="754.7" y="183.9" width="6.5" height="6.5" fill="#00ff7b"/>
<rect x="760.7" y="183.9" width="6.5" height="6.5" fill="#00ff79"/>
<rect x="766.7" y="183.9" width="6.5" height="6.5" fill="#00ff78"/>
<rect x="772.7" y="183.9" width="6.5" height="6.5" fill="#00ff76"/>
<rect x="778.7" y="183.9" width="6.5" height="6.5" fill="#00ff74"/>
<rect x="784.7" y="183.9" width="6.5" height="6.5" fill="#00ff73"/>
<rect x="790.7" y="183.9" width="6.5" height="6.5" fill="#00ff71"/>
<rect x="796.7" y="183.9" width="6.5" height="6.5" fill="#00ff6f"/>
<rect x="802.7" y="183.9" width="6.5" height="6.5" fill="#00ff6e"/>
<rect x="808.7" y="183.9" width="6.5" height="6.5" fill="#00ff6c"/>
<rect x="814.7" y="183.9" width="6.5" height="6.5" fill="#00ff6a"/>
<rect x="820.7" y="183.9" width="6.5" height="6.5" fill="#00ff68"/>
<rect x="826.7" y="183.9" width="6.5" height="6.5" fill="#00ff66"/>
<rect x="832.7" y="183.9" width="6.5" height="6.5" fill="#00ff64"/>
<rect x="838.7" y="183.9" width="6.5" height="6.5" fill="#00ff62"/>
<rect x="844.7" y="183.9" width="6.5" height="6.5" fill="#00ff60"/>
<rect x="850.7" y="183.9" width="6.5" height="6.5" fill="#00ff5e"/>
<rect x="856.7" y="183.9" width="6.5" height="6.5" fill="#03ff5b"/>
<rect x="862.7" y="183.9" width="6.5" height="6.5" fill="#0aff59"/>
<rect x="868.7" y="183.9" width="6.5" height="6.5" fill="#13ff57"/>
<rect x="874.7" y="183.9" width="6.5" height="6.5" fill="#1dff54"/>
<rect x="880.7" y="183.9" width="6.5" height="6.5" fill="#29ff52"/>
<rect x="886.7" y="183.9" width="6.5" height="6.5" fill="#36ff4f"/>
<rect x="892.7" y="183.9" width="6.5" height="6.5" fill="#44ff4d"/>
<rect x="898.7" y="183.9" width="6.5" height="6.5" fill="#53ff4a"/>
<rect x="904.7" y="183.9" width="6.5" height="6.5" fill="#64ff47"/>
<rect x="910.7" y="183.9" width="6.5" height="6.5" fill="#75ff45"/>
<rect x="916.7" y="183.9" width="6.5" height="6.5" fill="#89ff42"/>
<rect x="922.7" y="183.9" width="6.5" height="6.5" fill="#9dff3f"/>
<rect x="928.7" y="183.9" width="6.5" height="6.5" fill="#b4ff3c"/>
<rect x="934.7" y="183.9" width="6.5" height="6.5" fill="#cbff38"/>
<rect x="940.7" y="183.9" width="6.5" height="6.5" fill="#e5ff35"/>
<rect x="946.7" y="183.9" width="6.5" height="6.5" fill="#fffe32"/>
<rect x="952.7" y="183.9" width="6.5" height="6.5" fill="#ffe42a"/>
<rect x="958.7" y="183.9" width="6.5" height="6.5" fill="#ffce23"/>
<rect x="964.7" y="183.9" width="6.5" height="6.5" fill="#ffba1d"/>
<rect x="970.7" y="183.9" width="6.5" height="6.5" fill="#ffa918"/>
<rect x="976.7" y="183.9" width="6.5" height="6.5" fill="#ff9a13"/>
<rect x="982.7" y="183.9" width="6.5" height="6.5" fill="#ff8c0f"/>
<rect x="988.7" y="183.9" width="6.5" height="6.5" fill="#ff800c"/>
<rect x="994.7" y="183.9" width="6.5" height="6.5" fill="#ff7509"/>
<rect x="1000.7" y="183.9" width="6.5" height="6.5" fill="#ff6c07"/>
<rect x="1006.7" y="183.9" width="6.5" height="6.5" fill="#ff6305"/>
<rect x="1012.7" y="183.9" width="6.5" height="6.5" fill="#ff5b03"/>
<rect x="1018.7" y="183.9" width="6.5" height="6.5" fill="#ff5402"/>
<rect x="1024.7" y="183.9" width="6.5" height="6.5" fill="#ff4d00"/>
<rect x="1030.7" y="183.9" width="6.5" height="6.5" fill="#ff4700"/>
<rect x="1036.7" y="183.9" width="6.5" height="6.5" fill="#ff4100"/>
<rect x="1042.7" y="183.9" width="6.5" height="6.5" fill="#ff3c00"/>
<rect x="1048.7" y="183.9" width="6.5" height="6.5" fill="#ff3700"/>
<rect x="742.7" y="189.9" width="6.5" height="6.5" fill="#00ff89"/>
<rect x="748.7" y="189.9" width="6.5" height="6.5" fill="#00ff88"/>
<rect x="754.7" y="189.9" width="6.5" height="6.5" fill="#00ff86"/>
<rect x="760.7" y="189.9" width="6.5" height="6.5" fill="#00ff85"/>
<rect x="766.7" y="189.9" width="6.5" height="6.5" fill="#00ff84"/>
<rect x="772.7" y="189.9" width="6.5" height="6.5" fill="#00ff82"/>
<rect x="778.7" y="189.9" width="6.5" height="6.5" fill="#00ff81"/>
<rect x="784.7" y="189.9" width="6.5" height="6.5" fill="#00ff7f"/>
<rect x="790.7" y="189.9" width="6.5" height="6.5" fill="#00ff7d"/>
<rect x="796.7" y="189.9" width="6.5" height="6.5" fill="#00ff7c"/>
<rect x="802.7" y="189.9" width="6.5" height="6.5" fill="#00ff7a"/>
<rect x="808.7" y="189.9" width="6.5" height="6.5" fill="#00ff78"/>
<rect x="814.7" y="189.9" width="6.5" height="6.5" fill="#00ff76"/>
<rect x="820.7" y="189.9" width="6.5" height="6.5" fill="#00ff75"/>
<rect x="826.7" y="189.9" width="6.5" height="6.5" fill="#00ff73"/>
<rect x="832.7" y="189.9" width="6.5" height="6.5" fill="#00ff71"/>
<rect x="838.7" y="189.9" width="6.5" height="6.5" fill="#00ff6f"/>
<rect x="844.7" y="189.9" width="6.5" height="6.5" fill="#00ff6d"/>
<rect x="850.7" y="189.9" width="6.5" height="6.5" fill="#00ff6a"/>
<rect x="856.7" y="189.9" width="6.5" height="6.5" fill="#05ff68"/>
<rect x="862.7" y="189.9" width="6.5" height="6.5" fill="#0dff66"/>
<rect x="868.7" y="189.9" width="6.5" height="6.5" fill="#17ff64"/>
<rect x="874.7" y="189.9" width="6.5" height="6.5" fill="#22ff61"/>
<rect x="880.7" y="189.9" width="6.5" height="6.5" fill="#2fff5f"/>
<rect x="886.7" y="189.9" width="6.5" height="6.5" fill="#3dff5c"/>
<rect x="892.7" y="189.9" width="6.5" height="6.5" fill="#4cff5a"/>
<rect x="898.7" y="189.9" width="6.5" height="6.5" fill="#5dff57"/>
<rect x="904.7" y="189.9" width="6.5" height="6.5" fill="#6fff54"/>
<rect x="910.7" y="189.9" width="6.5" height="6.5" fill="#83ff52"/>
<rect x="916.7" y="189.9" width="6.5" height="6.5" fill="#98ff4f"/>
<rect x="922.7" y="189.9" width="6.5" height="6.5" fill="#afff4c"/>
<rect x="928.7" y="189.9" width="6.5" height="6.5" fill="#c7ff48"/>
<rect x="934.7" y="189.9" width="6.5" height="6.5" fill="#e1ff45"/>
<rect x="940.7" y="189.9" width="6.5" height="6.5" fill="#fdff42"/>
<rect x="946.7" y="189.9" width="6.5" height="6.5" fill="#ffe538"/>
<rect x="952.7" y="189.9" width="6.5" height="6.5" fill="#ffce30"/>
<rect x="958.7" y="189.9" width="6.5" height="6.5" fill="#ffb928"/>
<rect x="964.7" y="189.9" width="6.5" height="6.5" fill="#ffa822"/>
<rect x="970.7" y="189.9" width="6.5" height="6.5" fill="#ff981c"/>
<rect x="976.7" y="189.9" width="6.5" height="6.5" fill="#ff8a18"/>
<rect x="982.7" y="189.9" width="6.5" height="6.5" fill="#ff7e13"/>
<rect x="988.7" y="189.9" width="6.5" height="6.5" fill="#ff7310"/>
<rect x="994.7" y="189.9" width="6.5" height="6.5" fill="#ff690d"/>
<rect x="1000.7" y="189.9" width="6.5" height="6.5" fill="#ff600a"/>
<rect x="1006.7" y="189.9" width="6.5" height="6.5" fill="#ff5808"/>
<rect x="1012.7" y="189.9" width="6.5" height="6.5" fill="#ff5105"/>
<rect x="1018.7" y="189.9" width="6.5" height="6.5" fill="#ff4a04"/>
<rect x="1024.7" y="189.9" width="6.5" height="6.5" fill="#ff4402"/>
<rect x="1030.7" y="189.9" width="6.5" height="6.5" fill="#ff3e01"/>
<rect x="1036.7" y="189.9" width="6.5" height="6.5" fill="#ff3900"/>
<rect x="1042.7" y="189.9" width="6.5" height="6.5" fill="#ff3500"/>
<rect x="1048.7" y="189.9" width="6.5" height="6.5" fill="#ff3000"/>
<rect x="1054.7" y="189.9" width="6.5" height="6.5" fill="#ff2c00"/>
<rect x="742.7" y="195.9" width="6.5" height="6.5" fill="#00ff96"/>
<rect x="748.7" y="195.9" width="6.5" height="6.5" fill="#00ff95"/>
<rect x="754.7" y="195.9" width="6.5" height="6.5" fill="#00ff94"/>
<rect x="760.7" y="195.9" width="6.5" height="6.5" fill="#00ff92"/>
<rect x="766.7" y="195.9" width="6.5" height="6.5" fill="#00ff91"/>
<rect x="772.7" y="195.9" width="6.5" height="6.5" fill="#00ff8f"/>
<rect x="778.7" y="195.9" width="6.5" height="6.5" fill="#00ff8e"/>
<rect x="784.7" y="195.9" width="6.5" height="6.5" fill="#00ff8d"/>
<rect x="790.7" y="195.9" width="6.5" height="6.5" fill="#00ff8b"/>
<rect x="796.7" y="195.9" width="6.5" height="6.5" fill="#00ff89"/>
<rect x="802.7" y="195.9" width="6.5" height="6.5" fill="#00ff88"/>
<rect x="808.7" y="195.9" width="6.5" height="6.5" fill="#00ff86"/>
<rect x="814.7" y="195.9" width="6.5" height="6.5" fill="#00ff84"/>
<rect x="820.7" y="195.9" width="6.5" height="6.5" fill="#00ff83"/>
<rect x="826.7" y="195.9" width="6.5" height="6.5" fill="#00ff81"/>
<rect x="832.7" y="195.9" width="6.5" height="6.5" fill="#00ff7f"/>
<rect x="838.7" y="195.9" width="6.5" height="6.5" fill="#00ff7d"/>
<rect x="844.7" y="195.9" width="6.5" height="6.5" fill="#00ff7b"/>
<rect x="850.7" y="195.9" width="6.5" height="6.5" fill="#01ff79"/>
<rect x="856.7" y="195.9" width="6.5" height="6.5" fill="#07ff77"/>
<rect x="862.7" y="195.9" width="6.5" height="6.5" fill="#11ff75"/>
<rect x="868.7" y="195.9" width="6.5" height="6.5" fill="#1bff73"/>
<rect x="874.7" y="195.9" width="6.5" height="6.5" fill="#28ff70"/>
<rect x="880.7" y="195.9" width="6.5" height="6.5" fill="#36ff6e"/>
<rect x="886.7" y="195.9" width="6.5" height="6.5" fill="#45ff6b"/>
<rect x="892.7" y="195.9" width="6.5" height="6.5" fill="#56ff69"/>
<rect x="898.7" y="195.9" width="6.5" height="6.5" fill="#68ff66"/>
<rect x="904.7" y="195.9" width="6.5" height="6.5" fill="#7cff63"/>
<rect x="910.7" y="195.9" width="6.5" height="6.5" fill="#92ff61"/>
<rect x="916.7" y="195.9" width="6.5" height="6.5" fill="#a9ff5e"/>
<rect x="922.7" y="195.9" width="6.5" height="6.5" fill="#c2ff5b"/>
<rect x="928.7" y="195.9" width="6.5" height="6.5" fill="#ddff58"/>
<rect x="934.7" y="195.9" width="6.5" height="6.5" fill="#fbff54"/>
<rect x="940.7" y="195.9" width="6.5" height="6.5" fill="#ffe749"/>
<rect x="946.7" y="195.9" width="6.5" height="6.5" fill="#ffce3f"/>
<rect x="952.7" y="195.9" width="6.5" height="6.5" fill="#ffb935"/>
<rect x="958.7" y="195.9" width="6.5" height="6.5" fill="#ffa62e"/>
<rect x="964.7" y="195.9" width="6.5" height="6.5" fill="#ff9627"/>
<rect x="970.7" y="195.9" width="6.5" height="6.5" fill="#ff8821"/>
<rect x="976.7" y="195.9" width="6.5" height="6.5" fill="#ff7b1c"/>
<rect x="982.7" y="195.9" width="6.5" height="6.5" fill="#ff7018"/>
<rect x="988.7" y="195.9" width="6.5" height="6.5" fill="#ff6614"/>
<rect x="994.7" y="195.9" width="6.5" height="6.5" fill="#ff5d10"/>
<rect x="1000.7" y="195.9" width="6.5" height="6.5" fill="#ff550d"/>
<rect x="1006.7" y="195.9" width="6.5" height="6.5" fill="#ff4e0a"/>
<rect x="1012.7" y="195.9" width="6.5" height="6.5" fill="#ff4708"/>
<rect x="1018.7" y="195.9" width="6.5" height="6.5" fill="#ff4106"/>
<rect x="1024.7" y="195.9" width="6.5" height="6.5" fill="#ff3b04"/>
<rect x="1030.7" y="195.9" width="6.5" height="6.5" fill="#ff3603"/>
<rect x="1036.7" y="195.9" width="6.5" height="6.5" fill="#ff3202"/>
<rect x="1042.7" y="195.9" width="6.5" height="6.5" fill="#ff2d01"/>
<rect x="1048.7" y="195.9" width="6.5" height="6.5" fill="#ff2900"/>
<rect x="1054.7" y="195.9" width="6.5" height="6.5" fill="#ff2600"/>
<rect x="1060.7" y="195.9" width="6.5" height="6.5" fill="#ff2200"/>
<rect x="1066.7" y="195.9" width="6.5" height="6.5" fill="#ff1f00"/>
<rect x="742.7" y="201.9" width="6.5" height="6.5" fill="#00ffa4"/>
<rect x="748.7" y="201.9" width="6.5" height="6.5" fill="#00ffa3"/>
<rect x="754.7" y="201.9" width="6.5" height="6.5" fill="#00ffa2"/>
<rect x="760.7" y="201.9" width="6.5" height="6.5" fill="#00ffa1"/>
<rect x="766.7" y="201.9" width="6.5" height="6.5" fill="#00ffa0"/>
<rect x="772.7" y="201.9" width="6.5" height="6.5" fill="#00ff9e"/>
<rect x="778.7" y="201.9" width="6.5" height="6.5" fill="#00ff9d"/>
<rect x="784.7" y="201.9" width="6.5" height="6.5" fill="#00ff9c"/>
<rect x="790.7" y="201.9" width="6.5" height="6.5" fill="#00ff9a"/>
<rect x="796.7" y="201.9" width="6.5" height="6.5" fill="#00ff99"/>
<rect x="802.7" y="201.9" width="6.5" height="6.5" fill="#00ff97"/>
<rect x="808.7" y="201.9" width="6.5" height="6.5" fill="#00ff96"/>
<rect x="814.7" y="201.9" width="6.5" height="6.5" fill="#00ff94"/>
<rect x="820.7" y="201.9" width="6.5" height="6.5" fill="#00ff93"/>
<rect x="826.7" y="201.9" width="6.5" height="6.5" fill="#00ff91"/>
<rect x="832.7" y="201.9" width="6.5" height="6.5" fill="#00ff8f"/>
<rect x="838.7" y="201.9" width="6.5" height="6.5" fill="#00ff8d"/>
<rect x="844.7" y="201.9" width="6.5" height="6.5" fill="#00ff8b"/>
<rect x="850.7" y="201.9" width="6.5" height="6.5" fill="#02ff8a"/>
<rect x="856.7" y="201.9" width="6.5" height="6.5" fill="#0aff88"/>
<rect x="862.7" y="201.9" width="6.5" height="6.5" fill="#14ff86"/>
<rect x="868.7" y="201.9" width="6.5" height="6.5" fill="#20ff83"/>
<rect x="874.7" y="201.9" width="6.5" height="6.5" fill="#2eff81"/>
<rect x="880.7" y="201.9" width="6.5" height="6.5" fill="#3dff7f"/>
<rect x="886.7" y="201.9" width="6.5" height="6.5" fill="#4eff7d"/>
<rect x="892.7" y="201.9" width="6.5" height="6.5" fill="#61ff7a"/>
<rect x="898.7" y="201.9" width="6.5" height="6.5" fill="#75ff78"/>
<rect x="904.7" y="201.9" width="6.5" height="6.5" fill="#8bff75"/>
<rect x="910.7" y="201.9" width="6.5" height="6.5" fill="#a3ff72"/>
<rect x="916.7" y="201.9" width="6.5" height="6.5" fill="#bdff70"/>
<rect x="922.7" y="201.9" width="6.5" height="6.5" fill="#d9ff6d"/>
<rect x="928.7" y="201.9" width="6.5" height="6.5" fill="#f8ff6a"/>
<rect x="934.7" y="201.9" width="6.5" height="6.5" fill="#ffe85d"/>
<rect x="940.7" y="201.9" width="6.5" height="6.5" fill="#ffce50"/>
<rect x="946.7" y="201.9" width="6.5" height="6.5" fill="#ffb845"/>
<rect x="952.7" y="201.9" width="6.5" height="6.5" fill="#ffa53b"/>
<rect x="958.7" y="201.9" width="6.5" height="6.5" fill="#ff9433"/>
<rect x="964.7" y="201.9" width="6.5" height="6.5" fill="#ff852c"/>
<rect x="970.7" y="201.9" width="6.5" height="6.5" fill="#ff7926"/>
<rect x="976.7" y="201.9" width="6.5" height="6.5" fill="#ff6d20"/>
<rect x="982.7" y="201.9" width="6.5" height="6.5" fill="#ff631c"/>
<rect x="988.7" y="201.9" width="6.5" height="6.5" fill="#ff5a17"/>
<rect x="994.7" y="201.9" width="6.5" height="6.5" fill="#ff5214"/>
<rect x="1000.7" y="201.9" width="6.5" height="6.5" fill="#ff4a10"/>
<rect x="1006.7" y="201.9" width="6.5" height="6.5" fill="#ff440e"/>
<rect x="1012.7" y="201.9" width="6.5" height="6.5" fill="#ff3e0b"/>
<rect x="1018.7" y="201.9" width="6.5" height="6.5" fill="#ff3809"/>
<rect x="1024.7" y="201.9" width="6.5" height="6.5" fill="#ff3307"/>
<rect x="1030.7" y="201.9" width="6.5" height="6.5" fill="#ff2f05"/>
<rect x="1036.7" y="201.9" width="6.5" height="6.5" fill="#ff2a03"/>
<rect x="1042.7" y="201.9" width="6.5" height="6.5" fill="#ff2602"/>
<rect x="1048.7" y="201.9" width="6.5" height="6.5" fill="#ff2301"/>
<rect x="1054.7" y="201.9" width="6.5" height="6.5" fill="#ff2000"/>
<rect x="1060.7" y="201.9" width="6.5" height="6.5" fill="#ff1d00"/>
<rect x="1066.7" y="201.9" width="6.5" height="6.5" fill="#ff1a00"/>
<rect x="1072.7" y="201.9" width="6.5" height="6.5" fill="#ff1700"/>
<rect x="742.7" y="207.9" width="6.5" height="6.5" fill="#00ffb4"/>
<rect x="748.7" y="207.9" width="6.5" height="6.5" fill="#00ffb3"/>
<rect x="754.7" y="207.9" width="6.5" height="6.5" fill="#00ffb2"/>
<rect x="760.7" y="207.9" width="6.5" height="6.5" fill="#00ffb1"/>
<rect x="766.7" y="207.9" width="6.5" height="6.5" fill="#00ffb0"/>
<rect x="772.7" y="207.9" width="6.5" height="6.5" fill="#00ffaf"/>
<rect x="778.7" y="207.9" width="6.5" height="6.5" fill="#00ffae"/>
<rect x="784.7" y="207.9" width="6.5" height="6.5" fill="#00ffad"/>
<rect x="790.7" y="207.9" width="6.5" height="6.5" fill="#00ffab"/>
<rect x="796.7" y="207.9" width="6.5" height="6.5" fill="#00ffaa"/>
<rect x="802.7" y="207.9" width="6.5" height="6.5" fill="#00ffa9"/>
<rect x="808.7" y="207.9" width="6.5" height="6.5" fill="#00ffa7"/>
<rect x="814.7" y="207.9" width="6.5" height="6.5" fill="#00ffa6"/>
<rect x="820.7" y="207.9" width="6.5" height="6.5" fill="#00ffa4"/>
<rect x="826.7" y="207.9" width="6.5" height="6.5" fill="#00ffa3"/>
<rect x="832.7" y="207.9" width="6.5" height="6.5" fill="#00ffa1"/>
<rect x="838.7" y="207.9" width="6.5" height="6.5" fill="#00ffa0"/>
<rect x="844.7" y="207.9" width="6.5" height="6.5" fill="#00ff9e"/>
<rect x="850.7" y="207.9" width="6.5" height="6.5" fill="#04ff9d"/>
<rect x="856.7" y="207.9" width="6.5" height="6.5" fill="#0eff9b"/>
<rect x="862.7" y="207.9" width="6.5" height="6.5" fill="#19ff99"/>
<rect x="868.7" y="207.9" width="6.5" height="6.5" fill="#26ff97"/>
<rect x="874.7" y="207.9" width="6.5" height="6.5" fill="#36ff95"/>
<rect x="880.7" y="207.9" width="6.5" height="6.5" fill="#46ff93"/>
<rect x="886.7" y="207.9" width="6.5" height="6.5" fill="#59ff91"/>
<rect x="892.7" y="207.9" width="6.5" height="6.5" fill="#6eff8f"/>
<rect x="898.7" y="207.9" width="6.5" height="6.5" fill="#84ff8c"/>
<rect x="904.7" y="207.9" width="6.5" height="6.5" fill="#9dff8a"/>
<rect x="910.7" y="207.9" width="6.5" height="6.5" fill="#b8ff87"/>
<rect x="916.7" y="207.9" width="6.5" height="6.5" fill="#d5ff85"/>
<rect x="922.7" y="207.9" width="6.5" height="6.5" fill="#f4ff82"/>
<rect x="928.7" y="207.9" width="6.5" height="6.5" fill="#ffea74"/>
<rect x="934.7" y="207.9" width="6.5" height="6.5" fill="#ffce64"/>
<rect x="940.7" y="207.9" width="6.5" height="6.5" fill="#ffb757"/>
<rect x="946.7" y="207.9" width="6.5" height="6.5" fill="#ffa34b"/>
<rect x="952.7" y="207.9" width="6.5" height="6.5" fill="#ff9241"/>
<rect x="958.7" y="207.9" width="6.5" height="6.5" fill="#ff8339"/>
<rect x="964.7" y="207.9" width="6.5" height="6.5" fill="#ff7631"/>
<rect x="970.7" y="207.9" width="6.5" height="6.5" fill="#ff6a2b"/>
<rect x="976.7" y="207.9" width="6.5" height="6.5" fill="#ff6025"/>
<rect x="982.7" y="207.9" width="6.5" height="6.5" fill="#ff5720"/>
<rect x="988.7" y="207.9" width="6.5" height="6.5" fill="#ff4e1b"/>
<rect x="994.7" y="207.9" width="6.5" height="6.5" fill="#ff4717"/>
<rect x="1000.7" y="207.9" width="6.5" height="6.5" fill="#ff4014"/>
<rect x="1006.7" y="207.9" width="6.5" height="6.5" fill="#ff3a11"/>
<rect x="1012.7" y="207.9" width="6.5" height="6.5" fill="#ff350e"/>
<rect x="1018.7" y="207.9" width="6.5" height="6.5" fill="#ff300b"/>
<rect x="1024.7" y="207.9" width="6.5" height="6.5" fill="#ff2b09"/>
<rect x="1030.7" y="207.9" width="6.5" height="6.5" fill="#ff2707"/>
<rect x="1036.7" y="207.9" width="6.5" height="6.5" fill="#ff2306"/>
<rect x="1042.7" y="207.9" width="6.5" height="6.5" fill="#ff2004"/>
<rect x="1048.7" y="207.9" width="6.5" height="6.5" fill="#ff1d03"/>
<rect x="1054.7" y="207.9" width="6.5" height="6.5" fill="#ff1a02"/>
<rect x="1060.7" y="207.9" width="6.5" height="6.5" fill="#ff1701"/>
<rect x="1066.7" y="207.9" width="6.5" height="6.5" fill="#ff1500"/>
<rect x="1072.7" y="207.9" width="6.5" height="6.5" fill="#ff1200"/>
<rect x="1078.7" y="207.9" width="6.5" height="6.5" fill="#ff1000"/>
<rect x="748.7" y="213.9" width="6.5" height="6.5" fill="#00ffc5"/>
<rect x="754.7" y="213.9" width="6.5" height="6.5" fill="#00ffc4"/>
<rect x="760.7" y="213.9" width="6.5" height="6.5" fill="#00ffc3"/>
<rect x="766.7" y="213.9" width="6.5" height="6.5" fill="#00ffc2"/>
<rect x="772.7" y="213.9" width="6.5" height="6.5" fill="#00ffc1"/>
<rect x="778.7" y="213.9" width="6.5" height="6.5" fill="#00ffc0"/>
<rect x="784.7" y="213.9" width="6.5" height="6.5" fill="#00ffbf"/>
<rect x="790.7" y="213.9" width="6.5" height="6.5" fill="#00ffbe"/>
<rect x="796.7" y="213.9" width="6.5" height="6.5" fill="#00ffbd"/>
<rect x="802.7" y="213.9" width="6.5" height="6.5" fill="#00ffbc"/>
<rect x="808.7" y="213.9" width="6.5" height="6.5" fill="#00ffbb"/>
<rect x="814.7" y="213.9" width="6.5" height="6.5" fill="#00ffba"/>
<rect x="820.7" y="213.9" width="6.5" height="6.5" fill="#00ffb9"/>
<rect x="826.7" y="213.9" width="6.5" height="6.5" fill="#00ffb8"/>
<rect x="832.7" y="213.9" width="6.5" height="6.5" fill="#00ffb6"/>
<rect x="838.7" y="213.9" width="6.5" height="6.5" fill="#00ffb5"/>
<rect x="844.7" y="213.9" width="6.5" height="6.5" fill="#00ffb4"/>
<rect x="850.7" y="213.9" width="6.5" height="6.5" fill="#07ffb2"/>
<rect x="856.7" y="213.9" width="6.5" height="6.5" fill="#11ffb1"/>
<rect x="862.7" y="213.9" width="6.5" height="6.5" fill="#1effaf"/>
<rect x="868.7" y="213.9" width="6.5" height="6.5" fill="#2dffae"/>
<rect x="874.7" y="213.9" width="6.5" height="6.5" fill="#3effac"/>
<rect x="880.7" y="213.9" width="6.5" height="6.5" fill="#51ffaa"/>
<rect x="886.7" y="213.9" width="6.5" height="6.5" fill="#66ffa8"/>
<rect x="892.7" y="213.9" width="6.5" height="6.5" fill="#7dffa7"/>
<rect x="898.7" y="213.9" width="6.5" height="6.5" fill="#96ffa5"/>
<rect x="904.7" y="213.9" width="6.5" height="6.5" fill="#b2ffa3"/>
<rect x="910.7" y="213.9" width="6.5" height="6.5" fill="#d0ffa0"/>
<rect x="916.7" y="213.9" width="6.5" height="6.5" fill="#f1ff9e"/>
<rect x="922.7" y="213.9" width="6.5" height="6.5" fill="#ffeb90"/>
<rect x="928.7" y="213.9" width="6.5" height="6.5" fill="#ffce7c"/>
<rect x="934.7" y="213.9" width="6.5" height="6.5" fill="#ffb66b"/>
<rect x="940.7" y="213.9" width="6.5" height="6.5" fill="#ffa15d"/>
<rect x="946.7" y="213.9" width="6.5" height="6.5" fill="#ff8f51"/>
<rect x="952.7" y="213.9" width="6.5" height="6.5" fill="#ff8047"/>
<rect x="958.7" y="213.9" width="6.5" height="6.5" fill="#ff723e"/>
<rect x="964.7" y="213.9" width="6.5" height="6.5" fill="#ff6736"/>
<rect x="970.7" y="213.9" width="6.5" height="6.5" fill="#ff5c2f"/>
<rect x="976.7" y="213.9" width="6.5" height="6.5" fill="#ff5329"/>
<rect x="982.7" y="213.9" width="6.5" height="6.5" fill="#ff4b24"/>
<rect x="988.7" y="213.9" width="6.5" height="6.5" fill="#ff431f"/>
<rect x="994.7" y="213.9" width="6.5" height="6.5" fill="#ff3d1b"/>
<rect x="1000.7" y="213.9" width="6.5" height="6.5" fill="#ff3717"/>
<rect x="1006.7" y="213.9" width="6.5" height="6.5" fill="#ff3114"/>
<rect x="1012.7" y="213.9" width="6.5" height="6.5" fill="#ff2d11"/>
<rect x="1018.7" y="213.9" width="6.5" height="6.5" fill="#ff280e"/>
<rect x="1024.7" y="213.9" width="6.5" height="6.5" fill="#ff240c"/>
<rect x="1030.7" y="213.9" width="6.5" height="6.5" fill="#ff200a"/>
<rect x="1036.7" y="213.9" width="6.5" height="6.5" fill="#ff1d08"/>
<rect x="1042.7" y="213.9" width="6.5" height="6.5" fill="#ff1a06"/>
<rect x="1048.7" y="213.9" width="6.5" height="6.5" fill="#ff1705"/>
<rect x="1054.7" y="213.9" width="6.5" height="6.5" fill="#ff1403"/>
<rect x="1060.7" y="213.9" width="6.5" height="6.5" fill="#ff1202"/>
<rect x="1066.7" y="213.9" width="6.5" height="6.5" fill="#ff1001"/>
<rect x="1072.7" y="213.9" width="6.5" height="6.5" fill="#ff0e00"/>
<rect x="1078.7" y="213.9" width="6.5" height="6.5" fill="#ff0c00"/>
<rect x="1084.7" y="213.9" width="6.5" height="6.5" fill="#ff0a00"/>
<rect x="1090.7" y="213.9" width="6.5" height="6.5" fill="#ff0900"/>
<rect x="748.7" y="219.9" width="6.5" height="6.5" fill="#00ffd9"/>
<rect x="754.7" y="219.9" width="6.5" height="6.5" fill="#00ffd8"/>
<rect x="760.7" y="219.9" width="6.5" height="6.5" fill="#00ffd7"/>
<rect x="766.7" y="219.9" width="6.5" height="6.5" fill="#00ffd7"/>
<rect x="772.7" y="219.9" width="6.5" height="6.5" fill="#00ffd6"/>
<rect x="778.7" y="219.9" width="6.5" height="6.5" fill="#00ffd6"/>
<rect x="784.7" y="219.9" width="6.5" height="6.5" fill="#00ffd5"/>
<rect x="790.7" y="219.9" width="6.5" height="6.5" fill="#00ffd4"/>
<rect x="796.7" y="219.9" width="6.5" height="6.5" fill="#00ffd3"/>
<rect x="802.7" y="219.9" width="6.5" height="6.5" fill="#00ffd3"/>
<rect x="808.7" y="219.9" width="6.5" height="6.5" fill="#00ffd2"/>
<rect x="814.7" y="219.9" width="6.5" height="6.5" fill="#00ffd1"/>
<rect x="820.7" y="219.9" width="6.5" height="6.5" fill="#00ffd0"/>
<rect x="826.7" y="219.9" width="6.5" height="6.5" fill="#00ffcf"/>
<rect x="832.7" y="219.9" width="6.5" height="6.5" fill="#00ffcf"/>
<rect x="838.7" y="219.9" width="6.5" height="6.5" fill="#00ffce"/>
<rect x="844.7" y="219.9" width="6.5" height="6.5" fill="#01ffcd"/>
<rect x="850.7" y="219.9" width="6.5" height="6.5" fill="#0affcc"/>
<rect x="856.7" y="219.9" width="6.5" height="6.5" fill="#16ffcb"/>
<rect x="862.7" y="219.9" width="6.5" height="6.5" fill="#25ffc9"/>
<rect x="868.7" y="219.9" width="6.5" height="6.5" fill="#35ffc8"/>
<rect x="874.7" y="219.9" width="6.5" height="6.5" fill="#48ffc7"/>
<rect x="880.7" y="219.9" width="6.5" height="6.5" fill="#5dffc6"/>
<rect x="886.7" y="219.9" width="6.5" height="6.5" fill="#75ffc4"/>
<rect x="892.7" y="219.9" width="6.5" height="6.5" fill="#8fffc3"/>
<rect x="898.7" y="219.9" width="6.5" height="6.5" fill="#abffc2"/>
<rect x="904.7" y="219.9" width="6.5" height="6.5" fill="#cbffc0"/>
<rect x="910.7" y="219.9" width="6.5" height="6.5" fill="#edffbe"/>
<rect x="916.7" y="219.9" width="6.5" height="6.5" fill="#ffedb0"/>
<rect x="922.7" y="219.9" width="6.5" height="6.5" fill="#ffce97"/>
<rect x="928.7" y="219.9" width="6.5" height="6.5" fill="#ffb583"/>
<rect x="934.7" y="219.9" width="6.5" height="6.5" fill="#ff9f72"/>
<rect x="940.7" y="219.9" width="6.5" height="6.5" fill="#ff8d64"/>
<rect x="946.7" y="219.9" width="6.5" height="6.5" fill="#ff7d58"/>
<rect x="952.7" y="219.9" width="6.5" height="6.5" fill="#ff6f4d"/>
<rect x="958.7" y="219.9" width="6.5" height="6.5" fill="#ff6344"/>
<rect x="964.7" y="219.9" width="6.5" height="6.5" fill="#ff593b"/>
<rect x="970.7" y="219.9" width="6.5" height="6.5" fill="#ff4f34"/>
<rect x="976.7" y="219.9" width="6.5" height="6.5" fill="#ff472e"/>
<rect x="982.7" y="219.9" width="6.5" height="6.5" fill="#ff4028"/>
<rect x="988.7" y="219.9" width="6.5" height="6.5" fill="#ff3923"/>
<rect x="994.7" y="219.9" width="6.5" height="6.5" fill="#ff331f"/>
<rect x="1000.7" y="219.9" width="6.5" height="6.5" fill="#ff2e1b"/>
<rect x="1006.7" y="219.9" width="6.5" height="6.5" fill="#ff2917"/>
<rect x="1012.7" y="219.9" width="6.5" height="6.5" fill="#ff2514"/>
<rect x="1018.7" y="219.9" width="6.5" height="6.5" fill="#ff2111"/>
<rect x="1024.7" y="219.9" width="6.5" height="6.5" fill="#ff1d0f"/>
<rect x="1030.7" y="219.9" width="6.5" height="6.5" fill="#ff1a0c"/>
<rect x="1036.7" y="219.9" width="6.5" height="6.5" fill="#ff170a"/>
<rect x="1042.7" y="219.9" width="6.5" height="6.5" fill="#ff1408"/>
<rect x="1048.7" y="219.9" width="6.5" height="6.5" fill="#ff1207"/>
<rect x="1054.7" y="219.9" width="6.5" height="6.5" fill="#ff0f05"/>
<rect x="1060.7" y="219.9" width="6.5" height="6.5" fill="#ff0d04"/>
<rect x="1066.7" y="219.9" width="6.5" height="6.5" fill="#ff0b03"/>
<rect x="1072.7" y="219.9" width="6.5" height="6.5" fill="#ff0a02"/>
<rect x="1078.7" y="219.9" width="6.5" height="6.5" fill="#ff0801"/>
<rect x="1084.7" y="219.9" width="6.5" height="6.5" fill="#ff0700"/>
<rect x="1090.7" y="219.9" width="6.5" height="6.5" fill="#ff0500"/>
<rect x="1096.7" y="219.9" width="6.5" height="6.5" fill="#ff0400"/>
<rect x="748.7" y="225.9" width="6.5" height="6.5" fill="#00ffef"/>
<rect x="754.7" y="225.9" width="6.5" height="6.5" fill="#00ffee"/>
<rect x="760.7" y="225.9" width="6.5" height="6.5" fill="#00ffee"/>
<rect x="766.7" y="225.9" width="6.5" height="6.5" fill="#00ffee"/>
<rect x="772.7" y="225.9" width="6.5" height="6.5" fill="#00ffee"/>
<rect x="778.7" y="225.9" width="6.5" height="6.5" fill="#00ffed"/>
<rect x="784.7" y="225.9" width="6.5" height="6.5" fill="#00ffed"/>
<rect x="790.7" y="225.9" width="6.5" height="6.5" fill="#00ffed"/>
<rect x="796.7" y="225.9" width="6.5" height="6.5" fill="#00ffed"/>
<rect x="802.7" y="225.9" width="6.5" height="6.5" fill="#00ffec"/>
<rect x="808.7" y="225.9" width="6.5" height="6.5" fill="#00ffec"/>
<rect x="814.7" y="225.9" width="6.5" height="6.5" fill="#00ffec"/>
<rect x="820.7" y="225.9" width="6.5" height="6.5" fill="#00ffeb"/>
<rect x="826.7" y="225.9" width="6.5" height="6.5" fill="#00ffeb"/>
<rect x="832.7" y="225.9" width="6.5" height="6.5" fill="#00ffea"/>
<rect x="838.7" y="225.9" width="6.5" height="6.5" fill="#00ffea"/>
<rect x="844.7" y="225.9" width="6.5" height="6.5" fill="#03ffea"/>
<rect x="850.7" y="225.9" width="6.5" height="6.5" fill="#0effe9"/>
<rect x="856.7" y="225.9" width="6.5" height="6.5" fill="#1cffe9"/>
<rect x="862.7" y="225.9" width="6.5" height="6.5" fill="#2cffe8"/>
<rect x="868.7" y="225.9" width="6.5" height="6.5" fill="#3fffe8"/>
<rect x="874.7" y="225.9" width="6.5" height="6.5" fill="#54ffe7"/>
<rect x="880.7" y="225.9" width="6.5" height="6.5" fill="#6cffe7"/>
<rect x="886.7" y="225.9" width="6.5" height="6.5" fill="#87ffe6"/>
<rect x="892.7" y="225.9" width="6.5" height="6.5" fill="#a4ffe5"/>
<rect x="898.7" y="225.9" width="6.5" height="6.5" fill="#c5ffe5"/>
<rect x="904.7" y="225.9" width="6.5" height="6.5" fill="#e8ffe4"/>
<rect x="910.7" y="225.9" width="6.5" height="6.5" fill="#ffefd5"/>
<rect x="916.7" y="225.9" width="6.5" height="6.5" fill="#ffcfb8"/>
<rect x="922.7" y="225.9" width="6.5" height="6.5" fill="#ffb49f"/>
<rect x="928.7" y="225.9" width="6.5" height="6.5" fill="#ff9d8a"/>
<rect x="934.7" y="225.9" width="6.5" height="6.5" fill="#ff8a79"/>
<rect x="940.7" y="225.9" width="6.5" height="6.5" fill="#ff7a6a"/>
<rect x="946.7" y="225.9" width="6.5" height="6.5" fill="#ff6c5e"/>
<rect x="952.7" y="225.9" width="6.5" height="6.5" fill="#ff5f53"/>
<rect x="958.7" y="225.9" width="6.5" height="6.5" fill="#ff5549"/>
<rect x="964.7" y="225.9" width="6.5" height="6.5" fill="#ff4b40"/>
<rect x="970.7" y="225.9" width="6.5" height="6.5" fill="#ff4339"/>
<rect x="976.7" y="225.9" width="6.5" height="6.5" fill="#ff3c32"/>
<rect x="982.7" y="225.9" width="6.5" height="6.5" fill="#ff352d"/>
<rect x="988.7" y="225.9" width="6.5" height="6.5" fill="#ff2f27"/>
<rect x="994.7" y="225.9" width="6.5" height="6.5" fill="#ff2a23"/>
<rect x="1000.7" y="225.9" width="6.5" height="6.5" fill="#ff261e"/>
<rect x="1006.7" y="225.9" width="6.5" height="6.5" fill="#ff211b"/>
<rect x="1012.7" y="225.9" width="6.5" height="6.5" fill="#ff1d17"/>
<rect x="1018.7" y="225.9" width="6.5" height="6.5" fill="#ff1a14"/>
<rect x="1024.7" y="225.9" width="6.5" height="6.5" fill="#ff1711"/>
<rect x="1030.7" y="225.9" width="6.5" height="6.5" fill="#ff140f"/>
<rect x="1036.7" y="225.9" width="6.5" height="6.5" fill="#ff110d"/>
<rect x="1042.7" y="225.9" width="6.5" height="6.5" fill="#ff0f0b"/>
<rect x="1048.7" y="225.9" width="6.5" height="6.5" fill="#ff0d09"/>
<rect x="1054.7" y="225.9" width="6.5" height="6.5" fill="#ff0b07"/>
<rect x="1060.7" y="225.9" width="6.5" height="6.5" fill="#ff0906"/>
<rect x="1066.7" y="225.9" width="6.5" height="6.5" fill="#ff0704"/>
<rect x="1072.7" y="225.9" width="6.5" height="6.5" fill="#ff0603"/>
<rect x="1078.7" y="225.9" width="6.5" height="6.5" fill="#ff0502"/>
<rect x="1084.7" y="225.9" width="6.5" height="6.5" fill="#ff0301"/>
<rect x="1090.7" y="225.9" width="6.5" height="6.5" fill="#ff0200"/>
<rect x="1096.7" y="225.9" width="6.5" height="6.5" fill="#ff0200"/>
<rect x="1102.7" y="225.9" width="6.5" height="6.5" fill="#ff0100"/>
<rect x="1108.7" y="225.9" width="6.5" height="6.5" fill="#ff0000"/>
<rect x="748.7" y="231.9" width="6.5" height="6.5" fill="#00f7ff"/>
<rect x="754.7" y="231.9" width="6.5" height="6.5" fill="#00f7ff"/>
<rect x="760.7" y="231.9" width="6.5" height="6.5" fill="#00f6ff"/>
<rect x="766.7" y="231.9" width="6.5" height="6.5" fill="#00f6ff"/>
<rect x="772.7" y="231.9" width="6.5" height="6.5" fill="#00f6ff"/>
<rect x="778.7" y="231.9" width="6.5" height="6.5" fill="#00f6ff"/>
<rect x="784.7" y="231.9" width="6.5" height="6.5" fill="#00f6ff"/>
<rect x="790.7" y="231.9" width="6.5" height="6.5" fill="#00f5ff"/>
<rect x="796.7" y="231.9" width="6.5" height="6.5" fill="#00f5ff"/>
<rect x="802.7" y="231.9" width="6.5" height="6.5" fill="#00f5ff"/>
<rect x="808.7" y="231.9" width="6.5" height="6.5" fill="#00f5ff"/>
<rect x="814.7" y="231.9" width="6.5" height="6.5" fill="#00f4ff"/>
<rect x="820.7" y="231.9" width="6.5" height="6.5" fill="#00f4ff"/>
<rect x="826.7" y="231.9" width="6.5" height="6.5" fill="#00f4ff"/>
<rect x="832.7" y="231.9" width="6.5" height="6.5" fill="#00f4ff"/>
<rect x="838.7" y="231.9" width="6.5" height="6.5" fill="#00f3ff"/>
<rect x="844.7" y="231.9" width="6.5" height="6.5" fill="#06f3ff"/>
<rect x="850.7" y="231.9" width="6.5" height="6.5" fill="#12f3ff"/>
<rect x="856.7" y="231.9" width="6.5" height="6.5" fill="#21f2ff"/>
<rect x="862.7" y="231.9" width="6.5" height="6.5" fill="#33f2ff"/>
<rect x="868.7" y="231.9" width="6.5" height="6.5" fill="#47f2ff"/>
<rect x="874.7" y="231.9" width="6.5" height="6.5" fill="#5ef1ff"/>
<rect x="880.7" y="231.9" width="6.5" height="6.5" fill="#77f1ff"/>
<rect x="886.7" y="231.9" width="6.5" height="6.5" fill="#93f0ff"/>
<rect x="892.7" y="231.9" width="6.5" height="6.5" fill="#b3f0ff"/>
<rect x="898.7" y="231.9" width="6.5" height="6.5" fill="#d5efff"/>
<rect x="904.7" y="231.9" width="6.5" height="6.5" fill="#fcefff"/>
<rect x="910.7" y="231.9" width="6.5" height="6.5" fill="#ffcfdd"/>
<rect x="916.7" y="231.9" width="6.5" height="6.5" fill="#ffb2bf"/>
<rect x="922.7" y="231.9" width="6.5" height="6.5" fill="#ff9ba6"/>
<rect x="928.7" y="231.9" width="6.5" height="6.5" fill="#ff8791"/>
<rect x="934.7" y="231.9" width="6.5" height="6.5" fill="#ff7680"/>
<rect x="940.7" y="231.9" width="6.5" height="6.5" fill="#ff6871"/>
<rect x="946.7" y="231.9" width="6.5" height="6.5" fill="#ff5b63"/>
<rect x="952.7" y="231.9" width="6.5" height="6.5" fill="#ff5158"/>
<rect x="958.7" y="231.9" width="6.5" height="6.5" fill="#ff474e"/>
<rect x="964.7" y="231.9" width="6.5" height="6.5" fill="#ff3f45"/>
<rect x="970.7" y="231.9" width="6.5" height="6.5" fill="#ff383e"/>
<rect x="976.7" y="231.9" width="6.5" height="6.5" fill="#ff3137"/>
<rect x="982.7" y="231.9" width="6.5" height="6.5" fill="#ff2c31"/>
<rect x="988.7" y="231.9" width="6.5" height="6.5" fill="#ff262b"/>
<rect x="994.7" y="231.9" width="6.5" height="6.5" fill="#ff2226"/>
<rect x="1000.7" y="231.9" width="6.5" height="6.5" fill="#ff1e22"/>
<rect x="1006.7" y="231.9" width="6.5" height="6.5" fill="#ff1a1e"/>
<rect x="1012.7" y="231.9" width="6.5" height="6.5" fill="#ff171a"/>
<rect x="1018.7" y="231.9" width="6.5" height="6.5" fill="#ff1417"/>
<rect x="1024.7" y="231.9" width="6.5" height="6.5" fill="#ff1114"/>
<rect x="1030.7" y="231.9" width="6.5" height="6.5" fill="#ff0e12"/>
<rect x="1036.7" y="231.9" width="6.5" height="6.5" fill="#ff0c0f"/>
<rect x="1042.7" y="231.9" width="6.5" height="6.5" fill="#ff0a0d"/>
<rect x="1048.7" y="231.9" width="6.5" height="6.5" fill="#ff080b"/>
<rect x="1054.7" y="231.9" width="6.5" height="6.5" fill="#ff0709"/>
<rect x="1060.7" y="231.9" width="6.5" height="6.5" fill="#ff0507"/>
<rect x="1066.7" y="231.9" width="6.5" height="6.5" fill="#ff0406"/>
<rect x="1072.7" y="231.9" width="6.5" height="6.5" fill="#ff0305"/>
<rect x="1078.7" y="231.9" width="6.5" height="6.5" fill="#ff0203"/>
<rect x="1084.7" y="231.9" width="6.5" height="6.5" fill="#ff0102"/>
<rect x="1090.7" y="231.9" width="6.5" height="6.5" fill="#ff0002"/>
<rect x="1096.7" y="231.9" width="6.5" height="6.5" fill="#ff0001"/>
<rect x="1102.7" y="231.9" width="6.5" height="6.5" fill="#ff0000"/>
<rect x="1108.7" y="231.9" width="6.5" height="6.5" fill="#ff0000"/>
<rect x="1114.7" y="231.9" width="6.5" height="6.5" fill="#ff0000"/>
<rect x="754.7" y="237.9" width="6.5" height="6.5" fill="#00deff"/>
<rect x="760.7" y="237.9" width="6.5" height="6.5" fill="#00deff"/>
<rect x="766.7" y="237.9" width="6.5" height="6.5" fill="#00ddff"/>
<rect x="772.7" y="237.9" width="6.5" height="6.5" fill="#00ddff"/>
<rect x="778.7" y="237.9" width="6.5" height="6.5" fill="#00dcff"/>
<rect x="784.7" y="237.9" width="6.5" height="6.5" fill="#00dbff"/>
<rect x="790.7" y="237.9" width="6.5" height="6.5" fill="#00dbff"/>
<rect x="796.7" y="237.9" width="6.5" height="6.5" fill="#00daff"/>
<rect x="802.7" y="237.9" width="6.5" height="6.5" fill="#00d9ff"/>
<rect x="808.7" y="237.9" width="6.5" height="6.5" fill="#00d8ff"/>
<rect x="814.7" y="237.9" width="6.5" height="6.5" fill="#00d8ff"/>
<rect x="820.7" y="237.9" width="6.5" height="6.5" fill="#00d7ff"/>
<rect x="826.7" y="237.9" width="6.5" height="6.5" fill="#00d6ff"/>
<rect x="832.7" y="237.9" width="6.5" height="6.5" fill="#00d5ff"/>
<rect x="838.7" y="237.9" width="6.5" height="6.5" fill="#00d4ff"/>
<rect x="844.7" y="237.9" width="6.5" height="6.5" fill="#08d3ff"/>
<rect x="850.7" y="237.9" width="6.5" height="6.5" fill="#14d2ff"/>
<rect x="856.7" y="237.9" width="6.5" height="6.5" fill="#23d1ff"/>
<rect x="862.7" y="237.9" width="6.5" height="6.5" fill="#34d0ff"/>
<rect x="868.7" y="237.9" width="6.5" height="6.5" fill="#48cfff"/>
<rect x="874.7" y="237.9" width="6.5" height="6.5" fill="#5eceff"/>
<rect x="880.7" y="237.9" width="6.5" height="6.5" fill="#76ccff"/>
<rect x="886.7" y="237.9" width="6.5" height="6.5" fill="#91cbff"/>
<rect x="892.7" y="237.9" width="6.5" height="6.5" fill="#afc9ff"/>
<rect x="898.7" y="237.9" width="6.5" height="6.5" fill="#d0c8ff"/>
<rect x="904.7" y="237.9" width="6.5" height="6.5" fill="#f4c6ff"/>
<rect x="910.7" y="237.9" width="6.5" height="6.5" fill="#ffb1e5"/>
<rect x="916.7" y="237.9" width="6.5" height="6.5" fill="#ff98c7"/>
<rect x="922.7" y="237.9" width="6.5" height="6.5" fill="#ff83ad"/>
<rect x="928.7" y="237.9" width="6.5" height="6.5" fill="#ff7298"/>
<rect x="934.7" y="237.9" width="6.5" height="6.5" fill="#ff6386"/>
<rect x="940.7" y="237.9" width="6.5" height="6.5" fill="#ff5777"/>
<rect x="946.7" y="237.9" width="6.5" height="6.5" fill="#ff4c69"/>
<rect x="952.7" y="237.9" width="6.5" height="6.5" fill="#ff435e"/>
<rect x="958.7" y="237.9" width="6.5" height="6.5" fill="#ff3b53"/>
<rect x="964.7" y="237.9" width="6.5" height="6.5" fill="#ff334a"/>
<rect x="970.7" y="237.9" width="6.5" height="6.5" fill="#ff2d43"/>
<rect x="976.7" y="237.9" width="6.5" height="6.5" fill="#ff273b"/>
<rect x="982.7" y="237.9" width="6.5" height="6.5" fill="#ff2235"/>
<rect x="988.7" y="237.9" width="6.5" height="6.5" fill="#ff1e2f"/>
<rect x="994.7" y="237.9" width="6.5" height="6.5" fill="#ff1a2a"/>
<rect x="1000.7" y="237.9" width="6.5" height="6.5" fill="#ff1626"/>
<rect x="1006.7" y="237.9" width="6.5" height="6.5" fill="#ff1322"/>
<rect x="1012.7" y="237.9" width="6.5" height="6.5" fill="#ff101e"/>
<rect x="1018.7" y="237.9" width="6.5" height="6.5" fill="#ff0e1a"/>
<rect x="1024.7" y="237.9" width="6.5" height="6.5" fill="#ff0c17"/>
<rect x="1030.7" y="237.9" width="6.5" height="6.5" fill="#ff0914"/>
<rect x="1036.7" y="237.9" width="6.5" height="6.5" fill="#ff0812"/>
<rect x="1042.7" y="237.9" width="6.5" height="6.5" fill="#ff060f"/>
<rect x="1048.7" y="237.9" width="6.5" height="6.5" fill="#ff040d"/>
<rect x="1054.7" y="237.9" width="6.5" height="6.5" fill="#ff030b"/>
<rect x="1060.7" y="237.9" width="6.5" height="6.5" fill="#ff020a"/>
<rect x="1066.7" y="237.9" width="6.5" height="6.5" fill="#ff0108"/>
<rect x="1072.7" y="237.9" width="6.5" height="6.5" fill="#ff0006"/>
<rect x="1078.7" y="237.9" width="6.5" height="6.5" fill="#ff0005"/>
<rect x="1084.7" y="237.9" width="6.5" height="6.5" fill="#ff0004"/>
<rect x="1090.7" y="237.9" width="6.5" height="6.5" fill="#ff0003"/>
<rect x="1096.7" y="237.9" width="6.5" height="6.5" fill="#ff0002"/>
<rect x="1102.7" y="237.9" width="6.5" height="6.5" fill="#ff0001"/>
<rect x="1108.7" y="237.9" width="6.5" height="6.5" fill="#ff0000"/>
<rect x="1114.7" y="237.9" width="6.5" height="6.5" fill="#ff0000"/>
<rect x="1120.7" y="237.9" width="6.5" height="6.5" fill="#ff0000"/>
<rect x="1126.7" y="237.9" width="6.5" height="6.5" fill="#ff0000"/>
<rect x="754.7" y="243.9" width="6.5" height="6.5" fill="#00c8ff"/>
<rect x="760.7" y="243.9" width="6.5" height="6.5" fill="#00c7ff"/>
<rect x="766.7" y="243.9" width="6.5" height="6.5" fill="#00c6ff"/>
<rect x="772.7" y="243.9" width="6.5" height="6.5" fill="#00c5ff"/>
<rect x="778.7" y="243.9" width="6.5" height="6.5" fill="#00c4ff"/>
<rect x="784.7" y="243.9" width="6.5" height="6.5" fill="#00c3ff"/>
<rect x="790.7" y="243.9" width="6.5" height="6.5" fill="#00c2ff"/>
<rect x="796.7" y="243.9" width="6.5" height="6.5" fill="#00c1ff"/>
<rect x="802.7" y="243.9" width="6.5" height="6.5" fill="#00c0ff"/>
<rect x="808.7" y="243.9" width="6.5" height="6.5" fill="#00bfff"/>
<rect x="814.7" y="243.9" width="6.5" height="6.5" fill="#00bdff"/>
<rect x="820.7" y="243.9" width="6.5" height="6.5" fill="#00bcff"/>
<rect x="826.7" y="243.9" width="6.5" height="6.5" fill="#00bbff"/>
<rect x="832.7" y="243.9" width="6.5" height="6.5" fill="#00b9ff"/>
<rect x="838.7" y="243.9" width="6.5" height="6.5" fill="#02b8ff"/>
<rect x="844.7" y="243.9" width="6.5" height="6.5" fill="#0bb6ff"/>
<rect x="850.7" y="243.9" width="6.5" height="6.5" fill="#17b5ff"/>
<rect x="856.7" y="243.9" width="6.5" height="6.5" fill="#25b3ff"/>
<rect x="862.7" y="243.9" width="6.5" height="6.5" fill="#36b1ff"/>
<rect x="868.7" y="243.9" width="6.5" height="6.5" fill="#49b0ff"/>
<rect x="874.7" y="243.9" width="6.5" height="6.5" fill="#5eaeff"/>
<rect x="880.7" y="243.9" width="6.5" height="6.5" fill="#76acff"/>
<rect x="886.7" y="243.9" width="6.5" height="6.5" fill="#90aaff"/>
<rect x="892.7" y="243.9" width="6.5" height="6.5" fill="#aca8ff"/>
<rect x="898.7" y="243.9" width="6.5" height="6.5" fill="#cba5ff"/>
<rect x="904.7" y="243.9" width="6.5" height="6.5" fill="#eea3ff"/>
<rect x="910.7" y="243.9" width="6.5" height="6.5" fill="#ff95ec"/>
<rect x="916.7" y="243.9" width="6.5" height="6.5" fill="#ff80ce"/>
<rect x="922.7" y="243.9" width="6.5" height="6.5" fill="#ff6eb4"/>
<rect x="928.7" y="243.9" width="6.5" height="6.5" fill="#ff5f9f"/>
<rect x="934.7" y="243.9" width="6.5" height="6.5" fill="#ff528d"/>
<rect x="940.7" y="243.9" width="6.5" height="6.5" fill="#ff477d"/>
<rect x="946.7" y="243.9" width="6.5" height="6.5" fill="#ff3e6f"/>
<rect x="952.7" y="243.9" width="6.5" height="6.5" fill="#ff3663"/>
<rect x="958.7" y="243.9" width="6.5" height="6.5" fill="#ff2f59"/>
<rect x="964.7" y="243.9" width="6.5" height="6.5" fill="#ff294f"/>
<rect x="970.7" y="243.9" width="6.5" height="6.5" fill="#ff2347"/>
<rect x="976.7" y="243.9" width="6.5" height="6.5" fill="#ff1e40"/>
<rect x="982.7" y="243.9" width="6.5" height="6.5" fill="#ff1a39"/>
<rect x="988.7" y="243.9" width="6.5" height="6.5" fill="#ff1633"/>
<rect x="994.7" y="243.9" width="6.5" height="6.5" fill="#ff132e"/>
<rect x="1000.7" y="243.9" width="6.5" height="6.5" fill="#ff1029"/>
<rect x="1006.7" y="243.9" width="6.5" height="6.5" fill="#ff0d25"/>
<rect x="1012.7" y="243.9" width="6.5" height="6.5" fill="#ff0b21"/>
<rect x="1018.7" y="243.9" width="6.5" height="6.5" fill="#ff091d"/>
<rect x="1024.7" y="243.9" width="6.5" height="6.5" fill="#ff071a"/>
<rect x="1030.7" y="243.9" width="6.5" height="6.5" fill="#ff0517"/>
<rect x="1036.7" y="243.9" width="6.5" height="6.5" fill="#ff0414"/>
<rect x="1042.7" y="243.9" width="6.5" height="6.5" fill="#ff0212"/>
<rect x="1048.7" y="243.9" width="6.5" height="6.5" fill="#ff0110"/>
<rect x="1054.7" y="243.9" width="6.5" height="6.5" fill="#ff000e"/>
<rect x="1060.7" y="243.9" width="6.5" height="6.5" fill="#ff000c"/>
<rect x="1066.7" y="243.9" width="6.5" height="6.5" fill="#ff000a"/>
<rect x="1072.7" y="243.9" width="6.5" height="6.5" fill="#ff0008"/>
<rect x="1078.7" y="243.9" width="6.5" height="6.5" fill="#ff0007"/>
<rect x="1084.7" y="243.9" width="6.5" height="6.5" fill="#ff0006"/>
<rect x="1090.7" y="243.9" width="6.5" height="6.5" fill="#ff0004"/>
<rect x="1096.7" y="243.9" width="6.5" height="6.5" fill="#ff0003"/>
<rect x="1102.7" y="243.9" width="6.5" height="6.5" fill="#ff0002"/>
<rect x="1108.7" y="243.9" width="6.5" height="6.5" fill="#ff0002"/>
<rect x="1114.7" y="243.9" width="6.5" height="6.5" fill="#ff0001"/>
<rect x="1120.7" y="243.9" width="6.5" height="6.5" fill="#ff0000"/>
<rect x="1126.7" y="243.9" width="6.5" height="6.5" fill="#ff0000"/>
<rect x="1132.7" y="243.9" width="6.5" height="6.5" fill="#ff0000"/>
<rect x="754.7" y="249.9" width="6.5" height="6.5" fill="#00b3ff"/>
<rect x="760.7" y="249.9" width="6.5" height="6.5" fill="#00b2ff"/>
<rect x="766.7" y="249.9" width="6.5" height="6.5" fill="#00b1ff"/>
<rect x="772.7" y="249.9" width="6.5" height="6.5" fill="#00b0ff"/>
<rect x="778.7" y="249.9" width="6.5" height="6.5" fill="#00aeff"/>
<rect x="784.7" y="249.9" width="6.5" height="6.5" fill="#00adff"/>
<rect x="790.7" y="249.9" width="6.5" height="6.5" fill="#00abff"/>
<rect x="796.7" y="249.9" width="6.5" height="6.5" fill="#00aaff"/>
<rect x="802.7" y="249.9" width="6.5" height="6.5" fill="#00a9ff"/>
<rect x="808.7" y="249.9" width="6.5" height="6.5" fill="#00a7ff"/>
<rect x="814.7" y="249.9" width="6.5" height="6.5" fill="#00a5ff"/>
<rect x="820.7" y="249.9" width="6.5" height="6.5" fill="#00a4ff"/>
<rect x="826.7" y="249.9" width="6.5" height="6.5" fill="#00a2ff"/>
<rect x="832.7" y="249.9" width="6.5" height="6.5" fill="#00a0ff"/>
<rect x="838.7" y="249.9" width="6.5" height="6.5" fill="#039eff"/>
<rect x="844.7" y="249.9" width="6.5" height="6.5" fill="#0d9cff"/>
<rect x="850.7" y="249.9" width="6.5" height="6.5" fill="#199aff"/>
<rect x="856.7" y="249.9" width="6.5" height="6.5" fill="#2798ff"/>
<rect x="862.7" y="249.9" width="6.5" height="6.5" fill="#3896ff"/>
<rect x="868.7" y="249.9" width="6.5" height="6.5" fill="#4a94ff"/>
<rect x="874.7" y="249.9" width="6.5" height="6.5" fill="#5f92ff"/>
<rect x="880.7" y="249.9" width="6.5" height="6.5" fill="#758fff"/>
<rect x="886.7" y="249.9" width="6.5" height="6.5" fill="#8e8dff"/>
<rect x="892.7" y="249.9" width="6.5" height="6.5" fill="#a98aff"/>
<rect x="898.7" y="249.9" width="6.5" height="6.5" fill="#c787ff"/>
<rect x="904.7" y="249.9" width="6.5" height="6.5" fill="#e884ff"/>
<rect x="910.7" y="249.9" width="6.5" height="6.5" fill="#ff7bf4"/>
<rect x="916.7" y="249.9" width="6.5" height="6.5" fill="#ff69d5"/>
<rect x="922.7" y="249.9" width="6.5" height="6.5" fill="#ff5abb"/>
<rect x="928.7" y="249.9" width="6.5" height="6.5" fill="#ff4da5"/>
<rect x="934.7" y="249.9" width="6.5" height="6.5" fill="#ff4293"/>
<rect x="940.7" y="249.9" width="6.5" height="6.5" fill="#ff3983"/>
<rect x="946.7" y="249.9" width="6.5" height="6.5" fill="#ff3175"/>
<rect x="952.7" y="249.9" width="6.5" height="6.5" fill="#ff2a69"/>
<rect x="958.7" y="249.9" width="6.5" height="6.5" fill="#ff245e"/>
<rect x="964.7" y="249.9" width="6.5" height="6.5" fill="#ff1f54"/>
<rect x="970.7" y="249.9" width="6.5" height="6.5" fill="#ff1a4c"/>
<rect x="976.7" y="249.9" width="6.5" height="6.5" fill="#ff1644"/>
<rect x="982.7" y="249.9" width="6.5" height="6.5" fill="#ff123e"/>
<rect x="988.7" y="249.9" width="6.5" height="6.5" fill="#ff0f37"/>
<rect x="994.7" y="249.9" width="6.5" height="6.5" fill="#ff0c32"/>
<rect x="1000.7" y="249.9" width="6.5" height="6.5" fill="#ff0a2d"/>
<rect x="1006.7" y="249.9" width="6.5" height="6.5" fill="#ff0828"/>
<rect x="1012.7" y="249.9" width="6.5" height="6.5" fill="#ff0624"/>
<rect x="1018.7" y="249.9" width="6.5" height="6.5" fill="#ff0421"/>
<rect x="1024.7" y="249.9" width="6.5" height="6.5" fill="#ff031d"/>
<rect x="1030.7" y="249.9" width="6.5" height="6.5" fill="#ff021a"/>
<rect x="1036.7" y="249.9" width="6.5" height="6.5" fill="#ff0117"/>
<rect x="1042.7" y="249.9" width="6.5" height="6.5" fill="#ff0015"/>
<rect x="1048.7" y="249.9" width="6.5" height="6.5" fill="#ff0012"/>
<rect x="1054.7" y="249.9" width="6.5" height="6.5" fill="#ff0010"/>
<rect x="1060.7" y="249.9" width="6.5" height="6.5" fill="#ff000e"/>
<rect x="1066.7" y="249.9" width="6.5" height="6.5" fill="#ff000c"/>
<rect x="1072.7" y="249.9" width="6.5" height="6.5" fill="#ff000a"/>
<rect x="1078.7" y="249.9" width="6.5" height="6.5" fill="#ff0009"/>
<rect x="1084.7" y="249.9" width="6.5" height="6.5" fill="#ff0007"/>
<rect x="1090.7" y="249.9" width="6.5" height="6.5" fill="#ff0006"/>
<rect x="1096.7" y="249.9" width="6.5" height="6.5" fill="#ff0005"/>
<rect x="1102.7" y="249.9" width="6.5" height="6.5" fill="#ff0004"/>
<rect x="1108.7" y="249.9" width="6.5" height="6.5" fill="#ff0003"/>
<rect x="1114.7" y="249.9" width="6.5" height="6.5" fill="#ff0002"/>
<rect x="1120.7" y="249.9" width="6.5" height="6.5" fill="#ff0001"/>
<rect x="1126.7" y="249.9" width="6.5" height="6.5" fill="#ff0001"/>
<rect x="1132.7" y="249.9" width="6.5" height="6.5" fill="#ff0000"/>
<rect x="760.7" y="255.9" width="6.5" height="6.5" fill="#009fff"/>
<rect x="766.7" y="255.9" width="6.5" height="6.5" fill="#009dff"/>
<rect x="772.7" y="255.9" width="6.5" height="6.5" fill="#009cff"/>
<rect x="778.7" y="255.9" width="6.5" height="6.5" fill="#009aff"/>
<rect x="784.7" y="255.9" width="6.5" height="6.5" fill="#0098ff"/>
<rect x="790.7" y="255.9" width="6.5" height="6.5" fill="#0097ff"/>
<rect x="796.7" y="255.9" width="6.5" height="6.5" fill="#0095ff"/>
<rect x="802.7" y="255.9" width="6.5" height="6.5" fill="#0093ff"/>
<rect x="808.7" y="255.9" width="6.5" height="6.5" fill="#0091ff"/>
<rect x="814.7" y="255.9" width="6.5" height="6.5" fill="#0090ff"/>
<rect x="820.7" y="255.9" width="6.5" height="6.5" fill="#008eff"/>
<rect x="826.7" y="255.9" width="6.5" height="6.5" fill="#008cff"/>
<rect x="832.7" y="255.9" width="6.5" height="6.5" fill="#0089ff"/>
<rect x="838.7" y="255.9" width="6.5" height="6.5" fill="#0587ff"/>
<rect x="844.7" y="255.9" width="6.5" height="6.5" fill="#0f85ff"/>
<rect x="850.7" y="255.9" width="6.5" height="6.5" fill="#1b83ff"/>
<rect x="856.7" y="255.9" width="6.5" height="6.5" fill="#2980ff"/>
<rect x="862.7" y="255.9" width="6.5" height="6.5" fill="#397eff"/>
<rect x="868.7" y="255.9" width="6.5" height="6.5" fill="#4b7bff"/>
<rect x="874.7" y="255.9" width="6.5" height="6.5" fill="#5f78ff"/>
<rect x="880.7" y="255.9" width="6.5" height="6.5" fill="#7576ff"/>
<rect x="886.7" y="255.9" width="6.5" height="6.5" fill="#8d73ff"/>
<rect x="892.7" y="255.9" width="6.5" height="6.5" fill="#a770ff"/>
<rect x="898.7" y="255.9" width="6.5" height="6.5" fill="#c36cff"/>
<rect x="904.7" y="255.9" width="6.5" height="6.5" fill="#e269ff"/>
<rect x="910.7" y="255.9" width="6.5" height="6.5" fill="#ff64fa"/>
<rect x="916.7" y="255.9" width="6.5" height="6.5" fill="#ff54dc"/>
<rect x="922.7" y="255.9" width="6.5" height="6.5" fill="#ff48c2"/>
<rect x="928.7" y="255.9" width="6.5" height="6.5" fill="#ff3dac"/>
<rect x="934.7" y="255.9" width="6.5" height="6.5" fill="#ff3499"/>
<rect x="940.7" y="255.9" width="6.5" height="6.5" fill="#ff2c89"/>
<rect x="946.7" y="255.9" width="6.5" height="6.5" fill="#ff257a"/>
<rect x="952.7" y="255.9" width="6.5" height="6.5" fill="#ff1f6e"/>
<rect x="958.7" y="255.9" width="6.5" height="6.5" fill="#ff1a63"/>
<rect x="964.7" y="255.9" width="6.5" height="6.5" fill="#ff1659"/>
<rect x="970.7" y="255.9" width="6.5" height="6.5" fill="#ff1250"/>
<rect x="976.7" y="255.9" width="6.5" height="6.5" fill="#ff0f49"/>
<rect x="982.7" y="255.9" width="6.5" height="6.5" fill="#ff0c42"/>
<rect x="988.7" y="255.9" width="6.5" height="6.5" fill="#ff093b"/>
<rect x="994.7" y="255.9" width="6.5" height="6.5" fill="#ff0736"/>
<rect x="1000.7" y="255.9" width="6.5" height="6.5" fill="#ff0531"/>
<rect x="1006.7" y="255.9" width="6.5" height="6.5" fill="#ff032c"/>
<rect x="1012.7" y="255.9" width="6.5" height="6.5" fill="#ff0228"/>
<rect x="1018.7" y="255.9" width="6.5" height="6.5" fill="#ff0124"/>
<rect x="1024.7" y="255.9" width="6.5" height="6.5" fill="#ff0020"/>
<rect x="1030.7" y="255.9" width="6.5" height="6.5" fill="#ff001d"/>
<rect x="1036.7" y="255.9" width="6.5" height="6.5" fill="#ff001a"/>
<rect x="1042.7" y="255.9" width="6.5" height="6.5" fill="#ff0017"/>
<rect x="1048.7" y="255.9" width="6.5" height="6.5" fill="#ff0015"/>
<rect x="1054.7" y="255.9" width="6.5" height="6.5" fill="#ff0012"/>
<rect x="1060.7" y="255.9" width="6.5" height="6.5" fill="#ff0010"/>
<rect x="1066.7" y="255.9" width="6.5" height="6.5" fill="#ff000e"/>
<rect x="1072.7" y="255.9" width="6.5" height="6.5" fill="#ff000c"/>
<rect x="1078.7" y="255.9" width="6.5" height="6.5" fill="#ff000b"/>
<rect x="1084.7" y="255.9" width="6.5" height="6.5" fill="#ff0009"/>
<rect x="1090.7" y="255.9" width="6.5" height="6.5" fill="#ff0008"/>
<rect x="1096.7" y="255.9" width="6.5" height="6.5" fill="#ff0006"/>
<rect x="1102.7" y="255.9" width="6.5" height="6.5" fill="#ff0005"/>
<rect x="1108.7" y="255.9" width="6.5" height="6.5" fill="#ff0004"/>
<rect x="1114.7" y="255.9" width="6.5" height="6.5" fill="#ff0003"/>
<rect x="1120.7" y="255.9" width="6.5" height="6.5" fill="#ff0002"/>
<rect x="1126.7" y="255.9" width="6.5" height="6.5" fill="#ff0001"/>
<rect x="1132.7" y="255.9" width="6.5" height="6.5" fill="#ff0001"/>
<rect x="1138.7" y="255.9" width="6.5" height="6.5" fill="#ff0000"/>
<rect x="760.7" y="261.9" width="6.5" height="6.5" fill="#008dff"/>
<rect x="766.7" y="261.9" width="6.5" height="6.5" fill="#008bff"/>
<rect x="772.7" y="261.9" width="6.5" height="6.5" fill="#0089ff"/>
<rect x="778.7" y="261.9" width="6.5" height="6.5" fill="#0087ff"/>
<rect x="784.7" y="261.9" width="6.5" height="6.5" fill="#0086ff"/>
<rect x="790.7" y="261.9" width="6.5" height="6.5" fill="#0084ff"/>
<rect x="796.7" y="261.9" width="6.5" height="6.5" fill="#0082ff"/>
<rect x="802.7" y="261.9" width="6.5" height="6.5" fill="#0080ff"/>
<rect x="808.7" y="261.9" width="6.5" height="6.5" fill="#007eff"/>
<rect x="814.7" y="261.9" width="6.5" height="6.5" fill="#007cff"/>
<rect x="820.7" y="261.9" width="6.5" height="6.5" fill="#0079ff"/>
<rect x="826.7" y="261.9" width="6.5" height="6.5" fill="#0077ff"/>
<rect x="832.7" y="261.9" width="6.5" height="6.5" fill="#0075ff"/>
<rect x="838.7" y="261.9" width="6.5" height="6.5" fill="#0772ff"/>
<rect x="844.7" y="261.9" width="6.5" height="6.5" fill="#1170ff"/>
<rect x="850.7" y="261.9" width="6.5" height="6.5" fill="#1d6dff"/>
<rect x="856.7" y="261.9" width="6.5" height="6.5" fill="#2b6bff"/>
<rect x="862.7" y="261.9" width="6.5" height="6.5" fill="#3b68ff"/>
<rect x="868.7" y="261.9" width="6.5" height="6.5" fill="#4c65ff"/>
<rect x="874.7" y="261.9" width="6.5" height="6.5" fill="#5f62ff"/>
<rect x="880.7" y="261.9" width="6.5" height="6.5" fill="#745fff"/>
<rect x="886.7" y="261.9" width="6.5" height="6.5" fill="#8b5cff"/>
<rect x="892.7" y="261.9" width="6.5" height="6.5" fill="#a459ff"/>
<rect x="898.7" y="261.9" width="6.5" height="6.5" fill="#bf55ff"/>
<rect x="904.7" y="261.9" width="6.5" height="6.5" fill="#dd52ff"/>
<rect x="910.7" y="261.9" width="6.5" height="6.5" fill="#fd4eff"/>
<rect x="916.7" y="261.9" width="6.5" height="6.5" fill="#ff42e2"/>
<rect x="922.7" y="261.9" width="6.5" height="6.5" fill="#ff37c8"/>
<rect x="928.7" y="261.9" width="6.5" height="6.5" fill="#ff2eb2"/>
<rect x="934.7" y="261.9" width="6.5" height="6.5" fill="#ff269f"/>
<rect x="940.7" y="261.9" width="6.5" height="6.5" fill="#ff208e"/>
<rect x="946.7" y="261.9" width="6.5" height="6.5" fill="#ff1a80"/>
<rect x="952.7" y="261.9" width="6.5" height="6.5" fill="#ff1673"/>
<rect x="958.7" y="261.9" width="6.5" height="6.5" fill="#ff1168"/>
<rect x="964.7" y="261.9" width="6.5" height="6.5" fill="#ff0e5e"/>
<rect x="970.7" y="261.9" width="6.5" height="6.5" fill="#ff0b55"/>
<rect x="976.7" y="261.9" width="6.5" height="6.5" fill="#ff084d"/>
<rect x="982.7" y="261.9" width="6.5" height="6.5" fill="#ff0646"/>
<rect x="988.7" y="261.9" width="6.5" height="6.5" fill="#ff043f"/>
<rect x="994.7" y="261.9" width="6.5" height="6.5" fill="#ff023a"/>
<rect x="1000.7" y="261.9" width="6.5" height="6.5" fill="#ff0134"/>
<rect x="1006.7" y="261.9" width="6.5" height="6.5" fill="#ff002f"/>
<rect x="1012.7" y="261.9" width="6.5" height="6.5" fill="#ff002b"/>
<rect x="1018.7" y="261.9" width="6.5" height="6.5" fill="#ff0027"/>
<rect x="1024.7" y="261.9" width="6.5" height="6.5" fill="#ff0023"/>
<rect x="1030.7" y="261.9" width="6.5" height="6.5" fill="#ff0020"/>
<rect x="1036.7" y="261.9" width="6.5" height="6.5" fill="#ff001d"/>
<rect x="1042.7" y="261.9" width="6.5" height="6.5" fill="#ff001a"/>
<rect x="1048.7" y="261.9" width="6.5" height="6.5" fill="#ff0017"/>
<rect x="1054.7" y="261.9" width="6.5" height="6.5" fill="#ff0015"/>
<rect x="1060.7" y="261.9" width="6.5" height="6.5" fill="#ff0012"/>
<rect x="1066.7" y="261.9" width="6.5" height="6.5" fill="#ff0010"/>
<rect x="1072.7" y="261.9" width="6.5" height="6.5" fill="#ff000e"/>
<rect x="1078.7" y="261.9" width="6.5" height="6.5" fill="#ff000d"/>
<rect x="1084.7" y="261.9" width="6.5" height="6.5" fill="#ff000b"/>
<rect x="1090.7" y="261.9" width="6.5" height="6.5" fill="#ff0009"/>
<rect x="1096.7" y="261.9" width="6.5" height="6.5" fill="#ff0008"/>
<rect x="1102.7" y="261.9" width="6.5" height="6.5" fill="#ff0007"/>
<rect x="1108.7" y="261.9" width="6.5" height="6.5" fill="#ff0006"/>
<rect x="1114.7" y="261.9" width="6.5" height="6.5" fill="#ff0004"/>
<rect x="1120.7" y="261.9" width="6.5" height="6.5" fill="#ff0004"/>
<rect x="760.7" y="267.9" width="6.5" height="6.5" fill="#007cff"/>
<rect x="766.7" y="267.9" width="6.5" height="6.5" fill="#007aff"/>
<rect x="772.7" y="267.9" width="6.5" height="6.5" fill="#0078ff"/>
<rect x="778.7" y="267.9" width="6.5" height="6.5" fill="#0076ff"/>
<rect x="784.7" y="267.9" width="6.5" height="6.5" fill="#0074ff"/>
<rect x="790.7" y="267.9" width="6.5" height="6.5" fill="#0072ff"/>
<rect x="796.7" y="267.9" width="6.5" height="6.5" fill="#0070ff"/>
<rect x="802.7" y="267.9" width="6.5" height="6.5" fill="#006eff"/>
<rect x="808.7" y="267.9" width="6.5" height="6.5" fill="#006cff"/>
<rect x="814.7" y="267.9" width="6.5" height="6.5" fill="#0069ff"/>
<rect x="820.7" y="267.9" width="6.5" height="6.5" fill="#0067ff"/>
<rect x="826.7" y="267.9" width="6.5" height="6.5" fill="#0065ff"/>
<rect x="832.7" y="267.9" width="6.5" height="6.5" fill="#0262ff"/>
<rect x="838.7" y="267.9" width="6.5" height="6.5" fill="#0960ff"/>
<rect x="844.7" y="267.9" width="6.5" height="6.5" fill="#135dff"/>
<rect x="850.7" y="267.9" width="6.5" height="6.5" fill="#1f5aff"/>
<rect x="856.7" y="267.9" width="6.5" height="6.5" fill="#2d57ff"/>
<rect x="862.7" y="267.9" width="6.5" height="6.5" fill="#3c54ff"/>
<rect x="868.7" y="267.9" width="6.5" height="6.5" fill="#4d51ff"/>
<rect x="874.7" y="267.9" width="6.5" height="6.5" fill="#604eff"/>
<rect x="880.7" y="267.9" width="6.5" height="6.5" fill="#744bff"/>
<rect x="886.7" y="267.9" width="6.5" height="6.5" fill="#8a48ff"/>
<rect x="892.7" y="267.9" width="6.5" height="6.5" fill="#a244ff"/>
<rect x="898.7" y="267.9" width="6.5" height="6.5" fill="#bc41ff"/>
<rect x="904.7" y="267.9" width="6.5" height="6.5" fill="#d83dff"/>
<rect x="910.7" y="267.9" width="6.5" height="6.5" fill="#f739ff"/>
<rect x="916.7" y="267.9" width="6.5" height="6.5" fill="#ff31e9"/>
<rect x="922.7" y="267.9" width="6.5" height="6.5" fill="#ff28ce"/>
<rect x="928.7" y="267.9" width="6.5" height="6.5" fill="#ff21b8"/>
<rect x="934.7" y="267.9" width="6.5" height="6.5" fill="#ff1aa5"/>
<rect x="940.7" y="267.9" width="6.5" height="6.5" fill="#ff1594"/>
<rect x="946.7" y="267.9" width="6.5" height="6.5" fill="#ff1185"/>
<rect x="952.7" y="267.9" width="6.5" height="6.5" fill="#ff0d78"/>
<rect x="958.7" y="267.9" width="6.5" height="6.5" fill="#ff0a6d"/>
<rect x="964.7" y="267.9" width="6.5" height="6.5" fill="#ff0763"/>
<rect x="970.7" y="267.9" width="6.5" height="6.5" fill="#ff055a"/>
<rect x="976.7" y="267.9" width="6.5" height="6.5" fill="#ff0351"/>
<rect x="982.7" y="267.9" width="6.5" height="6.5" fill="#ff014a"/>
<rect x="988.7" y="267.9" width="6.5" height="6.5" fill="#ff0043"/>
<rect x="994.7" y="267.9" width="6.5" height="6.5" fill="#ff003d"/>
<rect x="1000.7" y="267.9" width="6.5" height="6.5" fill="#ff0038"/>
<rect x="1006.7" y="267.9" width="6.5" height="6.5" fill="#ff0033"/>
<rect x="1012.7" y="267.9" width="6.5" height="6.5" fill="#ff002e"/>
<rect x="1018.7" y="267.9" width="6.5" height="6.5" fill="#ff002a"/>
<rect x="1024.7" y="267.9" width="6.5" height="6.5" fill="#ff0026"/>
<rect x="1030.7" y="267.9" width="6.5" height="6.5" fill="#ff0023"/>
<rect x="1036.7" y="267.9" width="6.5" height="6.5" fill="#ff001f"/>
<rect x="1042.7" y="267.9" width="6.5" height="6.5" fill="#ff001c"/>
<rect x="1048.7" y="267.9" width="6.5" height="6.5" fill="#ff001a"/>
<rect x="1054.7" y="267.9" width="6.5" height="6.5" fill="#ff0017"/>
<rect x="1060.7" y="267.9" width="6.5" height="6.5" fill="#ff0015"/>
<rect x="1066.7" y="267.9" width="6.5" height="6.5" fill="#ff0013"/>
<rect x="1072.7" y="267.9" width="6.5" height="6.5" fill="#ff0010"/>
<rect x="1078.7" y="267.9" width="6.5" height="6.5" fill="#ff000f"/>
<rect x="1084.7" y="267.9" width="6.5" height="6.5" fill="#ff000d"/>
<rect x="1090.7" y="267.9" width="6.5" height="6.5" fill="#ff000b"/>
<rect x="1096.7" y="267.9" width="6.5" height="6.5" fill="#ff000a"/>
<rect x="766.7" y="273.9" width="6.5" height="6.5" fill="#006aff"/>
<rect x="772.7" y="273.9" width="6.5" height="6.5" fill="#0068ff"/>
<rect x="778.7" y="273.9" width="6.5" height="6.5" fill="#0066ff"/>
<rect x="784.7" y="273.9" width="6.5" height="6.5" fill="#0064ff"/>
<rect x="790.7" y="273.9" width="6.5" height="6.5" fill="#0062ff"/>
<rect x="796.7" y="273.9" width="6.5" height="6.5" fill="#0060ff"/>
<rect x="802.7" y="273.9" width="6.5" height="6.5" fill="#005eff"/>
<rect x="808.7" y="273.9" width="6.5" height="6.5" fill="#005bff"/>
<rect x="814.7" y="273.9" width="6.5" height="6.5" fill="#0059ff"/>
<rect x="820.7" y="273.9" width="6.5" height="6.5" fill="#0056ff"/>
<rect x="826.7" y="273.9" width="6.5" height="6.5" fill="#0054ff"/>
<rect x="832.7" y="273.9" width="6.5" height="6.5" fill="#0351ff"/>
<rect x="838.7" y="273.9" width="6.5" height="6.5" fill="#0b4fff"/>
<rect x="844.7" y="273.9" width="6.5" height="6.5" fill="#154cff"/>
<rect x="850.7" y="273.9" width="6.5" height="6.5" fill="#2149ff"/>
<rect x="856.7" y="273.9" width="6.5" height="6.5" fill="#2e46ff"/>
<rect x="862.7" y="273.9" width="6.5" height="6.5" fill="#3d43ff"/>
<rect x="868.7" y="273.9" width="6.5" height="6.5" fill="#4e40ff"/>
<rect x="874.7" y="273.9" width="6.5" height="6.5" fill="#603dff"/>
<rect x="880.7" y="273.9" width="6.5" height="6.5" fill="#7339ff"/>
<rect x="886.7" y="273.9" width="6.5" height="6.5" fill="#8936ff"/>
<rect x="892.7" y="273.9" width="6.5" height="6.5" fill="#a033ff"/>
<rect x="898.7" y="273.9" width="6.5" height="6.5" fill="#b92fff"/>
<rect x="904.7" y="273.9" width="6.5" height="6.5" fill="#d42bff"/>
<rect x="910.7" y="273.9" width="6.5" height="6.5" fill="#f128ff"/>
<rect x="916.7" y="273.9" width="6.5" height="6.5" fill="#ff21ef"/>
<rect x="922.7" y="273.9" width="6.5" height="6.5" fill="#ff1bd4"/>
<rect x="928.7" y="273.9" width="6.5" height="6.5" fill="#ff15be"/>
<rect x="934.7" y="273.9" width="6.5" height="6.5" fill="#ff10aa"/>
<rect x="940.7" y="273.9" width="6.5" height="6.5" fill="#ff0c99"/>
<rect x="946.7" y="273.9" width="6.5" height="6.5" fill="#ff088b"/>
<rect x="952.7" y="273.9" width="6.5" height="6.5" fill="#ff067d"/>
<rect x="958.7" y="273.9" width="6.5" height="6.5" fill="#ff0372"/>
<rect x="964.7" y="273.9" width="6.5" height="6.5" fill="#ff0267"/>
<rect x="970.7" y="273.9" width="6.5" height="6.5" fill="#ff005e"/>
<rect x="976.7" y="273.9" width="6.5" height="6.5" fill="#ff0056"/>
<rect x="982.7" y="273.9" width="6.5" height="6.5" fill="#ff004e"/>
<rect x="988.7" y="273.9" width="6.5" height="6.5" fill="#ff0047"/>
<rect x="994.7" y="273.9" width="6.5" height="6.5" fill="#ff0041"/>
<rect x="1000.7" y="273.9" width="6.5" height="6.5" fill="#ff003b"/>
<rect x="1006.7" y="273.9" width="6.5" height="6.5" fill="#ff0036"/>
<rect x="1012.7" y="273.9" width="6.5" height="6.5" fill="#ff0032"/>
<rect x="1018.7" y="273.9" width="6.5" height="6.5" fill="#ff002d"/>
<rect x="1024.7" y="273.9" width="6.5" height="6.5" fill="#ff0029"/>
<rect x="1030.7" y="273.9" width="6.5" height="6.5" fill="#ff0026"/>
<rect x="1036.7" y="273.9" width="6.5" height="6.5" fill="#ff0022"/>
<rect x="1042.7" y="273.9" width="6.5" height="6.5" fill="#ff001f"/>
<rect x="1048.7" y="273.9" width="6.5" height="6.5" fill="#ff001c"/>
<rect x="1054.7" y="273.9" width="6.5" height="6.5" fill="#ff001a"/>
<rect x="1060.7" y="273.9" width="6.5" height="6.5" fill="#ff0017"/>
<rect x="1066.7" y="273.9" width="6.5" height="6.5" fill="#ff0015"/>
<rect x="1072.7" y="273.9" width="6.5" height="6.5" fill="#ff0013"/>
<rect x="1078.7" y="273.9" width="6.5" height="6.5" fill="#ff0011"/>
<rect x="766.7" y="279.9" width="6.5" height="6.5" fill="#005cff"/>
<rect x="772.7" y="279.9" width="6.5" height="6.5" fill="#005aff"/>
<rect x="778.7" y="279.9" width="6.5" height="6.5" fill="#0058ff"/>
<rect x="784.7" y="279.9" width="6.5" height="6.5" fill="#0056ff"/>
<rect x="790.7" y="279.9" width="6.5" height="6.5" fill="#0053ff"/>
<rect x="796.7" y="279.9" width="6.5" height="6.5" fill="#0051ff"/>
<rect x="802.7" y="279.9" width="6.5" height="6.5" fill="#004fff"/>
<rect x="808.7" y="279.9" width="6.5" height="6.5" fill="#004cff"/>
<rect x="814.7" y="279.9" width="6.5" height="6.5" fill="#004aff"/>
<rect x="820.7" y="279.9" width="6.5" height="6.5" fill="#0047ff"/>
<rect x="826.7" y="279.9" width="6.5" height="6.5" fill="#0045ff"/>
<rect x="832.7" y="279.9" width="6.5" height="6.5" fill="#0542ff"/>
<rect x="838.7" y="279.9" width="6.5" height="6.5" fill="#0d3fff"/>
<rect x="844.7" y="279.9" width="6.5" height="6.5" fill="#173cff"/>
<rect x="850.7" y="279.9" width="6.5" height="6.5" fill="#2339ff"/>
<rect x="856.7" y="279.9" width="6.5" height="6.5" fill="#3036ff"/>
<rect x="862.7" y="279.9" width="6.5" height="6.5" fill="#3e33ff"/>
<rect x="868.7" y="279.9" width="6.5" height="6.5" fill="#4e30ff"/>
<rect x="874.7" y="279.9" width="6.5" height="6.5" fill="#602dff"/>
<rect x="880.7" y="279.9" width="6.5" height="6.5" fill="#732aff"/>
<rect x="886.7" y="279.9" width="6.5" height="6.5" fill="#8827ff"/>
<rect x="892.7" y="279.9" width="6.5" height="6.5" fill="#9e23ff"/>
<rect x="898.7" y="279.9" width="6.5" height="6.5" fill="#b620ff"/>
<rect x="904.7" y="279.9" width="6.5" height="6.5" fill="#d01cff"/>
<rect x="910.7" y="279.9" width="6.5" height="6.5" fill="#ec19ff"/>
<rect x="916.7" y="279.9" width="6.5" height="6.5" fill="#ff14f5"/>
<rect x="922.7" y="279.9" width="6.5" height="6.5" fill="#ff0fda"/>
<rect x="928.7" y="279.9" width="6.5" height="6.5" fill="#ff0bc4"/>
<rect x="934.7" y="279.9" width="6.5" height="6.5" fill="#ff07b0"/>
<rect x="940.7" y="279.9" width="6.5" height="6.5" fill="#ff049f"/>
<rect x="946.7" y="279.9" width="6.5" height="6.5" fill="#ff0290"/>
<rect x="952.7" y="279.9" width="6.5" height="6.5" fill="#ff0082"/>
<rect x="958.7" y="279.9" width="6.5" height="6.5" fill="#ff0077"/>
<rect x="964.7" y="279.9" width="6.5" height="6.5" fill="#ff006c"/>
<rect x="970.7" y="279.9" width="6.5" height="6.5" fill="#ff0062"/>
<rect x="976.7" y="279.9" width="6.5" height="6.5" fill="#ff005a"/>
<rect x="982.7" y="279.9" width="6.5" height="6.5" fill="#ff0052"/>
<rect x="988.7" y="279.9" width="6.5" height="6.5" fill="#ff004b"/>
<rect x="994.7" y="279.9" width="6.5" height="6.5" fill="#ff0045"/>
<rect x="1000.7" y="279.9" width="6.5" height="6.5" fill="#ff003f"/>
<rect x="1006.7" y="279.9" width="6.5" height="6.5" fill="#ff003a"/>
<rect x="1012.7" y="279.9" width="6.5" height="6.5" fill="#ff0035"/>
<rect x="1018.7" y="279.9" width="6.5" height="6.5" fill="#ff0030"/>
<rect x="1024.7" y="279.9" width="6.5" height="6.5" fill="#ff002c"/>
<rect x="1030.7" y="279.9" width="6.5" height="6.5" fill="#ff0028"/>
<rect x="1036.7" y="279.9" width="6.5" height="6.5" fill="#ff0025"/>
<rect x="1042.7" y="279.9" width="6.5" height="6.5" fill="#ff0022"/>
<rect x="1048.7" y="279.9" width="6.5" height="6.5" fill="#ff001f"/>
<rect x="1054.7" y="279.9" width="6.5" height="6.5" fill="#ff001c"/>
<rect x="1060.7" y="279.9" width="6.5" height="6.5" fill="#ff0019"/>
<rect x="772.7" y="285.9" width="6.5" height="6.5" fill="#004dff"/>
<rect x="778.7" y="285.9" width="6.5" height="6.5" fill="#004aff"/>
<rect x="784.7" y="285.9" width="6.5" height="6.5" fill="#0048ff"/>
<rect x="790.7" y="285.9" width="6.5" height="6.5" fill="#0046ff"/>
<rect x="796.7" y="285.9" width="6.5" height="6.5" fill="#0044ff"/>
<rect x="802.7" y="285.9" width="6.5" height="6.5" fill="#0041ff"/>
<rect x="808.7" y="285.9" width="6.5" height="6.5" fill="#003fff"/>
<rect x="814.7" y="285.9" width="6.5" height="6.5" fill="#003cff"/>
<rect x="820.7" y="285.9" width="6.5" height="6.5" fill="#003aff"/>
<rect x="826.7" y="285.9" width="6.5" height="6.5" fill="#0037ff"/>
<rect x="832.7" y="285.9" width="6.5" height="6.5" fill="#0634ff"/>
<rect x="838.7" y="285.9" width="6.5" height="6.5" fill="#0f31ff"/>
<rect x="844.7" y="285.9" width="6.5" height="6.5" fill="#192fff"/>
<rect x="850.7" y="285.9" width="6.5" height="6.5" fill="#242cff"/>
<rect x="856.7" y="285.9" width="6.5" height="6.5" fill="#3129ff"/>
<rect x="862.7" y="285.9" width="6.5" height="6.5" fill="#4026ff"/>
<rect x="868.7" y="285.9" width="6.5" height="6.5" fill="#4f23ff"/>
<rect x="874.7" y="285.9" width="6.5" height="6.5" fill="#6020ff"/>
<rect x="880.7" y="285.9" width="6.5" height="6.5" fill="#731dff"/>
<rect x="886.7" y="285.9" width="6.5" height="6.5" fill="#8719ff"/>
<rect x="892.7" y="285.9" width="6.5" height="6.5" fill="#9c16ff"/>
<rect x="898.7" y="285.9" width="6.5" height="6.5" fill="#b313ff"/>
<rect x="904.7" y="285.9" width="6.5" height="6.5" fill="#cc10ff"/>
<rect x="910.7" y="285.9" width="6.5" height="6.5" fill="#e70cff"/>
<rect x="916.7" y="285.9" width="6.5" height="6.5" fill="#ff09fb"/>
<rect x="922.7" y="285.9" width="6.5" height="6.5" fill="#ff05e0"/>
<rect x="928.7" y="285.9" width="6.5" height="6.5" fill="#ff03c9"/>
<rect x="934.7" y="285.9" width="6.5" height="6.5" fill="#ff01b5"/>
<rect x="940.7" y="285.9" width="6.5" height="6.5" fill="#ff00a4"/>
<rect x="946.7" y="285.9" width="6.5" height="6.5" fill="#ff0095"/>
<rect x="952.7" y="285.9" width="6.5" height="6.5" fill="#ff0087"/>
<rect x="958.7" y="285.9" width="6.5" height="6.5" fill="#ff007b"/>
<rect x="964.7" y="285.9" width="6.5" height="6.5" fill="#ff0070"/>
<rect x="970.7" y="285.9" width="6.5" height="6.5" fill="#ff0067"/>
<rect x="976.7" y="285.9" width="6.5" height="6.5" fill="#ff005e"/>
<rect x="982.7" y="285.9" width="6.5" height="6.5" fill="#ff0056"/>
<rect x="988.7" y="285.9" width="6.5" height="6.5" fill="#ff004f"/>
<rect x="994.7" y="285.9" width="6.5" height="6.5" fill="#ff0049"/>
<rect x="1000.7" y="285.9" width="6.5" height="6.5" fill="#ff0043"/>
<rect x="1006.7" y="285.9" width="6.5" height="6.5" fill="#ff003d"/>
<rect x="1012.7" y="285.9" width="6.5" height="6.5" fill="#ff0038"/>
<rect x="1018.7" y="285.9" width="6.5" height="6.5" fill="#ff0034"/>
<rect x="1024.7" y="285.9" width="6.5" height="6.5" fill="#ff002f"/>
<rect x="1030.7" y="285.9" width="6.5" height="6.5" fill="#ff002b"/>
<rect x="1036.7" y="285.9" width="6.5" height="6.5" fill="#ff0028"/>
<rect x="1042.7" y="285.9" width="6.5" height="6.5" fill="#ff0024"/>
<rect x="772.7" y="291.9" width="6.5" height="6.5" fill="#0040ff"/>
<rect x="778.7" y="291.9" width="6.5" height="6.5" fill="#003eff"/>
<rect x="784.7" y="291.9" width="6.5" height="6.5" fill="#003cff"/>
<rect x="790.7" y="291.9" width="6.5" height="6.5" fill="#003aff"/>
<rect x="796.7" y="291.9" width="6.5" height="6.5" fill="#0037ff"/>
<rect x="802.7" y="291.9" width="6.5" height="6.5" fill="#0035ff"/>
<rect x="808.7" y="291.9" width="6.5" height="6.5" fill="#0032ff"/>
<rect x="814.7" y="291.9" width="6.5" height="6.5" fill="#0030ff"/>
<rect x="820.7" y="291.9" width="6.5" height="6.5" fill="#002dff"/>
<rect x="826.7" y="291.9" width="6.5" height="6.5" fill="#022bff"/>
<rect x="832.7" y="291.9" width="6.5" height="6.5" fill="#0828ff"/>
<rect x="838.7" y="291.9" width="6.5" height="6.5" fill="#1025ff"/>
<rect x="844.7" y="291.9" width="6.5" height="6.5" fill="#1a22ff"/>
<rect x="850.7" y="291.9" width="6.5" height="6.5" fill="#2620ff"/>
<rect x="856.7" y="291.9" width="6.5" height="6.5" fill="#331dff"/>
<rect x="862.7" y="291.9" width="6.5" height="6.5" fill="#411aff"/>
<rect x="868.7" y="291.9" width="6.5" height="6.5" fill="#5017ff"/>
<rect x="874.7" y="291.9" width="6.5" height="6.5" fill="#6014ff"/>
<rect x="880.7" y="291.9" width="6.5" height="6.5" fill="#7211ff"/>
<rect x="886.7" y="291.9" width="6.5" height="6.5" fill="#860eff"/>
<rect x="892.7" y="291.9" width="6.5" height="6.5" fill="#9a0bff"/>
<rect x="898.7" y="291.9" width="6.5" height="6.5" fill="#b108ff"/>
<rect x="904.7" y="291.9" width="6.5" height="6.5" fill="#c906ff"/>
<rect x="910.7" y="291.9" width="6.5" height="6.5" fill="#e203ff"/>
<rect x="916.7" y="291.9" width="6.5" height="6.5" fill="#fe01ff"/>
<rect x="922.7" y="291.9" width="6.5" height="6.5" fill="#ff00e6"/>
<rect x="928.7" y="291.9" width="6.5" height="6.5" fill="#ff00cf"/>
<rect x="934.7" y="291.9" width="6.5" height="6.5" fill="#ff00bb"/>
<rect x="940.7" y="291.9" width="6.5" height="6.5" fill="#ff00a9"/>
<rect x="946.7" y="291.9" width="6.5" height="6.5" fill="#ff009a"/>
<rect x="952.7" y="291.9" width="6.5" height="6.5" fill="#ff008c"/>
<rect x="958.7" y="291.9" width="6.5" height="6.5" fill="#ff0080"/>
<rect x="964.7" y="291.9" width="6.5" height="6.5" fill="#ff0075"/>
<rect x="970.7" y="291.9" width="6.5" height="6.5" fill="#ff006b"/>
<rect x="976.7" y="291.9" width="6.5" height="6.5" fill="#ff0062"/>
<rect x="982.7" y="291.9" width="6.5" height="6.5" fill="#ff005a"/>
<rect x="988.7" y="291.9" width="6.5" height="6.5" fill="#ff0053"/>
<rect x="994.7" y="291.9" width="6.5" height="6.5" fill="#ff004c"/>
<rect x="1000.7" y="291.9" width="6.5" height="6.5" fill="#ff0046"/>
<rect x="1006.7" y="291.9" width="6.5" height="6.5" fill="#ff0041"/>
<rect x="1012.7" y="291.9" width="6.5" height="6.5" fill="#ff003b"/>
<rect x="1018.7" y="291.9" width="6.5" height="6.5" fill="#ff0037"/>
<rect x="1024.7" y="291.9" width="6.5" height="6.5" fill="#ff0032"/>
<rect x="778.7" y="297.9" width="6.5" height="6.5" fill="#0033ff"/>
<rect x="784.7" y="297.9" width="6.5" height="6.5" fill="#0031ff"/>
<rect x="790.7" y="297.9" width="6.5" height="6.5" fill="#002eff"/>
<rect x="796.7" y="297.9" width="6.5" height="6.5" fill="#002cff"/>
<rect x="802.7" y="297.9" width="6.5" height="6.5" fill="#002aff"/>
<rect x="808.7" y="297.9" width="6.5" height="6.5" fill="#0027ff"/>
<rect x="814.7" y="297.9" width="6.5" height="6.5" fill="#0025ff"/>
<rect x="820.7" y="297.9" width="6.5" height="6.5" fill="#0022ff"/>
<rect x="826.7" y="297.9" width="6.5" height="6.5" fill="#0320ff"/>
<rect x="832.7" y="297.9" width="6.5" height="6.5" fill="#0a1dff"/>
<rect x="838.7" y="297.9" width="6.5" height="6.5" fill="#121aff"/>
<rect x="844.7" y="297.9" width="6.5" height="6.5" fill="#1c18ff"/>
<rect x="850.7" y="297.9" width="6.5" height="6.5" fill="#2715ff"/>
<rect x="856.7" y="297.9" width="6.5" height="6.5" fill="#3412ff"/>
<rect x="862.7" y="297.9" width="6.5" height="6.5" fill="#4210ff"/>
<rect x="868.7" y="297.9" width="6.5" height="6.5" fill="#500dff"/>
<rect x="874.7" y="297.9" width="6.5" height="6.5" fill="#610aff"/>
<rect x="880.7" y="297.9" width="6.5" height="6.5" fill="#7208ff"/>
<rect x="886.7" y="297.9" width="6.5" height="6.5" fill="#8505ff"/>
<rect x="892.7" y="297.9" width="6.5" height="6.5" fill="#9903ff"/>
<rect x="898.7" y="297.9" width="6.5" height="6.5" fill="#ae01ff"/>
<rect x="904.7" y="297.9" width="6.5" height="6.5" fill="#c500ff"/>
<rect x="910.7" y="297.9" width="6.5" height="6.5" fill="#de00ff"/>
<rect x="916.7" y="297.9" width="6.5" height="6.5" fill="#f800ff"/>
<rect x="922.7" y="297.9" width="6.5" height="6.5" fill="#ff00eb"/>
<rect x="928.7" y="297.9" width="6.5" height="6.5" fill="#ff00d4"/>
<rect x="934.7" y="297.9" width="6.5" height="6.5" fill="#ff00c0"/>
<rect x="940.7" y="297.9" width="6.5" height="6.5" fill="#ff00ae"/>
<rect x="946.7" y="297.9" width="6.5" height="6.5" fill="#ff009f"/>
<rect x="952.7" y="297.9" width="6.5" height="6.5" fill="#ff0091"/>
<rect x="958.7" y="297.9" width="6.5" height="6.5" fill="#ff0085"/>
<rect x="964.7" y="297.9" width="6.5" height="6.5" fill="#ff0079"/>
<rect x="970.7" y="297.9" width="6.5" height="6.5" fill="#ff006f"/>
<rect x="976.7" y="297.9" width="6.5" height="6.5" fill="#ff0066"/>
<rect x="982.7" y="297.9" width="6.5" height="6.5" fill="#ff005e"/>
<rect x="988.7" y="297.9" width="6.5" height="6.5" fill="#ff0057"/>
<rect x="994.7" y="297.9" width="6.5" height="6.5" fill="#ff0050"/>
<rect x="1000.7" y="297.9" width="6.5" height="6.5" fill="#ff004a"/>
<rect x="1006.7" y="297.9" width="6.5" height="6.5" fill="#ff0044"/>
<rect x="778.7" y="303.9" width="6.5" height="6.5" fill="#0029ff"/>
<rect x="784.7" y="303.9" width="6.5" height="6.5" fill="#0026ff"/>
<rect x="790.7" y="303.9" width="6.5" height="6.5" fill="#0024ff"/>
<rect x="796.7" y="303.9" width="6.5" height="6.5" fill="#0022ff"/>
<rect x="802.7" y="303.9" width="6.5" height="6.5" fill="#0020ff"/>
<rect x="808.7" y="303.9" width="6.5" height="6.5" fill="#001dff"/>
<rect x="814.7" y="303.9" width="6.5" height="6.5" fill="#001bff"/>
<rect x="820.7" y="303.9" width="6.5" height="6.5" fill="#0018ff"/>
<rect x="826.7" y="303.9" width="6.5" height="6.5" fill="#0416ff"/>
<rect x="832.7" y="303.9" width="6.5" height="6.5" fill="#0b13ff"/>
<rect x="838.7" y="303.9" width="6.5" height="6.5" fill="#1411ff"/>
<rect x="844.7" y="303.9" width="6.5" height="6.5" fill="#1e0eff"/>
<rect x="850.7" y="303.9" width="6.5" height="6.5" fill="#290cff"/>
<rect x="856.7" y="303.9" width="6.5" height="6.5" fill="#350aff"/>
<rect x="862.7" y="303.9" width="6.5" height="6.5" fill="#4307ff"/>
<rect x="868.7" y="303.9" width="6.5" height="6.5" fill="#5105ff"/>
<rect x="874.7" y="303.9" width="6.5" height="6.5" fill="#6103ff"/>
<rect x="880.7" y="303.9" width="6.5" height="6.5" fill="#7201ff"/>
<rect x="886.7" y="303.9" width="6.5" height="6.5" fill="#8400ff"/>
<rect x="892.7" y="303.9" width="6.5" height="6.5" fill="#9700ff"/>
<rect x="898.7" y="303.9" width="6.5" height="6.5" fill="#ac00ff"/>
<rect x="904.7" y="303.9" width="6.5" height="6.5" fill="#c200ff"/>
<rect x="910.7" y="303.9" width="6.5" height="6.5" fill="#da00ff"/>
<rect x="916.7" y="303.9" width="6.5" height="6.5" fill="#f300ff"/>
<rect x="922.7" y="303.9" width="6.5" height="6.5" fill="#ff00f0"/>
<rect x="928.7" y="303.9" width="6.5" height="6.5" fill="#ff00d9"/>
<rect x="934.7" y="303.9" width="6.5" height="6.5" fill="#ff00c5"/>
<rect x="940.7" y="303.9" width="6.5" height="6.5" fill="#ff00b3"/>
<rect x="946.7" y="303.9" width="6.5" height="6.5" fill="#ff00a4"/>
<rect x="952.7" y="303.9" width="6.5" height="6.5" fill="#ff0096"/>
<rect x="958.7" y="303.9" width="6.5" height="6.5" fill="#ff0089"/>
<rect x="964.7" y="303.9" width="6.5" height="6.5" fill="#ff007e"/>
<rect x="970.7" y="303.9" width="6.5" height="6.5" fill="#ff0074"/>
<rect x="976.7" y="303.9" width="6.5" height="6.5" fill="#ff006a"/>
<rect x="982.7" y="303.9" width="6.5" height="6.5" fill="#ff0062"/>
<rect x="988.7" y="303.9" width="6.5" height="6.5" fill="#ff005b"/>
<rect x="784.7" y="309.9" width="6.5" height="6.5" fill="#001dff"/>
<rect x="790.7" y="309.9" width="6.5" height="6.5" fill="#001bff"/>
<rect x="796.7" y="309.9" width="6.5" height="6.5" fill="#0019ff"/>
<rect x="802.7" y="309.9" width="6.5" height="6.5" fill="#0017ff"/>
<rect x="808.7" y="309.9" width="6.5" height="6.5" fill="#0014ff"/>
<rect x="814.7" y="309.9" width="6.5" height="6.5" fill="#0012ff"/>
<rect x="820.7" y="309.9" width="6.5" height="6.5" fill="#0010ff"/>
<rect x="826.7" y="309.9" width="6.5" height="6.5" fill="#060dff"/>
<rect x="832.7" y="309.9" width="6.5" height="6.5" fill="#0d0bff"/>
<rect x="838.7" y="309.9" width="6.5" height="6.5" fill="#1609ff"/>
<rect x="844.7" y="309.9" width="6.5" height="6.5" fill="#1f07ff"/>
<rect x="850.7" y="309.9" width="6.5" height="6.5" fill="#2a05ff"/>
<rect x="856.7" y="309.9" width="6.5" height="6.5" fill="#3603ff"/>
<rect x="862.7" y="309.9" width="6.5" height="6.5" fill="#4301ff"/>
<rect x="868.7" y="309.9" width="6.5" height="6.5" fill="#5200ff"/>
<rect x="874.7" y="309.9" width="6.5" height="6.5" fill="#6100ff"/>
<rect x="880.7" y="309.9" width="6.5" height="6.5" fill="#7100ff"/>
<rect x="886.7" y="309.9" width="6.5" height="6.5" fill="#8300ff"/>
<rect x="892.7" y="309.9" width="6.5" height="6.5" fill="#9600ff"/>
<rect x="898.7" y="309.9" width="6.5" height="6.5" fill="#aa00ff"/>
<rect x="904.7" y="309.9" width="6.5" height="6.5" fill="#c000ff"/>
<rect x="910.7" y="309.9" width="6.5" height="6.5" fill="#d600ff"/>
<rect x="916.7" y="309.9" width="6.5" height="6.5" fill="#ef00ff"/>
<rect x="922.7" y="309.9" width="6.5" height="6.5" fill="#ff00f6"/>
<rect x="928.7" y="309.9" width="6.5" height="6.5" fill="#ff00de"/>
<rect x="934.7" y="309.9" width="6.5" height="6.5" fill="#ff00ca"/>
<rect x="940.7" y="309.9" width="6.5" height="6.5" fill="#ff00b8"/>
<rect x="946.7" y="309.9" width="6.5" height="6.5" fill="#ff00a8"/>
<rect x="952.7" y="309.9" width="6.5" height="6.5" fill="#ff009a"/>
<rect x="958.7" y="309.9" width="6.5" height="6.5" fill="#ff008e"/>
<rect x="964.7" y="309.9" width="6.5" height="6.5" fill="#ff0082"/>
<rect x="970.7" y="309.9" width="6.5" height="6.5" fill="#ff0078"/>
<rect x="784.7" y="315.9" width="6.5" height="6.5" fill="#0015ff"/>
<rect x="790.7" y="315.9" width="6.5" height="6.5" fill="#0013ff"/>
<rect x="796.7" y="315.9" width="6.5" height="6.5" fill="#0011ff"/>
<rect x="802.7" y="315.9" width="6.5" height="6.5" fill="#000fff"/>
<rect x="808.7" y="315.9" width="6.5" height="6.5" fill="#000dff"/>
<rect x="814.7" y="315.9" width="6.5" height="6.5" fill="#000bff"/>
<rect x="820.7" y="315.9" width="6.5" height="6.5" fill="#0108ff"/>
<rect x="826.7" y="315.9" width="6.5" height="6.5" fill="#0706ff"/>
<rect x="832.7" y="315.9" width="6.5" height="6.5" fill="#0e05ff"/>
<rect x="838.7" y="315.9" width="6.5" height="6.5" fill="#1703ff"/>
<rect x="844.7" y="315.9" width="6.5" height="6.5" fill="#2101ff"/>
<rect x="850.7" y="315.9" width="6.5" height="6.5" fill="#2c00ff"/>
<rect x="856.7" y="315.9" width="6.5" height="6.5" fill="#3700ff"/>
<rect x="862.7" y="315.9" width="6.5" height="6.5" fill="#4400ff"/>
<rect x="868.7" y="315.9" width="6.5" height="6.5" fill="#5200ff"/>
<rect x="874.7" y="315.9" width="6.5" height="6.5" fill="#6100ff"/>
<rect x="880.7" y="315.9" width="6.5" height="6.5" fill="#7100ff"/>
<rect x="886.7" y="315.9" width="6.5" height="6.5" fill="#8200ff"/>
<rect x="892.7" y="315.9" width="6.5" height="6.5" fill="#9500ff"/>
<rect x="898.7" y="315.9" width="6.5" height="6.5" fill="#a800ff"/>
<rect x="904.7" y="315.9" width="6.5" height="6.5" fill="#bd00ff"/>
<rect x="910.7" y="315.9" width="6.5" height="6.5" fill="#d300ff"/>
<rect x="916.7" y="315.9" width="6.5" height="6.5" fill="#ea00ff"/>
<rect x="922.7" y="315.9" width="6.5" height="6.5" fill="#ff00fb"/>
<rect x="928.7" y="315.9" width="6.5" height="6.5" fill="#ff00e3"/>
<rect x="934.7" y="315.9" width="6.5" height="6.5" fill="#ff00cf"/>
<rect x="940.7" y="315.9" width="6.5" height="6.5" fill="#ff00bd"/>
<rect x="946.7" y="315.9" width="6.5" height="6.5" fill="#ff00ad"/>
<rect x="952.7" y="315.9" width="6.5" height="6.5" fill="#ff009f"/>
<rect x="790.7" y="321.9" width="6.5" height="6.5" fill="#000cff"/>
<rect x="796.7" y="321.9" width="6.5" height="6.5" fill="#000aff"/>
<rect x="802.7" y="321.9" width="6.5" height="6.5" fill="#0008ff"/>
<rect x="808.7" y="321.9" width="6.5" height="6.5" fill="#0006ff"/>
<rect x="814.7" y="321.9" width="6.5" height="6.5" fill="#0004ff"/>
<rect x="820.7" y="321.9" width="6.5" height="6.5" fill="#0303ff"/>
<rect x="826.7" y="321.9" width="6.5" height="6.5" fill="#0901ff"/>
<rect x="832.7" y="321.9" width="6.5" height="6.5" fill="#1000ff"/>
<rect x="838.7" y="321.9" width="6.5" height="6.5" fill="#1900ff"/>
<rect x="844.7" y="321.9" width="6.5" height="6.5" fill="#2200ff"/>
<rect x="850.7" y="321.9" width="6.5" height="6.5" fill="#2d00ff"/>
<rect x="856.7" y="321.9" width="6.5" height="6.5" fill="#3900ff"/>
<rect x="862.7" y="321.9" width="6.5" height="6.5" fill="#4500ff"/>
<rect x="868.7" y="321.9" width="6.5" height="6.5" fill="#5300ff"/>
<rect x="874.7" y="321.9" width="6.5" height="6.5" fill="#6100ff"/>
<rect x="880.7" y="321.9" width="6.5" height="6.5" fill="#7100ff"/>
<rect x="886.7" y="321.9" width="6.5" height="6.5" fill="#8200ff"/>
<rect x="892.7" y="321.9" width="6.5" height="6.5" fill="#9300ff"/>
<rect x="898.7" y="321.9" width="6.5" height="6.5" fill="#a600ff"/>
<rect x="904.7" y="321.9" width="6.5" height="6.5" fill="#ba00ff"/>
<rect x="910.7" y="321.9" width="6.5" height="6.5" fill="#d000ff"/>
<rect x="916.7" y="321.9" width="6.5" height="6.5" fill="#e600ff"/>
<rect x="922.7" y="321.9" width="6.5" height="6.5" fill="#fe00ff"/>
<rect x="928.7" y="321.9" width="6.5" height="6.5" fill="#ff00e8"/>
<rect x="934.7" y="321.9" width="6.5" height="6.5" fill="#ff00d4"/>
<rect x="790.7" y="327.9" width="6.5" height="6.5" fill="#0006ff"/>
<rect x="796.7" y="327.9" width="6.5" height="6.5" fill="#0004ff"/>
<rect x="802.7" y="327.9" width="6.5" height="6.5" fill="#0003ff"/>
<rect x="808.7" y="327.9" width="6.5" height="6.5" fill="#0001ff"/>
<rect x="814.7" y="327.9" width="6.5" height="6.5" fill="#0000ff"/>
<rect x="820.7" y="327.9" width="6.5" height="6.5" fill="#0400ff"/>
<rect x="826.7" y="327.9" width="6.5" height="6.5" fill="#0a00ff"/>
<rect x="832.7" y="327.9" width="6.5" height="6.5" fill="#1200ff"/>
<rect x="838.7" y="327.9" width="6.5" height="6.5" fill="#1a00ff"/>
<rect x="844.7" y="327.9" width="6.5" height="6.5" fill="#2400ff"/>
<rect x="850.7" y="327.9" width="6.5" height="6.5" fill="#2e00ff"/>
<rect x="856.7" y="327.9" width="6.5" height="6.5" fill="#3a00ff"/>
<rect x="862.7" y="327.9" width="6.5" height="6.5" fill="#4600ff"/>
<rect x="868.7" y="327.9" width="6.5" height="6.5" fill="#5300ff"/>
<rect x="874.7" y="327.9" width="6.5" height="6.5" fill="#6100ff"/>
<rect x="880.7" y="327.9" width="6.5" height="6.5" fill="#7100ff"/>
<rect x="886.7" y="327.9" width="6.5" height="6.5" fill="#8100ff"/>
<rect x="892.7" y="327.9" width="6.5" height="6.5" fill="#9200ff"/>
<rect x="898.7" y="327.9" width="6.5" height="6.5" fill="#a400ff"/>
<rect x="904.7" y="327.9" width="6.5" height="6.5" fill="#b800ff"/>
<rect x="910.7" y="327.9" width="6.5" height="6.5" fill="#cd00ff"/>
<rect x="916.7" y="327.9" width="6.5" height="6.5" fill="#e200ff"/>
<rect x="796.7" y="333.9" width="6.5" height="6.5" fill="#0000ff"/>
<rect x="802.7" y="333.9" width="6.5" height="6.5" fill="#0000ff"/>
<rect x="808.7" y="333.9" width="6.5" height="6.5" fill="#0000ff"/>
<rect x="814.7" y="333.9" width="6.5" height="6.5" fill="#0100ff"/>
<rect x="820.7" y="333.9" width="6.5" height="6.5" fill="#0500ff"/>
<rect x="826.7" y="333.9" width="6.5" height="6.5" fill="#0b00ff"/>
<rect x="832.7" y="333.9" width="6.5" height="6.5" fill="#1300ff"/>
<rect x="838.7" y="333.9" width="6.5" height="6.5" fill="#1c00ff"/>
<rect x="844.7" y="333.9" width="6.5" height="6.5" fill="#2500ff"/>
<rect x="850.7" y="333.9" width="6.5" height="6.5" fill="#2f00ff"/>
<rect x="856.7" y="333.9" width="6.5" height="6.5" fill="#3b00ff"/>
<rect x="862.7" y="333.9" width="6.5" height="6.5" fill="#4700ff"/>
<rect x="868.7" y="333.9" width="6.5" height="6.5" fill="#5400ff"/>
<rect x="874.7" y="333.9" width="6.5" height="6.5" fill="#6200ff"/>
<rect x="880.7" y="333.9" width="6.5" height="6.5" fill="#7000ff"/>
<rect x="886.7" y="333.9" width="6.5" height="6.5" fill="#8000ff"/>
<rect x="892.7" y="333.9" width="6.5" height="6.5" fill="#9100ff"/>
<rect x="898.7" y="333.9" width="6.5" height="6.5" fill="#a300ff"/>
<rect x="802.7" y="339.9" width="6.5" height="6.5" fill="#0000ff"/>
<rect x="808.7" y="339.9" width="6.5" height="6.5" fill="#0000ff"/>
<rect x="814.7" y="339.9" width="6.5" height="6.5" fill="#0100ff"/>
<rect x="820.7" y="339.9" width="6.5" height="6.5" fill="#0600ff"/>
<rect x="826.7" y="339.9" width="6.5" height="6.5" fill="#0d00ff"/>
<rect x="832.7" y="339.9" width="6.5" height="6.5" fill="#1400ff"/>
<rect x="838.7" y="339.9" width="6.5" height="6.5" fill="#1d00ff"/>
<rect x="844.7" y="339.9" width="6.5" height="6.5" fill="#2600ff"/>
<rect x="850.7" y="339.9" width="6.5" height="6.5" fill="#3000ff"/>
<rect x="856.7" y="339.9" width="6.5" height="6.5" fill="#3c00ff"/>
<rect x="862.7" y="339.9" width="6.5" height="6.5" fill="#4700ff"/>
<rect x="868.7" y="339.9" width="6.5" height="6.5" fill="#5400ff"/>
<rect x="874.7" y="339.9" width="6.5" height="6.5" fill="#6200ff"/>
<rect x="880.7" y="339.9" width="6.5" height="6.5" fill="#7000ff"/>
<rect x="808.7" y="345.9" width="6.5" height="6.5" fill="#0000ff"/>
<rect x="814.7" y="345.9" width="6.5" height="6.5" fill="#0200ff"/>
<rect x="820.7" y="345.9" width="6.5" height="6.5" fill="#0800ff"/>
<rect x="826.7" y="345.9" width="6.5" height="6.5" fill="#0e00ff"/>
<rect x="832.7" y="345.9" width="6.5" height="6.5" fill="#1600ff"/>
<rect x="838.7" y="345.9" width="6.5" height="6.5" fill="#1e00ff"/>
<rect x="844.7" y="345.9" width="6.5" height="6.5" fill="#2800ff"/>
<rect x="850.7" y="345.9" width="6.5" height="6.5" fill="#3200ff"/>
<rect x="856.7" y="345.9" width="6.5" height="6.5" fill="#3c00ff"/>
<rect x="862.7" y="345.9" width="6.5" height="6.5" fill="#4800ff"/>
<rect x="820.7" y="351.9" width="6.5" height="6.5" fill="#0900ff"/>
<rect x="826.7" y="351.9" width="6.5" height="6.5" fill="#1000ff"/>
<rect x="832.7" y="351.9" width="6.5" height="6.5" fill="#1700ff"/>
<rect x="838.7" y="351.9" width="6.5" height="6.5" fill="#1f00ff"/>
<rect x="844.7" y="351.9" width="6.5" height="6.5" fill="#2900ff"/>
</g></g>
<defs><linearGradient id="dim" gradientUnits="userSpaceOnUse" x1="0" y1="40" x2="0" y2="355"><stop offset="0" stop-color="#000" stop-opacity="0.40"/><stop offset="0.45" stop-color="#000" stop-opacity="0.38"/><stop offset="1" stop-color="#000" stop-opacity="0.24"/></linearGradient></defs>
<path d="M831.2 353.1 L831.1 353.1 L830.9 353.1 L830.8 353.1 L830.6 353.2 L830.3 353.2 L830.1 353.2 L829.7 353.2 L829.2 353.0 L828.5 352.7 L827.7 352.3 L826.6 351.6 L825.2 350.7 L823.5 349.6 L821.0 348.1 L818.0 346.2 L814.2 343.5 L811.7 341.6 L809.5 339.6 L806.2 336.2 L803.2 332.7 L800.4 329.1 L797.8 325.4 L795.3 321.6 L793.2 318.1 L791.1 314.6 L789.2 311.1 L787.3 307.6 L785.4 304.1 L783.2 299.8 L781.1 295.5 L779.0 291.2 L777.0 286.9 L775.0 282.5 L773.1 278.1 L771.5 274.2 L770.0 270.2 L768.5 266.2 L767.0 262.2 L765.7 258.2 L764.3 254.2 L763.0 250.2 L761.7 246.2 L760.5 242.2 L759.2 237.7 L757.9 233.3 L756.6 228.8 L755.3 224.3 L754.1 219.8 L753.0 215.3 L751.8 210.8 L750.7 206.3 L749.7 201.8 L748.6 197.3 L747.7 193.0 L746.8 188.7 L745.9 184.3 L745.1 180.0 L744.3 175.6 L743.5 171.3 L742.8 166.9 L742.1 162.6 L741.5 158.2 L740.9 153.8 L740.3 149.4 L739.8 145.0 L739.4 140.6 L738.9 136.1 L738.6 131.7 L738.3 127.2 L738.1 122.8 L737.9 118.3 L737.9 113.9 L737.9 109.5 L738.0 105.0 L738.2 100.5 L738.6 95.9 L739.0 91.3 L739.6 86.8 L740.4 82.2 L741.2 77.7 L742.3 73.1 L743.5 68.5 L744.7 64.3 L746.2 60.1 L748.1 55.9 L750.5 51.9 L753.5 48.1 L757.2 44.6 L761.4 41.6 L766.1 39.1 L771.3 37.2 L776.8 36.1 L782.3 36.0 L787.9 36.6 L793.4 37.6 L798.7 39.1 L804.5 40.8 L810.0 42.7 L815.4 44.7 L820.7 46.8 L826.0 49.0 L831.2 51.3 L836.4 53.7 L841.4 56.1 L846.5 58.6 L851.5 61.2 L856.5 63.8 L861.3 66.5 L866.3 69.3 L871.2 72.1 L876.1 75.0 L881.0 77.9 L884.9 80.3 L888.8 82.7 L892.7 85.2 L896.5 87.6 L900.4 90.1 L904.3 92.6 L908.1 95.2 L912.0 97.7 L915.8 100.3 L919.7 102.8 L923.6 105.4 L927.5 108.0 L931.3 110.7 L935.2 113.3 L939.1 115.9 L942.9 118.6 L946.8 121.2 L950.6 123.9 L954.5 126.5 L958.3 129.2 L962.2 131.9 L966.0 134.5 L969.8 137.2 L973.7 139.8 L977.5 142.5 L981.3 145.1 L985.0 147.7 L988.8 150.4 L992.5 153.0 L996.3 155.6 L1000.8 158.8 L1005.4 162.0 L1010.0 165.2 L1014.5 168.4 L1018.9 171.5 L1023.3 174.5 L1027.6 177.6 L1032.0 180.6 L1036.1 183.5 L1040.2 186.4 L1044.3 189.3 L1048.5 192.1 L1052.2 194.8 L1056.0 197.4 L1059.7 200.0 L1063.4 202.7 L1067.8 205.7 L1072.1 208.8 L1076.5 211.8 L1080.3 214.5 L1084.1 217.2 L1088.0 219.8 L1091.1 222.0 L1094.3 224.2 L1097.5 226.5 L1101.4 229.2 L1105.2 231.9 L1108.3 234.1 L1111.4 236.2 L1113.9 237.9 L1116.3 239.7 L1120.3 242.4 L1123.6 244.8 L1126.3 246.7 L1128.4 248.1 L1130.1 249.3 L1132.2 250.8 L1134.1 252.1 L1134.6 254.0 Z M1104.7 232.4 L880.1 91.7 L817.9 331.4 Z" fill="url(#dim)" fill-rule="evenodd"/>
<path d="M736.7 355.1 V33.9 H1192.3 V355.1" fill="none" stroke="#a4a4a4" stroke-width="1"/>
<path d="M736.2 355.1 H1192.8" fill="none" stroke="#b4b4b4" stroke-width="1"/>
<rect x="736.1" y="355.1" width="1.2" height="4.2" fill="#b8b8b8"/>
<text x="736.7" y="369.7" font-size="8.8" text-anchor="middle" fill="#e0e0e0" textLength="5.6" lengthAdjust="spacingAndGlyphs">0</text>
<text x="731.7" y="360.1" font-size="8.8" text-anchor="end" fill="#e0e0e0" textLength="5.6" lengthAdjust="spacingAndGlyphs">0</text>
<rect x="790.2" y="355.1" width="1.2" height="4.2" fill="#b8b8b8"/>
<text x="790.8" y="369.7" font-size="8.8" text-anchor="middle" fill="#e0e0e0" textLength="14.1" lengthAdjust="spacingAndGlyphs">0.1</text>
<rect x="732.2" y="316.6" width="4.5" height="1" fill="#b8b8b8"/>
<text x="731.7" y="320.2" font-size="8.8" text-anchor="end" fill="#e0e0e0" textLength="14.1" lengthAdjust="spacingAndGlyphs">0.1</text>
<rect x="844.3" y="355.1" width="1.2" height="4.2" fill="#b8b8b8"/>
<text x="844.9" y="369.7" font-size="8.8" text-anchor="middle" fill="#e0e0e0" textLength="14.1" lengthAdjust="spacingAndGlyphs">0.2</text>
<rect x="732.2" y="278.5" width="4.5" height="1" fill="#b8b8b8"/>
<text x="731.7" y="282.2" font-size="8.8" text-anchor="end" fill="#e0e0e0" textLength="14.1" lengthAdjust="spacingAndGlyphs">0.2</text>
<rect x="898.5" y="355.1" width="1.2" height="4.2" fill="#b8b8b8"/>
<text x="899.1" y="369.7" font-size="8.8" text-anchor="middle" fill="#e0e0e0" textLength="14.1" lengthAdjust="spacingAndGlyphs">0.3</text>
<rect x="732.2" y="240.5" width="4.5" height="1" fill="#b8b8b8"/>
<text x="731.7" y="244.2" font-size="8.8" text-anchor="end" fill="#e0e0e0" textLength="14.1" lengthAdjust="spacingAndGlyphs">0.3</text>
<rect x="952.6" y="355.1" width="1.2" height="4.2" fill="#b8b8b8"/>
<text x="953.2" y="369.7" font-size="8.8" text-anchor="middle" fill="#e0e0e0" textLength="14.1" lengthAdjust="spacingAndGlyphs">0.4</text>
<rect x="732.2" y="202.4" width="4.5" height="1" fill="#b8b8b8"/>
<text x="731.7" y="206.1" font-size="8.8" text-anchor="end" fill="#e0e0e0" textLength="14.1" lengthAdjust="spacingAndGlyphs">0.4</text>
<rect x="1006.7" y="355.1" width="1.2" height="4.2" fill="#b8b8b8"/>
<text x="1007.3" y="369.7" font-size="8.8" text-anchor="middle" fill="#e0e0e0" textLength="14.1" lengthAdjust="spacingAndGlyphs">0.5</text>
<rect x="732.2" y="164.4" width="4.5" height="1" fill="#b8b8b8"/>
<text x="731.7" y="168.1" font-size="8.8" text-anchor="end" fill="#e0e0e0" textLength="14.1" lengthAdjust="spacingAndGlyphs">0.5</text>
<rect x="1060.8" y="355.1" width="1.2" height="4.2" fill="#b8b8b8"/>
<text x="1061.4" y="369.7" font-size="8.8" text-anchor="middle" fill="#e0e0e0" textLength="14.1" lengthAdjust="spacingAndGlyphs">0.6</text>
<rect x="732.2" y="126.3" width="4.5" height="1" fill="#b8b8b8"/>
<text x="731.7" y="130.0" font-size="8.8" text-anchor="end" fill="#e0e0e0" textLength="14.1" lengthAdjust="spacingAndGlyphs">0.6</text>
<rect x="1114.9" y="355.1" width="1.2" height="4.2" fill="#b8b8b8"/>
<text x="1115.5" y="369.7" font-size="8.8" text-anchor="middle" fill="#e0e0e0" textLength="14.1" lengthAdjust="spacingAndGlyphs">0.7</text>
<rect x="732.2" y="88.3" width="4.5" height="1" fill="#b8b8b8"/>
<text x="731.7" y="92.0" font-size="8.8" text-anchor="end" fill="#e0e0e0" textLength="14.1" lengthAdjust="spacingAndGlyphs">0.7</text>
<rect x="1169.1" y="355.1" width="1.2" height="4.2" fill="#b8b8b8"/>
<text x="1169.7" y="369.7" font-size="8.8" text-anchor="middle" fill="#e0e0e0" textLength="14.1" lengthAdjust="spacingAndGlyphs">0.8</text>
<rect x="732.2" y="50.2" width="4.5" height="1" fill="#b8b8b8"/>
<text x="731.7" y="53.9" font-size="8.8" text-anchor="end" fill="#e0e0e0" textLength="14.1" lengthAdjust="spacingAndGlyphs">0.8</text>
<rect x="901.2" y="224.3" width="9.4" height="9.4" fill="none" stroke="#111" stroke-width="1.3" stroke-opacity="0.92"/>
<rect x="948.8" y="212.8" width="9.4" height="9.4" fill="none" stroke="#f0f0f0" stroke-width="1.3" stroke-opacity="0.92"/>
<rect x="937.4" y="214.7" width="9.4" height="9.4" fill="none" stroke="#f0f0f0" stroke-width="1.3" stroke-opacity="0.92"/>
<rect x="866.9" y="247.3" width="9.4" height="9.4" fill="none" stroke="#f0f0f0" stroke-width="1.3" stroke-opacity="0.92"/>
<rect x="914.4" y="186.9" width="9.4" height="9.4" fill="none" stroke="#f0f0f0" stroke-width="1.3" stroke-opacity="0.92"/>
<rect x="876.7" y="252.8" width="9.4" height="9.4" fill="none" stroke="#f0f0f0" stroke-width="1.3" stroke-opacity="0.92"/>
<rect x="873.6" y="213.9" width="9.4" height="9.4" fill="none" stroke="#f0f0f0" stroke-width="1.3" stroke-opacity="0.92"/>
<rect x="1008.4" y="195.5" width="9.4" height="9.4" fill="none" stroke="#f0f0f0" stroke-width="1.3" stroke-opacity="0.92"/>
<rect x="848.4" y="275.3" width="9.4" height="9.4" fill="none" stroke="#f0f0f0" stroke-width="1.3" stroke-opacity="0.92"/>
<rect x="978.8" y="229.6" width="9.4" height="9.4" fill="none" stroke="#f0f0f0" stroke-width="1.3" stroke-opacity="0.92"/>
<rect x="886.2" y="263.9" width="9.4" height="9.4" fill="none" stroke="#f0f0f0" stroke-width="1.3" stroke-opacity="0.92"/>
<rect x="935.0" y="160.8" width="9.4" height="9.4" fill="none" stroke="#f0f0f0" stroke-width="1.3" stroke-opacity="0.92"/>
<rect x="986.4" y="180.2" width="9.4" height="9.4" fill="none" stroke="#f0f0f0" stroke-width="1.3" stroke-opacity="0.92"/>
<rect x="835.9" y="294.3" width="9.4" height="9.4" fill="none" stroke="#f0f0f0" stroke-width="1.3" stroke-opacity="0.92"/>
<rect x="897.6" y="163.1" width="9.4" height="9.4" fill="none" stroke="#f0f0f0" stroke-width="1.3" stroke-opacity="0.92"/>
<rect x="1023.7" y="227.4" width="9.4" height="9.4" fill="none" stroke="#f0f0f0" stroke-width="1.3" stroke-opacity="0.92"/>
<rect x="973.4" y="167.6" width="9.4" height="9.4" fill="none" stroke="#f0f0f0" stroke-width="1.3" stroke-opacity="0.92"/>
<rect x="933.3" y="255.5" width="9.4" height="9.4" fill="none" stroke="#f0f0f0" stroke-width="1.3" stroke-opacity="0.92"/>
<rect x="838.6" y="246.8" width="9.4" height="9.4" fill="none" stroke="#f0f0f0" stroke-width="1.3" stroke-opacity="0.92"/>
<circle cx="903.3" cy="230.9" r="2.9" fill="#9a9a9a" stroke="#1a1a1a" stroke-width="1"/>
<circle cx="952.3" cy="217.3" r="2.9" fill="#73625c" stroke="#1a1a1a" stroke-width="1"/>
<circle cx="936.5" cy="219.8" r="2.9" fill="#9c867d" stroke="#1a1a1a" stroke-width="1"/>
<circle cx="869.9" cy="255.2" r="2.9" fill="#758093" stroke="#1a1a1a" stroke-width="1"/>
<circle cx="920.5" cy="192.3" r="2.9" fill="#636e58" stroke="#1a1a1a" stroke-width="1"/>
<circle cx="880.4" cy="258.8" r="2.9" fill="#828096" stroke="#1a1a1a" stroke-width="1"/>
<circle cx="877.9" cy="220.2" r="2.9" fill="#70968d" stroke="#1a1a1a" stroke-width="1"/>
<circle cx="1012.2" cy="197.9" r="2.9" fill="#a37754" stroke="#1a1a1a" stroke-width="1"/>
<circle cx="850.9" cy="281.9" r="2.9" fill="#636c8d" stroke="#1a1a1a" stroke-width="1"/>
<circle cx="981.3" cy="235.9" r="2.9" fill="#96656c" stroke="#1a1a1a" stroke-width="1"/>
<circle cx="887.7" cy="272.4" r="2.9" fill="#6a5872" stroke="#1a1a1a" stroke-width="1"/>
<circle cx="939.1" cy="167.8" r="2.9" fill="#8b9661" stroke="#1a1a1a" stroke-width="1"/>
<circle cx="989.4" cy="185.3" r="2.9" fill="#a78b56" stroke="#1a1a1a" stroke-width="1"/>
<circle cx="837.9" cy="301.7" r="2.9" fill="#585c88" stroke="#1a1a1a" stroke-width="1"/>
<circle cx="902.3" cy="170.0" r="2.9" fill="#638665" stroke="#1a1a1a" stroke-width="1"/>
<circle cx="1027.3" cy="233.2" r="2.9" fill="#91585c" stroke="#1a1a1a" stroke-width="1"/>
<circle cx="976.5" cy="173.1" r="2.9" fill="#a99c58" stroke="#1a1a1a" stroke-width="1"/>
<circle cx="932.6" cy="262.1" r="2.9" fill="#966588" stroke="#1a1a1a" stroke-width="1"/>
<circle cx="848.2" cy="253.7" r="2.9" fill="#518291" stroke="#1a1a1a" stroke-width="1"/>
<circle cx="879.3" cy="254.7" r="2.9" fill="#050505" stroke="#1a1a1a" stroke-width="1"/>
<defs><clipPath id="ic"><rect x="1055.1" y="38.8" width="132.0" height="95.10000000000001"/></clipPath></defs>
<g clip-path="url(#ic)"><g filter="url(#bl)">
<rect x="1043.1" y="26.8" width="6.5" height="6.5" fill="#7fffc0"/>
<rect x="1049.1" y="26.8" width="6.5" height="6.5" fill="#84ffc0"/>
<rect x="1055.1" y="26.8" width="6.5" height="6.5" fill="#89ffbf"/>
<rect x="1061.1" y="26.8" width="6.5" height="6.5" fill="#8fffbf"/>
<rect x="1067.1" y="26.8" width="6.5" height="6.5" fill="#94ffbe"/>
<rect x="1073.1" y="26.8" width="6.5" height="6.5" fill="#9affbe"/>
<rect x="1079.1" y="26.8" width="6.5" height="6.5" fill="#9fffbe"/>
<rect x="1085.1" y="26.8" width="6.5" height="6.5" fill="#a5ffbd"/>
<rect x="1091.1" y="26.8" width="6.5" height="6.5" fill="#abffbd"/>
<rect x="1097.1" y="26.8" width="6.5" height="6.5" fill="#b1ffbc"/>
<rect x="1103.1" y="26.8" width="6.5" height="6.5" fill="#b7ffbc"/>
<rect x="1109.1" y="26.8" width="6.5" height="6.5" fill="#bdffbb"/>
<rect x="1115.1" y="26.8" width="6.5" height="6.5" fill="#c4ffbb"/>
<rect x="1121.1" y="26.8" width="6.5" height="6.5" fill="#caffbb"/>
<rect x="1127.1" y="26.8" width="6.5" height="6.5" fill="#d1ffba"/>
<rect x="1133.1" y="26.8" width="6.5" height="6.5" fill="#d7ffba"/>
<rect x="1139.1" y="26.8" width="6.5" height="6.5" fill="#deffb9"/>
<rect x="1145.1" y="26.8" width="6.5" height="6.5" fill="#e5ffb9"/>
<rect x="1151.1" y="26.8" width="6.5" height="6.5" fill="#ecffb8"/>
<rect x="1157.1" y="26.8" width="6.5" height="6.5" fill="#f3ffb8"/>
<rect x="1163.1" y="26.8" width="6.5" height="6.5" fill="#faffb7"/>
<rect x="1169.1" y="26.8" width="6.5" height="6.5" fill="#fffdb5"/>
<rect x="1175.1" y="26.8" width="6.5" height="6.5" fill="#fff5b0"/>
<rect x="1181.1" y="26.8" width="6.5" height="6.5" fill="#ffefaa"/>
<rect x="1187.1" y="26.8" width="6.5" height="6.5" fill="#ffe8a5"/>
<rect x="1193.1" y="26.8" width="6.5" height="6.5" fill="#ffe2a0"/>
<rect x="1043.1" y="32.8" width="6.5" height="6.5" fill="#82ffc6"/>
<rect x="1049.1" y="32.8" width="6.5" height="6.5" fill="#88ffc6"/>
<rect x="1055.1" y="32.8" width="6.5" height="6.5" fill="#8dffc5"/>
<rect x="1061.1" y="32.8" width="6.5" height="6.5" fill="#92ffc5"/>
<rect x="1067.1" y="32.8" width="6.5" height="6.5" fill="#98ffc4"/>
<rect x="1073.1" y="32.8" width="6.5" height="6.5" fill="#9effc4"/>
<rect x="1079.1" y="32.8" width="6.5" height="6.5" fill="#a4ffc4"/>
<rect x="1085.1" y="32.8" width="6.5" height="6.5" fill="#a9ffc3"/>
<rect x="1091.1" y="32.8" width="6.5" height="6.5" fill="#afffc3"/>
<rect x="1097.1" y="32.8" width="6.5" height="6.5" fill="#b6ffc2"/>
<rect x="1103.1" y="32.8" width="6.5" height="6.5" fill="#bcffc2"/>
<rect x="1109.1" y="32.8" width="6.5" height="6.5" fill="#c2ffc2"/>
<rect x="1115.1" y="32.8" width="6.5" height="6.5" fill="#c9ffc1"/>
<rect x="1121.1" y="32.8" width="6.5" height="6.5" fill="#cfffc1"/>
<rect x="1127.1" y="32.8" width="6.5" height="6.5" fill="#d6ffc0"/>
<rect x="1133.1" y="32.8" width="6.5" height="6.5" fill="#ddffc0"/>
<rect x="1139.1" y="32.8" width="6.5" height="6.5" fill="#e4ffbf"/>
<rect x="1145.1" y="32.8" width="6.5" height="6.5" fill="#ebffbf"/>
<rect x="1151.1" y="32.8" width="6.5" height="6.5" fill="#f2ffbf"/>
<rect x="1157.1" y="32.8" width="6.5" height="6.5" fill="#f9ffbe"/>
<rect x="1163.1" y="32.8" width="6.5" height="6.5" fill="#fffdbd"/>
<rect x="1169.1" y="32.8" width="6.5" height="6.5" fill="#fff6b7"/>
<rect x="1175.1" y="32.8" width="6.5" height="6.5" fill="#ffefb1"/>
<rect x="1181.1" y="32.8" width="6.5" height="6.5" fill="#ffe9ac"/>
<rect x="1187.1" y="32.8" width="6.5" height="6.5" fill="#ffe2a7"/>
<rect x="1193.1" y="32.8" width="6.5" height="6.5" fill="#ffdca2"/>
<rect x="1043.1" y="38.8" width="6.5" height="6.5" fill="#86ffcc"/>
<rect x="1049.1" y="38.8" width="6.5" height="6.5" fill="#8bffcc"/>
<rect x="1055.1" y="38.8" width="6.5" height="6.5" fill="#91ffcb"/>
<rect x="1061.1" y="38.8" width="6.5" height="6.5" fill="#96ffcb"/>
<rect x="1067.1" y="38.8" width="6.5" height="6.5" fill="#9cffcb"/>
<rect x="1073.1" y="38.8" width="6.5" height="6.5" fill="#a2ffca"/>
<rect x="1079.1" y="38.8" width="6.5" height="6.5" fill="#a8ffca"/>
<rect x="1085.1" y="38.8" width="6.5" height="6.5" fill="#aeffc9"/>
<rect x="1091.1" y="38.8" width="6.5" height="6.5" fill="#b4ffc9"/>
<rect x="1097.1" y="38.8" width="6.5" height="6.5" fill="#baffc9"/>
<rect x="1103.1" y="38.8" width="6.5" height="6.5" fill="#c1ffc8"/>
<rect x="1109.1" y="38.8" width="6.5" height="6.5" fill="#c7ffc8"/>
<rect x="1115.1" y="38.8" width="6.5" height="6.5" fill="#ceffc8"/>
<rect x="1121.1" y="38.8" width="6.5" height="6.5" fill="#d5ffc7"/>
<rect x="1127.1" y="38.8" width="6.5" height="6.5" fill="#dbffc7"/>
<rect x="1133.1" y="38.8" width="6.5" height="6.5" fill="#e2ffc6"/>
<rect x="1139.1" y="38.8" width="6.5" height="6.5" fill="#eaffc6"/>
<rect x="1145.1" y="38.8" width="6.5" height="6.5" fill="#f1ffc6"/>
<rect x="1151.1" y="38.8" width="6.5" height="6.5" fill="#f8ffc5"/>
<rect x="1157.1" y="38.8" width="6.5" height="6.5" fill="#fffec4"/>
<rect x="1163.1" y="38.8" width="6.5" height="6.5" fill="#fff7be"/>
<rect x="1169.1" y="38.8" width="6.5" height="6.5" fill="#fff0b8"/>
<rect x="1175.1" y="38.8" width="6.5" height="6.5" fill="#ffe9b3"/>
<rect x="1181.1" y="38.8" width="6.5" height="6.5" fill="#ffe3ad"/>
<rect x="1187.1" y="38.8" width="6.5" height="6.5" fill="#ffdda8"/>
<rect x="1193.1" y="38.8" width="6.5" height="6.5" fill="#ffd7a3"/>
<rect x="1043.1" y="44.8" width="6.5" height="6.5" fill="#89ffd2"/>
<rect x="1049.1" y="44.8" width="6.5" height="6.5" fill="#8fffd2"/>
<rect x="1055.1" y="44.8" width="6.5" height="6.5" fill="#95ffd2"/>
<rect x="1061.1" y="44.8" width="6.5" height="6.5" fill="#9affd1"/>
<rect x="1067.1" y="44.8" width="6.5" height="6.5" fill="#a0ffd1"/>
<rect x="1073.1" y="44.8" width="6.5" height="6.5" fill="#a6ffd1"/>
<rect x="1079.1" y="44.8" width="6.5" height="6.5" fill="#acffd0"/>
<rect x="1085.1" y="44.8" width="6.5" height="6.5" fill="#b3ffd0"/>
<rect x="1091.1" y="44.8" width="6.5" height="6.5" fill="#b9ffd0"/>
<rect x="1097.1" y="44.8" width="6.5" height="6.5" fill="#bfffcf"/>
<rect x="1103.1" y="44.8" width="6.5" height="6.5" fill="#c6ffcf"/>
<rect x="1109.1" y="44.8" width="6.5" height="6.5" fill="#ccffce"/>
<rect x="1115.1" y="44.8" width="6.5" height="6.5" fill="#d3ffce"/>
<rect x="1121.1" y="44.8" width="6.5" height="6.5" fill="#daffce"/>
<rect x="1127.1" y="44.8" width="6.5" height="6.5" fill="#e1ffcd"/>
<rect x="1133.1" y="44.8" width="6.5" height="6.5" fill="#e8ffcd"/>
<rect x="1139.1" y="44.8" width="6.5" height="6.5" fill="#f0ffcd"/>
<rect x="1145.1" y="44.8" width="6.5" height="6.5" fill="#f7ffcc"/>
<rect x="1151.1" y="44.8" width="6.5" height="6.5" fill="#ffffcc"/>
<rect x="1157.1" y="44.8" width="6.5" height="6.5" fill="#fff8c6"/>
<rect x="1163.1" y="44.8" width="6.5" height="6.5" fill="#fff1c0"/>
<rect x="1169.1" y="44.8" width="6.5" height="6.5" fill="#ffeaba"/>
<rect x="1175.1" y="44.8" width="6.5" height="6.5" fill="#ffe3b4"/>
<rect x="1181.1" y="44.8" width="6.5" height="6.5" fill="#ffddaf"/>
<rect x="1187.1" y="44.8" width="6.5" height="6.5" fill="#ffd7aa"/>
<rect x="1193.1" y="44.8" width="6.5" height="6.5" fill="#ffd1a5"/>
<rect x="1043.1" y="50.8" width="6.5" height="6.5" fill="#8dffd9"/>
<rect x="1049.1" y="50.8" width="6.5" height="6.5" fill="#93ffd9"/>
<rect x="1055.1" y="50.8" width="6.5" height="6.5" fill="#99ffd8"/>
<rect x="1061.1" y="50.8" width="6.5" height="6.5" fill="#9fffd8"/>
<rect x="1067.1" y="50.8" width="6.5" height="6.5" fill="#a5ffd8"/>
<rect x="1073.1" y="50.8" width="6.5" height="6.5" fill="#abffd7"/>
<rect x="1079.1" y="50.8" width="6.5" height="6.5" fill="#b1ffd7"/>
<rect x="1085.1" y="50.8" width="6.5" height="6.5" fill="#b7ffd7"/>
<rect x="1091.1" y="50.8" width="6.5" height="6.5" fill="#beffd6"/>
<rect x="1097.1" y="50.8" width="6.5" height="6.5" fill="#c4ffd6"/>
<rect x="1103.1" y="50.8" width="6.5" height="6.5" fill="#cbffd6"/>
<rect x="1109.1" y="50.8" width="6.5" height="6.5" fill="#d2ffd5"/>
<rect x="1115.1" y="50.8" width="6.5" height="6.5" fill="#d9ffd5"/>
<rect x="1121.1" y="50.8" width="6.5" height="6.5" fill="#e0ffd5"/>
<rect x="1127.1" y="50.8" width="6.5" height="6.5" fill="#e7ffd4"/>
<rect x="1133.1" y="50.8" width="6.5" height="6.5" fill="#eeffd4"/>
<rect x="1139.1" y="50.8" width="6.5" height="6.5" fill="#f6ffd4"/>
<rect x="1145.1" y="50.8" width="6.5" height="6.5" fill="#fdffd3"/>
<rect x="1151.1" y="50.8" width="6.5" height="6.5" fill="#fff9ce"/>
<rect x="1157.1" y="50.8" width="6.5" height="6.5" fill="#fff2c7"/>
<rect x="1163.1" y="50.8" width="6.5" height="6.5" fill="#ffebc1"/>
<rect x="1169.1" y="50.8" width="6.5" height="6.5" fill="#ffe4bc"/>
<rect x="1175.1" y="50.8" width="6.5" height="6.5" fill="#ffdeb6"/>
<rect x="1181.1" y="50.8" width="6.5" height="6.5" fill="#ffd7b1"/>
<rect x="1187.1" y="50.8" width="6.5" height="6.5" fill="#ffd1ab"/>
<rect x="1193.1" y="50.8" width="6.5" height="6.5" fill="#ffcca6"/>
<rect x="1043.1" y="56.8" width="6.5" height="6.5" fill="#91ffe0"/>
<rect x="1049.1" y="56.8" width="6.5" height="6.5" fill="#97ffdf"/>
<rect x="1055.1" y="56.8" width="6.5" height="6.5" fill="#9dffdf"/>
<rect x="1061.1" y="56.8" width="6.5" height="6.5" fill="#a3ffdf"/>
<rect x="1067.1" y="56.8" width="6.5" height="6.5" fill="#a9ffde"/>
<rect x="1073.1" y="56.8" width="6.5" height="6.5" fill="#afffde"/>
<rect x="1079.1" y="56.8" width="6.5" height="6.5" fill="#b6ffde"/>
<rect x="1085.1" y="56.8" width="6.5" height="6.5" fill="#bcffde"/>
<rect x="1091.1" y="56.8" width="6.5" height="6.5" fill="#c3ffdd"/>
<rect x="1097.1" y="56.8" width="6.5" height="6.5" fill="#caffdd"/>
<rect x="1103.1" y="56.8" width="6.5" height="6.5" fill="#d0ffdd"/>
<rect x="1109.1" y="56.8" width="6.5" height="6.5" fill="#d7ffdc"/>
<rect x="1115.1" y="56.8" width="6.5" height="6.5" fill="#dfffdc"/>
<rect x="1121.1" y="56.8" width="6.5" height="6.5" fill="#e6ffdc"/>
<rect x="1127.1" y="56.8" width="6.5" height="6.5" fill="#edffdb"/>
<rect x="1133.1" y="56.8" width="6.5" height="6.5" fill="#f5ffdb"/>
<rect x="1139.1" y="56.8" width="6.5" height="6.5" fill="#fcffdb"/>
<rect x="1145.1" y="56.8" width="6.5" height="6.5" fill="#fffad6"/>
<rect x="1151.1" y="56.8" width="6.5" height="6.5" fill="#fff2cf"/>
<rect x="1157.1" y="56.8" width="6.5" height="6.5" fill="#ffebc9"/>
<rect x="1163.1" y="56.8" width="6.5" height="6.5" fill="#ffe5c3"/>
<rect x="1169.1" y="56.8" width="6.5" height="6.5" fill="#ffdebd"/>
<rect x="1175.1" y="56.8" width="6.5" height="6.5" fill="#ffd8b7"/>
<rect x="1181.1" y="56.8" width="6.5" height="6.5" fill="#ffd2b2"/>
<rect x="1187.1" y="56.8" width="6.5" height="6.5" fill="#ffccad"/>
<rect x="1193.1" y="56.8" width="6.5" height="6.5" fill="#ffc6a8"/>
<rect x="1043.1" y="62.8" width="6.5" height="6.5" fill="#95ffe7"/>
<rect x="1049.1" y="62.8" width="6.5" height="6.5" fill="#9bffe6"/>
<rect x="1055.1" y="62.8" width="6.5" height="6.5" fill="#a1ffe6"/>
<rect x="1061.1" y="62.8" width="6.5" height="6.5" fill="#a7ffe6"/>
<rect x="1067.1" y="62.8" width="6.5" height="6.5" fill="#aeffe6"/>
<rect x="1073.1" y="62.8" width="6.5" height="6.5" fill="#b4ffe5"/>
<rect x="1079.1" y="62.8" width="6.5" height="6.5" fill="#bbffe5"/>
<rect x="1085.1" y="62.8" width="6.5" height="6.5" fill="#c1ffe5"/>
<rect x="1091.1" y="62.8" width="6.5" height="6.5" fill="#c8ffe5"/>
<rect x="1097.1" y="62.8" width="6.5" height="6.5" fill="#cfffe4"/>
<rect x="1103.1" y="62.8" width="6.5" height="6.5" fill="#d6ffe4"/>
<rect x="1109.1" y="62.8" width="6.5" height="6.5" fill="#ddffe4"/>
<rect x="1115.1" y="62.8" width="6.5" height="6.5" fill="#e5ffe3"/>
<rect x="1121.1" y="62.8" width="6.5" height="6.5" fill="#ecffe3"/>
<rect x="1127.1" y="62.8" width="6.5" height="6.5" fill="#f4ffe3"/>
<rect x="1133.1" y="62.8" width="6.5" height="6.5" fill="#fbffe3"/>
<rect x="1139.1" y="62.8" width="6.5" height="6.5" fill="#fffbdf"/>
<rect x="1145.1" y="62.8" width="6.5" height="6.5" fill="#fff3d8"/>
<rect x="1151.1" y="62.8" width="6.5" height="6.5" fill="#ffecd1"/>
<rect x="1157.1" y="62.8" width="6.5" height="6.5" fill="#ffe5cb"/>
<rect x="1163.1" y="62.8" width="6.5" height="6.5" fill="#ffdfc5"/>
<rect x="1169.1" y="62.8" width="6.5" height="6.5" fill="#ffd8bf"/>
<rect x="1175.1" y="62.8" width="6.5" height="6.5" fill="#ffd2b9"/>
<rect x="1181.1" y="62.8" width="6.5" height="6.5" fill="#ffccb4"/>
<rect x="1187.1" y="62.8" width="6.5" height="6.5" fill="#ffc7ae"/>
<rect x="1193.1" y="62.8" width="6.5" height="6.5" fill="#ffc1a9"/>
<rect x="1043.1" y="68.8" width="6.5" height="6.5" fill="#99ffee"/>
<rect x="1049.1" y="68.8" width="6.5" height="6.5" fill="#9fffee"/>
<rect x="1055.1" y="68.8" width="6.5" height="6.5" fill="#a6ffed"/>
<rect x="1061.1" y="68.8" width="6.5" height="6.5" fill="#acffed"/>
<rect x="1067.1" y="68.8" width="6.5" height="6.5" fill="#b2ffed"/>
<rect x="1073.1" y="68.8" width="6.5" height="6.5" fill="#b9ffed"/>
<rect x="1079.1" y="68.8" width="6.5" height="6.5" fill="#c0ffed"/>
<rect x="1085.1" y="68.8" width="6.5" height="6.5" fill="#c7ffec"/>
<rect x="1091.1" y="68.8" width="6.5" height="6.5" fill="#ceffec"/>
<rect x="1097.1" y="68.8" width="6.5" height="6.5" fill="#d5ffec"/>
<rect x="1103.1" y="68.8" width="6.5" height="6.5" fill="#dcffec"/>
<rect x="1109.1" y="68.8" width="6.5" height="6.5" fill="#e3ffeb"/>
<rect x="1115.1" y="68.8" width="6.5" height="6.5" fill="#ebffeb"/>
<rect x="1121.1" y="68.8" width="6.5" height="6.5" fill="#f2ffeb"/>
<rect x="1127.1" y="68.8" width="6.5" height="6.5" fill="#faffeb"/>
<rect x="1133.1" y="68.8" width="6.5" height="6.5" fill="#fffce8"/>
<rect x="1139.1" y="68.8" width="6.5" height="6.5" fill="#fff4e0"/>
<rect x="1145.1" y="68.8" width="6.5" height="6.5" fill="#ffedd9"/>
<rect x="1151.1" y="68.8" width="6.5" height="6.5" fill="#ffe6d3"/>
<rect x="1157.1" y="68.8" width="6.5" height="6.5" fill="#ffdfcc"/>
<rect x="1163.1" y="68.8" width="6.5" height="6.5" fill="#ffd9c6"/>
<rect x="1169.1" y="68.8" width="6.5" height="6.5" fill="#ffd3c0"/>
<rect x="1175.1" y="68.8" width="6.5" height="6.5" fill="#ffcdbb"/>
<rect x="1181.1" y="68.8" width="6.5" height="6.5" fill="#ffc7b5"/>
<rect x="1187.1" y="68.8" width="6.5" height="6.5" fill="#ffc1b0"/>
<rect x="1193.1" y="68.8" width="6.5" height="6.5" fill="#ffbcab"/>
<rect x="1043.1" y="74.8" width="6.5" height="6.5" fill="#9efff5"/>
<rect x="1049.1" y="74.8" width="6.5" height="6.5" fill="#a4fff5"/>
<rect x="1055.1" y="74.8" width="6.5" height="6.5" fill="#aafff5"/>
<rect x="1061.1" y="74.8" width="6.5" height="6.5" fill="#b1fff5"/>
<rect x="1067.1" y="74.8" width="6.5" height="6.5" fill="#b7fff5"/>
<rect x="1073.1" y="74.8" width="6.5" height="6.5" fill="#befff5"/>
<rect x="1079.1" y="74.8" width="6.5" height="6.5" fill="#c5fff4"/>
<rect x="1085.1" y="74.8" width="6.5" height="6.5" fill="#ccfff4"/>
<rect x="1091.1" y="74.8" width="6.5" height="6.5" fill="#d3fff4"/>
<rect x="1097.1" y="74.8" width="6.5" height="6.5" fill="#dbfff4"/>
<rect x="1103.1" y="74.8" width="6.5" height="6.5" fill="#e2fff4"/>
<rect x="1109.1" y="74.8" width="6.5" height="6.5" fill="#eafff3"/>
<rect x="1115.1" y="74.8" width="6.5" height="6.5" fill="#f1fff3"/>
<rect x="1121.1" y="74.8" width="6.5" height="6.5" fill="#f9fff3"/>
<rect x="1127.1" y="74.8" width="6.5" height="6.5" fill="#fffdf1"/>
<rect x="1133.1" y="74.8" width="6.5" height="6.5" fill="#fff5e9"/>
<rect x="1139.1" y="74.8" width="6.5" height="6.5" fill="#ffeee2"/>
<rect x="1145.1" y="74.8" width="6.5" height="6.5" fill="#ffe7db"/>
<rect x="1151.1" y="74.8" width="6.5" height="6.5" fill="#ffe0d4"/>
<rect x="1157.1" y="74.8" width="6.5" height="6.5" fill="#ffd9ce"/>
<rect x="1163.1" y="74.8" width="6.5" height="6.5" fill="#ffd3c8"/>
<rect x="1169.1" y="74.8" width="6.5" height="6.5" fill="#ffcdc2"/>
<rect x="1175.1" y="74.8" width="6.5" height="6.5" fill="#ffc7bc"/>
<rect x="1181.1" y="74.8" width="6.5" height="6.5" fill="#ffc1b7"/>
<rect x="1187.1" y="74.8" width="6.5" height="6.5" fill="#ffbcb1"/>
<rect x="1193.1" y="74.8" width="6.5" height="6.5" fill="#ffb7ac"/>
<rect x="1043.1" y="80.8" width="6.5" height="6.5" fill="#a2fffd"/>
<rect x="1049.1" y="80.8" width="6.5" height="6.5" fill="#a9fffd"/>
<rect x="1055.1" y="80.8" width="6.5" height="6.5" fill="#affffd"/>
<rect x="1061.1" y="80.8" width="6.5" height="6.5" fill="#b6fffd"/>
<rect x="1067.1" y="80.8" width="6.5" height="6.5" fill="#bdfffd"/>
<rect x="1073.1" y="80.8" width="6.5" height="6.5" fill="#c4fffd"/>
<rect x="1079.1" y="80.8" width="6.5" height="6.5" fill="#cbfffc"/>
<rect x="1085.1" y="80.8" width="6.5" height="6.5" fill="#d2fffc"/>
<rect x="1091.1" y="80.8" width="6.5" height="6.5" fill="#d9fffc"/>
<rect x="1097.1" y="80.8" width="6.5" height="6.5" fill="#e1fffc"/>
<rect x="1103.1" y="80.8" width="6.5" height="6.5" fill="#e8fffc"/>
<rect x="1109.1" y="80.8" width="6.5" height="6.5" fill="#f0fffc"/>
<rect x="1115.1" y="80.8" width="6.5" height="6.5" fill="#f8fffb"/>
<rect x="1121.1" y="80.8" width="6.5" height="6.5" fill="#fffefa"/>
<rect x="1127.1" y="80.8" width="6.5" height="6.5" fill="#fff6f2"/>
<rect x="1133.1" y="80.8" width="6.5" height="6.5" fill="#ffeeeb"/>
<rect x="1139.1" y="80.8" width="6.5" height="6.5" fill="#ffe7e3"/>
<rect x="1145.1" y="80.8" width="6.5" height="6.5" fill="#ffe0dc"/>
<rect x="1151.1" y="80.8" width="6.5" height="6.5" fill="#ffdad6"/>
<rect x="1157.1" y="80.8" width="6.5" height="6.5" fill="#ffd3cf"/>
<rect x="1163.1" y="80.8" width="6.5" height="6.5" fill="#ffcdc9"/>
<rect x="1169.1" y="80.8" width="6.5" height="6.5" fill="#ffc7c3"/>
<rect x="1175.1" y="80.8" width="6.5" height="6.5" fill="#ffc2be"/>
<rect x="1181.1" y="80.8" width="6.5" height="6.5" fill="#ffbcb8"/>
<rect x="1187.1" y="80.8" width="6.5" height="6.5" fill="#ffb7b3"/>
<rect x="1193.1" y="80.8" width="6.5" height="6.5" fill="#ffb2ae"/>
<rect x="1043.1" y="86.8" width="6.5" height="6.5" fill="#a3f9ff"/>
<rect x="1049.1" y="86.8" width="6.5" height="6.5" fill="#a9f9ff"/>
<rect x="1055.1" y="86.8" width="6.5" height="6.5" fill="#b0f9ff"/>
<rect x="1061.1" y="86.8" width="6.5" height="6.5" fill="#b7f9ff"/>
<rect x="1067.1" y="86.8" width="6.5" height="6.5" fill="#bdf9ff"/>
<rect x="1073.1" y="86.8" width="6.5" height="6.5" fill="#c5f9ff"/>
<rect x="1079.1" y="86.8" width="6.5" height="6.5" fill="#ccf9ff"/>
<rect x="1085.1" y="86.8" width="6.5" height="6.5" fill="#d3f9ff"/>
<rect x="1091.1" y="86.8" width="6.5" height="6.5" fill="#dbfaff"/>
<rect x="1097.1" y="86.8" width="6.5" height="6.5" fill="#e2faff"/>
<rect x="1103.1" y="86.8" width="6.5" height="6.5" fill="#eafaff"/>
<rect x="1109.1" y="86.8" width="6.5" height="6.5" fill="#f2faff"/>
<rect x="1115.1" y="86.8" width="6.5" height="6.5" fill="#fafaff"/>
<rect x="1121.1" y="86.8" width="6.5" height="6.5" fill="#fff7fc"/>
<rect x="1127.1" y="86.8" width="6.5" height="6.5" fill="#ffeff4"/>
<rect x="1133.1" y="86.8" width="6.5" height="6.5" fill="#ffe8ec"/>
<rect x="1139.1" y="86.8" width="6.5" height="6.5" fill="#ffe1e5"/>
<rect x="1145.1" y="86.8" width="6.5" height="6.5" fill="#ffdade"/>
<rect x="1151.1" y="86.8" width="6.5" height="6.5" fill="#ffd4d7"/>
<rect x="1157.1" y="86.8" width="6.5" height="6.5" fill="#ffcdd1"/>
<rect x="1163.1" y="86.8" width="6.5" height="6.5" fill="#ffc8cb"/>
<rect x="1169.1" y="86.8" width="6.5" height="6.5" fill="#ffc2c5"/>
<rect x="1175.1" y="86.8" width="6.5" height="6.5" fill="#ffbcbf"/>
<rect x="1181.1" y="86.8" width="6.5" height="6.5" fill="#ffb7ba"/>
<rect x="1187.1" y="86.8" width="6.5" height="6.5" fill="#ffb2b4"/>
<rect x="1193.1" y="86.8" width="6.5" height="6.5" fill="#ffadaf"/>
<rect x="1043.1" y="92.8" width="6.5" height="6.5" fill="#a2f1ff"/>
<rect x="1049.1" y="92.8" width="6.5" height="6.5" fill="#a9f1ff"/>
<rect x="1055.1" y="92.8" width="6.5" height="6.5" fill="#aff1ff"/>
<rect x="1061.1" y="92.8" width="6.5" height="6.5" fill="#b6f1ff"/>
<rect x="1067.1" y="92.8" width="6.5" height="6.5" fill="#bdf1ff"/>
<rect x="1073.1" y="92.8" width="6.5" height="6.5" fill="#c4f1ff"/>
<rect x="1079.1" y="92.8" width="6.5" height="6.5" fill="#cbf1ff"/>
<rect x="1085.1" y="92.8" width="6.5" height="6.5" fill="#d2f1ff"/>
<rect x="1091.1" y="92.8" width="6.5" height="6.5" fill="#d9f1ff"/>
<rect x="1097.1" y="92.8" width="6.5" height="6.5" fill="#e1f1ff"/>
<rect x="1103.1" y="92.8" width="6.5" height="6.5" fill="#e9f2ff"/>
<rect x="1109.1" y="92.8" width="6.5" height="6.5" fill="#f1f2ff"/>
<rect x="1115.1" y="92.8" width="6.5" height="6.5" fill="#f9f2ff"/>
<rect x="1121.1" y="92.8" width="6.5" height="6.5" fill="#fff0fd"/>
<rect x="1127.1" y="92.8" width="6.5" height="6.5" fill="#ffe9f5"/>
<rect x="1133.1" y="92.8" width="6.5" height="6.5" fill="#ffe2ee"/>
<rect x="1139.1" y="92.8" width="6.5" height="6.5" fill="#ffdbe7"/>
<rect x="1145.1" y="92.8" width="6.5" height="6.5" fill="#ffd4e0"/>
<rect x="1151.1" y="92.8" width="6.5" height="6.5" fill="#ffced9"/>
<rect x="1157.1" y="92.8" width="6.5" height="6.5" fill="#ffc8d2"/>
<rect x="1163.1" y="92.8" width="6.5" height="6.5" fill="#ffc2cc"/>
<rect x="1169.1" y="92.8" width="6.5" height="6.5" fill="#ffbcc6"/>
<rect x="1175.1" y="92.8" width="6.5" height="6.5" fill="#ffb7c1"/>
<rect x="1181.1" y="92.8" width="6.5" height="6.5" fill="#ffb2bb"/>
<rect x="1187.1" y="92.8" width="6.5" height="6.5" fill="#ffadb6"/>
<rect x="1193.1" y="92.8" width="6.5" height="6.5" fill="#ffa8b1"/>
<rect x="1043.1" y="98.8" width="6.5" height="6.5" fill="#a2e9ff"/>
<rect x="1049.1" y="98.8" width="6.5" height="6.5" fill="#a8e9ff"/>
<rect x="1055.1" y="98.8" width="6.5" height="6.5" fill="#aee9ff"/>
<rect x="1061.1" y="98.8" width="6.5" height="6.5" fill="#b5e9ff"/>
<rect x="1067.1" y="98.8" width="6.5" height="6.5" fill="#bce9ff"/>
<rect x="1073.1" y="98.8" width="6.5" height="6.5" fill="#c3e9ff"/>
<rect x="1079.1" y="98.8" width="6.5" height="6.5" fill="#cae9ff"/>
<rect x="1085.1" y="98.8" width="6.5" height="6.5" fill="#d1e9ff"/>
<rect x="1091.1" y="98.8" width="6.5" height="6.5" fill="#d8e9ff"/>
<rect x="1097.1" y="98.8" width="6.5" height="6.5" fill="#e0e9ff"/>
<rect x="1103.1" y="98.8" width="6.5" height="6.5" fill="#e7e9ff"/>
<rect x="1109.1" y="98.8" width="6.5" height="6.5" fill="#efe9ff"/>
<rect x="1115.1" y="98.8" width="6.5" height="6.5" fill="#f7e9ff"/>
<rect x="1121.1" y="98.8" width="6.5" height="6.5" fill="#ffe9ff"/>
<rect x="1127.1" y="98.8" width="6.5" height="6.5" fill="#ffe2f7"/>
<rect x="1133.1" y="98.8" width="6.5" height="6.5" fill="#ffdbef"/>
<rect x="1139.1" y="98.8" width="6.5" height="6.5" fill="#ffd5e8"/>
<rect x="1145.1" y="98.8" width="6.5" height="6.5" fill="#ffcee1"/>
<rect x="1151.1" y="98.8" width="6.5" height="6.5" fill="#ffc8da"/>
<rect x="1157.1" y="98.8" width="6.5" height="6.5" fill="#ffc2d4"/>
<rect x="1163.1" y="98.8" width="6.5" height="6.5" fill="#ffbcce"/>
<rect x="1169.1" y="98.8" width="6.5" height="6.5" fill="#ffb7c8"/>
<rect x="1175.1" y="98.8" width="6.5" height="6.5" fill="#ffb2c2"/>
<rect x="1181.1" y="98.8" width="6.5" height="6.5" fill="#ffadbd"/>
<rect x="1187.1" y="98.8" width="6.5" height="6.5" fill="#ffa8b7"/>
<rect x="1193.1" y="98.8" width="6.5" height="6.5" fill="#ffa3b2"/>
<rect x="1043.1" y="104.8" width="6.5" height="6.5" fill="#a1e2ff"/>
<rect x="1049.1" y="104.8" width="6.5" height="6.5" fill="#a7e2ff"/>
<rect x="1055.1" y="104.8" width="6.5" height="6.5" fill="#aee2ff"/>
<rect x="1061.1" y="104.8" width="6.5" height="6.5" fill="#b4e2ff"/>
<rect x="1067.1" y="104.8" width="6.5" height="6.5" fill="#bbe2ff"/>
<rect x="1073.1" y="104.8" width="6.5" height="6.5" fill="#c2e2ff"/>
<rect x="1079.1" y="104.8" width="6.5" height="6.5" fill="#c9e2ff"/>
<rect x="1085.1" y="104.8" width="6.5" height="6.5" fill="#d0e2ff"/>
<rect x="1091.1" y="104.8" width="6.5" height="6.5" fill="#d7e2ff"/>
<rect x="1097.1" y="104.8" width="6.5" height="6.5" fill="#dfe2ff"/>
<rect x="1103.1" y="104.8" width="6.5" height="6.5" fill="#e6e2ff"/>
<rect x="1109.1" y="104.8" width="6.5" height="6.5" fill="#eee2ff"/>
<rect x="1115.1" y="104.8" width="6.5" height="6.5" fill="#f6e2ff"/>
<rect x="1121.1" y="104.8" width="6.5" height="6.5" fill="#fee2ff"/>
<rect x="1127.1" y="104.8" width="6.5" height="6.5" fill="#ffdcf8"/>
<rect x="1133.1" y="104.8" width="6.5" height="6.5" fill="#ffd5f1"/>
<rect x="1139.1" y="104.8" width="6.5" height="6.5" fill="#ffceea"/>
<rect x="1145.1" y="104.8" width="6.5" height="6.5" fill="#ffc8e3"/>
<rect x="1151.1" y="104.8" width="6.5" height="6.5" fill="#ffc2dc"/>
<rect x="1157.1" y="104.8" width="6.5" height="6.5" fill="#ffbdd5"/>
<rect x="1163.1" y="104.8" width="6.5" height="6.5" fill="#ffb7cf"/>
<rect x="1169.1" y="104.8" width="6.5" height="6.5" fill="#ffb2c9"/>
<rect x="1175.1" y="104.8" width="6.5" height="6.5" fill="#ffadc4"/>
<rect x="1181.1" y="104.8" width="6.5" height="6.5" fill="#ffa8be"/>
<rect x="1187.1" y="104.8" width="6.5" height="6.5" fill="#ffa3b9"/>
<rect x="1193.1" y="104.8" width="6.5" height="6.5" fill="#ff9fb4"/>
<rect x="1043.1" y="110.8" width="6.5" height="6.5" fill="#a1dbff"/>
<rect x="1049.1" y="110.8" width="6.5" height="6.5" fill="#a7dbff"/>
<rect x="1055.1" y="110.8" width="6.5" height="6.5" fill="#addbff"/>
<rect x="1061.1" y="110.8" width="6.5" height="6.5" fill="#b4daff"/>
<rect x="1067.1" y="110.8" width="6.5" height="6.5" fill="#badaff"/>
<rect x="1073.1" y="110.8" width="6.5" height="6.5" fill="#c1daff"/>
<rect x="1079.1" y="110.8" width="6.5" height="6.5" fill="#c8daff"/>
<rect x="1085.1" y="110.8" width="6.5" height="6.5" fill="#cfdaff"/>
<rect x="1091.1" y="110.8" width="6.5" height="6.5" fill="#d6daff"/>
<rect x="1097.1" y="110.8" width="6.5" height="6.5" fill="#dddaff"/>
<rect x="1103.1" y="110.8" width="6.5" height="6.5" fill="#e5daff"/>
<rect x="1109.1" y="110.8" width="6.5" height="6.5" fill="#ecdaff"/>
<rect x="1115.1" y="110.8" width="6.5" height="6.5" fill="#f4daff"/>
<rect x="1121.1" y="110.8" width="6.5" height="6.5" fill="#fcdaff"/>
<rect x="1127.1" y="110.8" width="6.5" height="6.5" fill="#ffd5fa"/>
<rect x="1133.1" y="110.8" width="6.5" height="6.5" fill="#ffcff2"/>
<rect x="1139.1" y="110.8" width="6.5" height="6.5" fill="#ffc9eb"/>
<rect x="1145.1" y="110.8" width="6.5" height="6.5" fill="#ffc3e4"/>
<rect x="1151.1" y="110.8" width="6.5" height="6.5" fill="#ffbddd"/>
<rect x="1157.1" y="110.8" width="6.5" height="6.5" fill="#ffb7d7"/>
<rect x="1163.1" y="110.8" width="6.5" height="6.5" fill="#ffb2d1"/>
<rect x="1169.1" y="110.8" width="6.5" height="6.5" fill="#ffadcb"/>
<rect x="1175.1" y="110.8" width="6.5" height="6.5" fill="#ffa8c5"/>
<rect x="1181.1" y="110.8" width="6.5" height="6.5" fill="#ffa3c0"/>
<rect x="1187.1" y="110.8" width="6.5" height="6.5" fill="#ff9eba"/>
<rect x="1193.1" y="110.8" width="6.5" height="6.5" fill="#ff9ab5"/>
<rect x="1043.1" y="116.8" width="6.5" height="6.5" fill="#a0d4ff"/>
<rect x="1049.1" y="116.8" width="6.5" height="6.5" fill="#a6d4ff"/>
<rect x="1055.1" y="116.8" width="6.5" height="6.5" fill="#add3ff"/>
<rect x="1061.1" y="116.8" width="6.5" height="6.5" fill="#b3d3ff"/>
<rect x="1067.1" y="116.8" width="6.5" height="6.5" fill="#bad3ff"/>
<rect x="1073.1" y="116.8" width="6.5" height="6.5" fill="#c0d3ff"/>
<rect x="1079.1" y="116.8" width="6.5" height="6.5" fill="#c7d3ff"/>
<rect x="1085.1" y="116.8" width="6.5" height="6.5" fill="#ced3ff"/>
<rect x="1091.1" y="116.8" width="6.5" height="6.5" fill="#d5d3ff"/>
<rect x="1097.1" y="116.8" width="6.5" height="6.5" fill="#dcd3ff"/>
<rect x="1103.1" y="116.8" width="6.5" height="6.5" fill="#e4d3ff"/>
<rect x="1109.1" y="116.8" width="6.5" height="6.5" fill="#ebd2ff"/>
<rect x="1115.1" y="116.8" width="6.5" height="6.5" fill="#f3d2ff"/>
<rect x="1121.1" y="116.8" width="6.5" height="6.5" fill="#fbd2ff"/>
<rect x="1127.1" y="116.8" width="6.5" height="6.5" fill="#ffcffc"/>
<rect x="1133.1" y="116.8" width="6.5" height="6.5" fill="#ffc9f4"/>
<rect x="1139.1" y="116.8" width="6.5" height="6.5" fill="#ffc3ed"/>
<rect x="1145.1" y="116.8" width="6.5" height="6.5" fill="#ffbde6"/>
<rect x="1151.1" y="116.8" width="6.5" height="6.5" fill="#ffb7df"/>
<rect x="1157.1" y="116.8" width="6.5" height="6.5" fill="#ffb2d8"/>
<rect x="1163.1" y="116.8" width="6.5" height="6.5" fill="#ffadd2"/>
<rect x="1169.1" y="116.8" width="6.5" height="6.5" fill="#ffa8cc"/>
<rect x="1175.1" y="116.8" width="6.5" height="6.5" fill="#ffa3c6"/>
<rect x="1181.1" y="116.8" width="6.5" height="6.5" fill="#ff9ec1"/>
<rect x="1187.1" y="116.8" width="6.5" height="6.5" fill="#ff9abc"/>
<rect x="1193.1" y="116.8" width="6.5" height="6.5" fill="#ff95b7"/>
<rect x="1043.1" y="122.8" width="6.5" height="6.5" fill="#a0cdff"/>
<rect x="1049.1" y="122.8" width="6.5" height="6.5" fill="#a6cdff"/>
<rect x="1055.1" y="122.8" width="6.5" height="6.5" fill="#acccff"/>
<rect x="1061.1" y="122.8" width="6.5" height="6.5" fill="#b2ccff"/>
<rect x="1067.1" y="122.8" width="6.5" height="6.5" fill="#b9ccff"/>
<rect x="1073.1" y="122.8" width="6.5" height="6.5" fill="#c0ccff"/>
<rect x="1079.1" y="122.8" width="6.5" height="6.5" fill="#c6ccff"/>
<rect x="1085.1" y="122.8" width="6.5" height="6.5" fill="#cdccff"/>
<rect x="1091.1" y="122.8" width="6.5" height="6.5" fill="#d4ccff"/>
<rect x="1097.1" y="122.8" width="6.5" height="6.5" fill="#dbcbff"/>
<rect x="1103.1" y="122.8" width="6.5" height="6.5" fill="#e3cbff"/>
<rect x="1109.1" y="122.8" width="6.5" height="6.5" fill="#eacbff"/>
<rect x="1115.1" y="122.8" width="6.5" height="6.5" fill="#f1cbff"/>
<rect x="1121.1" y="122.8" width="6.5" height="6.5" fill="#f9cbff"/>
<rect x="1127.1" y="122.8" width="6.5" height="6.5" fill="#ffc9fd"/>
<rect x="1133.1" y="122.8" width="6.5" height="6.5" fill="#ffc3f5"/>
<rect x="1139.1" y="122.8" width="6.5" height="6.5" fill="#ffbdee"/>
<rect x="1145.1" y="122.8" width="6.5" height="6.5" fill="#ffb7e7"/>
<rect x="1151.1" y="122.8" width="6.5" height="6.5" fill="#ffb2e0"/>
<rect x="1157.1" y="122.8" width="6.5" height="6.5" fill="#ffacda"/>
<rect x="1163.1" y="122.8" width="6.5" height="6.5" fill="#ffa7d4"/>
<rect x="1169.1" y="122.8" width="6.5" height="6.5" fill="#ffa3ce"/>
<rect x="1175.1" y="122.8" width="6.5" height="6.5" fill="#ff9ec8"/>
<rect x="1181.1" y="122.8" width="6.5" height="6.5" fill="#ff99c2"/>
<rect x="1187.1" y="122.8" width="6.5" height="6.5" fill="#ff95bd"/>
<rect x="1193.1" y="122.8" width="6.5" height="6.5" fill="#ff91b8"/>
<rect x="1043.1" y="128.8" width="6.5" height="6.5" fill="#9fc6ff"/>
<rect x="1049.1" y="128.8" width="6.5" height="6.5" fill="#a5c6ff"/>
<rect x="1055.1" y="128.8" width="6.5" height="6.5" fill="#abc6ff"/>
<rect x="1061.1" y="128.8" width="6.5" height="6.5" fill="#b2c6ff"/>
<rect x="1067.1" y="128.8" width="6.5" height="6.5" fill="#b8c5ff"/>
<rect x="1073.1" y="128.8" width="6.5" height="6.5" fill="#bfc5ff"/>
<rect x="1079.1" y="128.8" width="6.5" height="6.5" fill="#c5c5ff"/>
<rect x="1085.1" y="128.8" width="6.5" height="6.5" fill="#ccc5ff"/>
<rect x="1091.1" y="128.8" width="6.5" height="6.5" fill="#d3c5ff"/>
<rect x="1097.1" y="128.8" width="6.5" height="6.5" fill="#dac4ff"/>
<rect x="1103.1" y="128.8" width="6.5" height="6.5" fill="#e1c4ff"/>
<rect x="1109.1" y="128.8" width="6.5" height="6.5" fill="#e9c4ff"/>
<rect x="1115.1" y="128.8" width="6.5" height="6.5" fill="#f0c4ff"/>
<rect x="1121.1" y="128.8" width="6.5" height="6.5" fill="#f8c4ff"/>
<rect x="1127.1" y="128.8" width="6.5" height="6.5" fill="#ffc3fe"/>
<rect x="1133.1" y="128.8" width="6.5" height="6.5" fill="#ffbdf7"/>
<rect x="1139.1" y="128.8" width="6.5" height="6.5" fill="#ffb7f0"/>
<rect x="1145.1" y="128.8" width="6.5" height="6.5" fill="#ffb2e9"/>
<rect x="1151.1" y="128.8" width="6.5" height="6.5" fill="#fface2"/>
<rect x="1157.1" y="128.8" width="6.5" height="6.5" fill="#ffa7db"/>
<rect x="1163.1" y="128.8" width="6.5" height="6.5" fill="#ffa2d5"/>
<rect x="1169.1" y="128.8" width="6.5" height="6.5" fill="#ff9ecf"/>
<rect x="1175.1" y="128.8" width="6.5" height="6.5" fill="#ff99c9"/>
<rect x="1181.1" y="128.8" width="6.5" height="6.5" fill="#ff95c4"/>
<rect x="1187.1" y="128.8" width="6.5" height="6.5" fill="#ff90bf"/>
<rect x="1193.1" y="128.8" width="6.5" height="6.5" fill="#ff8cb9"/>
<rect x="1043.1" y="134.8" width="6.5" height="6.5" fill="#9fbfff"/>
<rect x="1049.1" y="134.8" width="6.5" height="6.5" fill="#a5bfff"/>
<rect x="1055.1" y="134.8" width="6.5" height="6.5" fill="#abbfff"/>
<rect x="1061.1" y="134.8" width="6.5" height="6.5" fill="#b1bfff"/>
<rect x="1067.1" y="134.8" width="6.5" height="6.5" fill="#b7bfff"/>
<rect x="1073.1" y="134.8" width="6.5" height="6.5" fill="#bebeff"/>
<rect x="1079.1" y="134.8" width="6.5" height="6.5" fill="#c5beff"/>
<rect x="1085.1" y="134.8" width="6.5" height="6.5" fill="#cbbeff"/>
<rect x="1091.1" y="134.8" width="6.5" height="6.5" fill="#d2beff"/>
<rect x="1097.1" y="134.8" width="6.5" height="6.5" fill="#d9beff"/>
<rect x="1103.1" y="134.8" width="6.5" height="6.5" fill="#e0bdff"/>
<rect x="1109.1" y="134.8" width="6.5" height="6.5" fill="#e8bdff"/>
<rect x="1115.1" y="134.8" width="6.5" height="6.5" fill="#efbdff"/>
<rect x="1121.1" y="134.8" width="6.5" height="6.5" fill="#f6bdff"/>
<rect x="1127.1" y="134.8" width="6.5" height="6.5" fill="#febcff"/>
<rect x="1133.1" y="134.8" width="6.5" height="6.5" fill="#ffb7f8"/>
<rect x="1139.1" y="134.8" width="6.5" height="6.5" fill="#ffb2f1"/>
<rect x="1145.1" y="134.8" width="6.5" height="6.5" fill="#ffacea"/>
<rect x="1151.1" y="134.8" width="6.5" height="6.5" fill="#ffa7e3"/>
<rect x="1157.1" y="134.8" width="6.5" height="6.5" fill="#ffa2dd"/>
<rect x="1163.1" y="134.8" width="6.5" height="6.5" fill="#ff9dd7"/>
<rect x="1169.1" y="134.8" width="6.5" height="6.5" fill="#ff99d1"/>
<rect x="1175.1" y="134.8" width="6.5" height="6.5" fill="#ff94cb"/>
<rect x="1181.1" y="134.8" width="6.5" height="6.5" fill="#ff90c5"/>
<rect x="1187.1" y="134.8" width="6.5" height="6.5" fill="#ff8cc0"/>
<rect x="1193.1" y="134.8" width="6.5" height="6.5" fill="#ff88bb"/>
<rect x="1043.1" y="140.8" width="6.5" height="6.5" fill="#9eb9ff"/>
<rect x="1049.1" y="140.8" width="6.5" height="6.5" fill="#a4b9ff"/>
<rect x="1055.1" y="140.8" width="6.5" height="6.5" fill="#aab9ff"/>
<rect x="1061.1" y="140.8" width="6.5" height="6.5" fill="#b0b8ff"/>
<rect x="1067.1" y="140.8" width="6.5" height="6.5" fill="#b7b8ff"/>
<rect x="1073.1" y="140.8" width="6.5" height="6.5" fill="#bdb8ff"/>
<rect x="1079.1" y="140.8" width="6.5" height="6.5" fill="#c4b8ff"/>
<rect x="1085.1" y="140.8" width="6.5" height="6.5" fill="#cab7ff"/>
<rect x="1091.1" y="140.8" width="6.5" height="6.5" fill="#d1b7ff"/>
<rect x="1097.1" y="140.8" width="6.5" height="6.5" fill="#d8b7ff"/>
<rect x="1103.1" y="140.8" width="6.5" height="6.5" fill="#dfb7ff"/>
<rect x="1109.1" y="140.8" width="6.5" height="6.5" fill="#e6b6ff"/>
<rect x="1115.1" y="140.8" width="6.5" height="6.5" fill="#eeb6ff"/>
<rect x="1121.1" y="140.8" width="6.5" height="6.5" fill="#f5b6ff"/>
<rect x="1127.1" y="140.8" width="6.5" height="6.5" fill="#fdb6ff"/>
<rect x="1133.1" y="140.8" width="6.5" height="6.5" fill="#ffb2fa"/>
<rect x="1139.1" y="140.8" width="6.5" height="6.5" fill="#ffacf2"/>
<rect x="1145.1" y="140.8" width="6.5" height="6.5" fill="#ffa7eb"/>
<rect x="1151.1" y="140.8" width="6.5" height="6.5" fill="#ffa2e5"/>
<rect x="1157.1" y="140.8" width="6.5" height="6.5" fill="#ff9dde"/>
<rect x="1163.1" y="140.8" width="6.5" height="6.5" fill="#ff98d8"/>
<rect x="1169.1" y="140.8" width="6.5" height="6.5" fill="#ff94d2"/>
<rect x="1175.1" y="140.8" width="6.5" height="6.5" fill="#ff90cc"/>
<rect x="1181.1" y="140.8" width="6.5" height="6.5" fill="#ff8cc7"/>
<rect x="1187.1" y="140.8" width="6.5" height="6.5" fill="#ff88c1"/>
<rect x="1193.1" y="140.8" width="6.5" height="6.5" fill="#ff84bc"/>
</g></g>
<rect x="1055.1" y="38.8" width="132.0" height="95.10000000000001" fill="none" stroke="#7a7a7a" stroke-width="1.2"/>
<rect x="1116.5" y="81.8" width="9.2" height="9.2" fill="#fff" stroke="#111" stroke-width="1.2"/>
<ellipse cx="1107.1" cy="95.4" rx="3.5" ry="3.1" fill="#8e8e8e" stroke="#1a1a1a" stroke-width="1.1"/>
<rect x="993.6" y="330" width="197" height="18" fill="#363636"/>
<text x="1008.3" y="343.8" font-size="13.3" text-anchor="start" fill="#f2f2f2" textLength="167.5" lengthAdjust="spacingAndGlyphs">RGB Triplet: 235, 235, 235</text>
<text x="11.7" y="418.2" font-size="18.9" text-anchor="start" fill="#f2f2f2" textLength="156" lengthAdjust="spacingAndGlyphs">Current Reading</text>
<text x="11.3" y="446" font-size="14.7" text-anchor="start" fill="#f2f2f2" textLength="73" lengthAdjust="spacingAndGlyphs">x: 0.3078</text>
<text x="11.3" y="473.4" font-size="14.7" text-anchor="start" fill="#f2f2f2" textLength="73" lengthAdjust="spacingAndGlyphs">y: 0.3241</text>
<text x="11.3" y="500.3" font-size="14.7" text-anchor="start" fill="#f2f2f2" textLength="89" lengthAdjust="spacingAndGlyphs">fL: 117.134</text>
<text x="11.3" y="527.4" font-size="14.7" text-anchor="start" fill="#f2f2f2" textLength="123.7" lengthAdjust="spacingAndGlyphs">cd/m²: 401.331</text>
<rect x="232" y="389.5" width="968" height="133.5" fill="#000"/>
<defs><linearGradient id="hd" x1="0" y1="0" x2="0" y2="1"><stop offset="0" stop-color="#303030"/><stop offset="0.42" stop-color="#2a2a2a"/><stop offset="0.52" stop-color="#1b1b1b"/><stop offset="1" stop-color="#161616"/></linearGradient></defs>
<rect x="243.8" y="389.7" width="957" height="18.0" fill="url(#hd)"/>
<rect x="232" y="389.7" width="11.8" height="18.0" fill="#000"/>
<rect x="243.8" y="407.7" width="957" height="16.4" fill="#424242"/>
<rect x="232" y="407.7" width="11.8" height="16.4" fill="#1a1a1a"/>
<rect x="243.8" y="424.1" width="957" height="16.6" fill="#7e7e7e"/>
<rect x="232" y="424.1" width="11.8" height="16.6" fill="#2c2c2c"/>
<rect x="243.8" y="440.7" width="957" height="16.5" fill="#424242"/>
<rect x="232" y="440.7" width="11.8" height="16.5" fill="#1a1a1a"/>
<rect x="243.8" y="457.2" width="957" height="16.3" fill="#7e7e7e"/>
<rect x="232" y="457.2" width="11.8" height="16.3" fill="#2c2c2c"/>
<rect x="243.8" y="473.5" width="957" height="16.6" fill="#424242"/>
<rect x="232" y="473.5" width="11.8" height="16.6" fill="#1a1a1a"/>
<rect x="243.8" y="490.1" width="957" height="16.4" fill="#7e7e7e"/>
<rect x="232" y="490.1" width="11.8" height="16.4" fill="#2c2c2c"/>
<rect x="243.8" y="506.5" width="957" height="16.7" fill="#424242"/>
<rect x="232" y="506.5" width="11.8" height="16.7" fill="#1a1a1a"/>
<text x="352.5" y="402.9" font-size="10.6" text-anchor="start" fill="#f2f2f2" textLength="31.6" lengthAdjust="spacingAndGlyphs">White</text>
<text x="421" y="402.9" font-size="10.6" text-anchor="start" fill="#f2f2f2" textLength="43.9" lengthAdjust="spacingAndGlyphs">Gray 80</text>
<text x="490.5" y="402.9" font-size="10.6" text-anchor="start" fill="#f2f2f2" textLength="43.9" lengthAdjust="spacingAndGlyphs">Gray 65</text>
<text x="560" y="402.9" font-size="10.6" text-anchor="start" fill="#f2f2f2" textLength="43.9" lengthAdjust="spacingAndGlyphs">Gray 50</text>
<text x="629.3" y="402.9" font-size="10.6" text-anchor="start" fill="#f2f2f2" textLength="43.9" lengthAdjust="spacingAndGlyphs">Gray 35</text>
<text x="699.5" y="402.9" font-size="10.6" text-anchor="start" fill="#f2f2f2" textLength="30.2" lengthAdjust="spacingAndGlyphs">Black</text>
<text x="752" y="402.9" font-size="10.6" text-anchor="start" fill="#f2f2f2" textLength="53.5" lengthAdjust="spacingAndGlyphs">Dark Skin</text>
<text x="813.3" y="402.9" font-size="10.6" text-anchor="start" fill="#f2f2f2" textLength="54.2" lengthAdjust="spacingAndGlyphs">Light Skin</text>
<text x="883.3" y="402.9" font-size="10.6" text-anchor="start" fill="#f2f2f2" textLength="48.7" lengthAdjust="spacingAndGlyphs">Blue Sky</text>
<text x="944" y="402.9" font-size="10.6" text-anchor="start" fill="#f2f2f2" textLength="40.5" lengthAdjust="spacingAndGlyphs">Foliage</text>
<text x="1005.4" y="402.9" font-size="10.6" text-anchor="start" fill="#f2f2f2" textLength="65.2" lengthAdjust="spacingAndGlyphs">Blue Flower</text>
<text x="1079" y="402.9" font-size="10.6" text-anchor="start" fill="#f2f2f2" textLength="71.4" lengthAdjust="spacingAndGlyphs">Bluish Green</text>
<text x="1159.6" y="402.9" font-size="10.6" text-anchor="start" fill="#f2f2f2" textLength="41.2" lengthAdjust="spacingAndGlyphs">Orange</text>
<text x="247.8" y="419.3" font-size="11.2" text-anchor="start" fill="#f4f4f4" textLength="50.2" lengthAdjust="spacingAndGlyphs">x: CIE31</text>
<text x="352.5" y="419.3" font-size="11.2" text-anchor="start" fill="#f4f4f4" textLength="43.7" lengthAdjust="spacingAndGlyphs">0.3078</text>
<text x="421" y="419.3" font-size="11.2" text-anchor="start" fill="#f4f4f4" textLength="43.7" lengthAdjust="spacingAndGlyphs">0.3075</text>
<text x="490.5" y="419.3" font-size="11.2" text-anchor="start" fill="#f4f4f4" textLength="43.7" lengthAdjust="spacingAndGlyphs">0.3075</text>
<text x="560" y="419.3" font-size="11.2" text-anchor="start" fill="#f4f4f4" textLength="43.7" lengthAdjust="spacingAndGlyphs">0.3073</text>
<text x="629.3" y="419.3" font-size="11.2" text-anchor="start" fill="#f4f4f4" textLength="43.7" lengthAdjust="spacingAndGlyphs">0.3076</text>
<text x="699.5" y="419.3" font-size="11.2" text-anchor="start" fill="#f4f4f4" textLength="43.7" lengthAdjust="spacingAndGlyphs">0.2635</text>
<text x="752" y="419.3" font-size="11.2" text-anchor="start" fill="#f4f4f4" textLength="43.7" lengthAdjust="spacingAndGlyphs">0.3984</text>
<text x="813.3" y="419.3" font-size="11.2" text-anchor="start" fill="#f4f4f4" textLength="43.7" lengthAdjust="spacingAndGlyphs">0.3691</text>
<text x="883.3" y="419.3" font-size="11.2" text-anchor="start" fill="#f4f4f4" textLength="43.7" lengthAdjust="spacingAndGlyphs">0.2462</text>
<text x="944" y="419.3" font-size="11.2" text-anchor="start" fill="#f4f4f4" textLength="43.7" lengthAdjust="spacingAndGlyphs">0.3396</text>
<text x="1005.4" y="419.3" font-size="11.2" text-anchor="start" fill="#f4f4f4" textLength="43.7" lengthAdjust="spacingAndGlyphs">0.2656</text>
<text x="1079" y="419.3" font-size="11.2" text-anchor="start" fill="#f4f4f4" textLength="43.7" lengthAdjust="spacingAndGlyphs">0.2609</text>
<text x="1159.6" y="419.3" font-size="11.2" text-anchor="start" fill="#f4f4f4" textLength="43.7" lengthAdjust="spacingAndGlyphs">0.5091</text>
<text x="247.8" y="435.9" font-size="11.2" text-anchor="start" fill="#f4f4f4" textLength="50.2" lengthAdjust="spacingAndGlyphs">y: CIE31</text>
<text x="352.5" y="435.9" font-size="11.2" text-anchor="start" fill="#f4f4f4" textLength="43.7" lengthAdjust="spacingAndGlyphs">0.3241</text>
<text x="421" y="435.9" font-size="11.2" text-anchor="start" fill="#f4f4f4" textLength="43.7" lengthAdjust="spacingAndGlyphs">0.3240</text>
<text x="490.5" y="435.9" font-size="11.2" text-anchor="start" fill="#f4f4f4" textLength="43.7" lengthAdjust="spacingAndGlyphs">0.3238</text>
<text x="560" y="435.9" font-size="11.2" text-anchor="start" fill="#f4f4f4" textLength="43.7" lengthAdjust="spacingAndGlyphs">0.3238</text>
<text x="629.3" y="435.9" font-size="11.2" text-anchor="start" fill="#f4f4f4" textLength="43.7" lengthAdjust="spacingAndGlyphs">0.3239</text>
<text x="699.5" y="435.9" font-size="11.2" text-anchor="start" fill="#f4f4f4" textLength="43.7" lengthAdjust="spacingAndGlyphs">0.2616</text>
<text x="752" y="435.9" font-size="11.2" text-anchor="start" fill="#f4f4f4" textLength="43.7" lengthAdjust="spacingAndGlyphs">0.3598</text>
<text x="813.3" y="435.9" font-size="11.2" text-anchor="start" fill="#f4f4f4" textLength="43.7" lengthAdjust="spacingAndGlyphs">0.3533</text>
<text x="883.3" y="435.9" font-size="11.2" text-anchor="start" fill="#f4f4f4" textLength="43.7" lengthAdjust="spacingAndGlyphs">0.2602</text>
<text x="944" y="435.9" font-size="11.2" text-anchor="start" fill="#f4f4f4" textLength="43.7" lengthAdjust="spacingAndGlyphs">0.4255</text>
<text x="1005.4" y="435.9" font-size="11.2" text-anchor="start" fill="#f4f4f4" textLength="43.7" lengthAdjust="spacingAndGlyphs">0.2508</text>
<text x="1079" y="435.9" font-size="11.2" text-anchor="start" fill="#f4f4f4" textLength="43.7" lengthAdjust="spacingAndGlyphs">0.3521</text>
<text x="1159.6" y="435.9" font-size="11.2" text-anchor="start" fill="#f4f4f4" textLength="43.7" lengthAdjust="spacingAndGlyphs">0.4107</text>
<text x="247.8" y="452.4" font-size="11.2" text-anchor="start" fill="#f4f4f4" textLength="8.6" lengthAdjust="spacingAndGlyphs">Y</text>
<text x="352.5" y="452.4" font-size="11.2" text-anchor="start" fill="#f4f4f4" textLength="59.6" lengthAdjust="spacingAndGlyphs">401.3313</text>
<text x="421" y="452.4" font-size="11.2" text-anchor="start" fill="#f4f4f4" textLength="59.6" lengthAdjust="spacingAndGlyphs">316.0255</text>
<text x="490.5" y="452.4" font-size="11.2" text-anchor="start" fill="#f4f4f4" textLength="59.6" lengthAdjust="spacingAndGlyphs">259.1885</text>
<text x="560" y="452.4" font-size="11.2" text-anchor="start" fill="#f4f4f4" textLength="59.6" lengthAdjust="spacingAndGlyphs">200.6854</text>
<text x="629.3" y="452.4" font-size="11.2" text-anchor="start" fill="#f4f4f4" textLength="59.6" lengthAdjust="spacingAndGlyphs">141.2917</text>
<text x="699.5" y="452.4" font-size="11.2" text-anchor="start" fill="#f4f4f4" textLength="43.7" lengthAdjust="spacingAndGlyphs">0.2289</text>
<text x="752" y="452.4" font-size="11.2" text-anchor="start" fill="#f4f4f4" textLength="51.6" lengthAdjust="spacingAndGlyphs">39.1744</text>
<text x="813.3" y="452.4" font-size="11.2" text-anchor="start" fill="#f4f4f4" textLength="59.6" lengthAdjust="spacingAndGlyphs">142.4808</text>
<text x="883.3" y="452.4" font-size="11.2" text-anchor="start" fill="#f4f4f4" textLength="51.6" lengthAdjust="spacingAndGlyphs">77.6878</text>
<text x="944" y="452.4" font-size="11.2" text-anchor="start" fill="#f4f4f4" textLength="51.6" lengthAdjust="spacingAndGlyphs">52.8071</text>
<text x="1005.4" y="452.4" font-size="11.2" text-anchor="start" fill="#f4f4f4" textLength="51.6" lengthAdjust="spacingAndGlyphs">96.7297</text>
<text x="1079" y="452.4" font-size="11.2" text-anchor="start" fill="#f4f4f4" textLength="59.6" lengthAdjust="spacingAndGlyphs">170.6507</text>
<text x="1159.6" y="452.4" font-size="11.2" text-anchor="start" fill="#f4f4f4" textLength="57.4" lengthAdjust="spacingAndGlyphs">111.5842</text>
<text x="247.8" y="468.7" font-size="11.2" text-anchor="start" fill="#f4f4f4" textLength="93.8" lengthAdjust="spacingAndGlyphs">Target x:CIE31</text>
<text x="352.5" y="468.7" font-size="11.2" text-anchor="start" fill="#f4f4f4" textLength="43.7" lengthAdjust="spacingAndGlyphs">0.3127</text>
<text x="421" y="468.7" font-size="11.2" text-anchor="start" fill="#f4f4f4" textLength="43.7" lengthAdjust="spacingAndGlyphs">0.3127</text>
<text x="490.5" y="468.7" font-size="11.2" text-anchor="start" fill="#f4f4f4" textLength="43.7" lengthAdjust="spacingAndGlyphs">0.3127</text>
<text x="560" y="468.7" font-size="11.2" text-anchor="start" fill="#f4f4f4" textLength="43.7" lengthAdjust="spacingAndGlyphs">0.3127</text>
<text x="629.3" y="468.7" font-size="11.2" text-anchor="start" fill="#f4f4f4" textLength="43.7" lengthAdjust="spacingAndGlyphs">0.3127</text>
<text x="699.5" y="468.7" font-size="11.2" text-anchor="start" fill="#f4f4f4" textLength="43.7" lengthAdjust="spacingAndGlyphs">0.3127</text>
<text x="752" y="468.7" font-size="11.2" text-anchor="start" fill="#f4f4f4" textLength="43.7" lengthAdjust="spacingAndGlyphs">0.4005</text>
<text x="813.3" y="468.7" font-size="11.2" text-anchor="start" fill="#f4f4f4" textLength="43.7" lengthAdjust="spacingAndGlyphs">0.3795</text>
<text x="883.3" y="468.7" font-size="11.2" text-anchor="start" fill="#f4f4f4" textLength="43.7" lengthAdjust="spacingAndGlyphs">0.2493</text>
<text x="944" y="468.7" font-size="11.2" text-anchor="start" fill="#f4f4f4" textLength="43.7" lengthAdjust="spacingAndGlyphs">0.3371</text>
<text x="1005.4" y="468.7" font-size="11.2" text-anchor="start" fill="#f4f4f4" textLength="43.7" lengthAdjust="spacingAndGlyphs">0.2674</text>
<text x="1079" y="468.7" font-size="11.2" text-anchor="start" fill="#f4f4f4" textLength="43.7" lengthAdjust="spacingAndGlyphs">0.2616</text>
<text x="1159.6" y="468.7" font-size="11.2" text-anchor="start" fill="#f4f4f4" textLength="43.7" lengthAdjust="spacingAndGlyphs">0.5108</text>
<text x="247.8" y="485.3" font-size="11.2" text-anchor="start" fill="#f4f4f4" textLength="93.8" lengthAdjust="spacingAndGlyphs">Target y:CIE31</text>
<text x="352.5" y="485.3" font-size="11.2" text-anchor="start" fill="#f4f4f4" textLength="43.7" lengthAdjust="spacingAndGlyphs">0.3290</text>
<text x="421" y="485.3" font-size="11.2" text-anchor="start" fill="#f4f4f4" textLength="43.7" lengthAdjust="spacingAndGlyphs">0.3290</text>
<text x="490.5" y="485.3" font-size="11.2" text-anchor="start" fill="#f4f4f4" textLength="43.7" lengthAdjust="spacingAndGlyphs">0.3290</text>
<text x="560" y="485.3" font-size="11.2" text-anchor="start" fill="#f4f4f4" textLength="43.7" lengthAdjust="spacingAndGlyphs">0.3290</text>
<text x="629.3" y="485.3" font-size="11.2" text-anchor="start" fill="#f4f4f4" textLength="43.7" lengthAdjust="spacingAndGlyphs">0.3290</text>
<text x="699.5" y="485.3" font-size="11.2" text-anchor="start" fill="#f4f4f4" textLength="43.7" lengthAdjust="spacingAndGlyphs">0.3290</text>
<text x="752" y="485.3" font-size="11.2" text-anchor="start" fill="#f4f4f4" textLength="43.7" lengthAdjust="spacingAndGlyphs">0.3592</text>
<text x="813.3" y="485.3" font-size="11.2" text-anchor="start" fill="#f4f4f4" textLength="43.7" lengthAdjust="spacingAndGlyphs">0.3543</text>
<text x="883.3" y="485.3" font-size="11.2" text-anchor="start" fill="#f4f4f4" textLength="43.7" lengthAdjust="spacingAndGlyphs">0.2686</text>
<text x="944" y="485.3" font-size="11.2" text-anchor="start" fill="#f4f4f4" textLength="43.7" lengthAdjust="spacingAndGlyphs">0.4273</text>
<text x="1005.4" y="485.3" font-size="11.2" text-anchor="start" fill="#f4f4f4" textLength="43.7" lengthAdjust="spacingAndGlyphs">0.2541</text>
<text x="1079" y="485.3" font-size="11.2" text-anchor="start" fill="#f4f4f4" textLength="43.7" lengthAdjust="spacingAndGlyphs">0.3563</text>
<text x="1159.6" y="485.3" font-size="11.2" text-anchor="start" fill="#f4f4f4" textLength="43.7" lengthAdjust="spacingAndGlyphs">0.4047</text>
<text x="247.8" y="501.7" font-size="11.2" text-anchor="start" fill="#f4f4f4" textLength="53.5" lengthAdjust="spacingAndGlyphs">Target Y</text>
<text x="352.5" y="501.7" font-size="11.2" text-anchor="start" fill="#f4f4f4" textLength="59.6" lengthAdjust="spacingAndGlyphs">401.3313</text>
<text x="421" y="501.7" font-size="11.2" text-anchor="start" fill="#f4f4f4" textLength="59.6" lengthAdjust="spacingAndGlyphs">315.6996</text>
<text x="490.5" y="501.7" font-size="11.2" text-anchor="start" fill="#f4f4f4" textLength="59.6" lengthAdjust="spacingAndGlyphs">257.5946</text>
<text x="560" y="501.7" font-size="11.2" text-anchor="start" fill="#f4f4f4" textLength="59.6" lengthAdjust="spacingAndGlyphs">197.8915</text>
<text x="629.3" y="501.7" font-size="11.2" text-anchor="start" fill="#f4f4f4" textLength="59.6" lengthAdjust="spacingAndGlyphs">138.0541</text>
<text x="699.5" y="501.7" font-size="11.2" text-anchor="start" fill="#f4f4f4" textLength="43.7" lengthAdjust="spacingAndGlyphs">0.2289</text>
<text x="752" y="501.7" font-size="11.2" text-anchor="start" fill="#f4f4f4" textLength="51.6" lengthAdjust="spacingAndGlyphs">39.3981</text>
<text x="813.3" y="501.7" font-size="11.2" text-anchor="start" fill="#f4f4f4" textLength="59.6" lengthAdjust="spacingAndGlyphs">137.7933</text>
<text x="883.3" y="501.7" font-size="11.2" text-anchor="start" fill="#f4f4f4" textLength="51.6" lengthAdjust="spacingAndGlyphs">75.9902</text>
<text x="944" y="501.7" font-size="11.2" text-anchor="start" fill="#f4f4f4" textLength="51.6" lengthAdjust="spacingAndGlyphs">52.9542</text>
<text x="1005.4" y="501.7" font-size="11.2" text-anchor="start" fill="#f4f4f4" textLength="51.6" lengthAdjust="spacingAndGlyphs">93.0352</text>
<text x="1079" y="501.7" font-size="11.2" text-anchor="start" fill="#f4f4f4" textLength="59.6" lengthAdjust="spacingAndGlyphs">167.8933</text>
<text x="1159.6" y="501.7" font-size="11.2" text-anchor="start" fill="#f4f4f4" textLength="58.5" lengthAdjust="spacingAndGlyphs">113.5012</text>
<text x="247.8" y="518.4" font-size="11.2" text-anchor="start" fill="#f4f4f4" textLength="53.1" lengthAdjust="spacingAndGlyphs">ΔE 2000</text>
<text x="352.5" y="518.4" font-size="11.2" text-anchor="start" fill="#f4f4f4" textLength="43.7" lengthAdjust="spacingAndGlyphs">2.6559</text>
<text x="421" y="518.4" font-size="11.2" text-anchor="start" fill="#f4f4f4" textLength="43.7" lengthAdjust="spacingAndGlyphs">2.5601</text>
<text x="490.5" y="518.4" font-size="11.2" text-anchor="start" fill="#f4f4f4" textLength="43.7" lengthAdjust="spacingAndGlyphs">2.4612</text>
<text x="560" y="518.4" font-size="11.2" text-anchor="start" fill="#f4f4f4" textLength="43.7" lengthAdjust="spacingAndGlyphs">2.3181</text>
<text x="629.3" y="518.4" font-size="11.2" text-anchor="start" fill="#f4f4f4" textLength="43.7" lengthAdjust="spacingAndGlyphs">2.0549</text>
<text x="699.5" y="518.4" font-size="11.2" text-anchor="start" fill="#f4f4f4" textLength="43.7" lengthAdjust="spacingAndGlyphs">0.6166</text>
<text x="752" y="518.4" font-size="11.2" text-anchor="start" fill="#f4f4f4" textLength="43.7" lengthAdjust="spacingAndGlyphs">0.4834</text>
<text x="813.3" y="518.4" font-size="11.2" text-anchor="start" fill="#f4f4f4" textLength="43.7" lengthAdjust="spacingAndGlyphs">2.3329</text>
<text x="883.3" y="518.4" font-size="11.2" text-anchor="start" fill="#f4f4f4" textLength="43.7" lengthAdjust="spacingAndGlyphs">2.2885</text>
<text x="944" y="518.4" font-size="11.2" text-anchor="start" fill="#f4f4f4" textLength="43.7" lengthAdjust="spacingAndGlyphs">0.6131</text>
<text x="1005.4" y="518.4" font-size="11.2" text-anchor="start" fill="#f4f4f4" textLength="43.7" lengthAdjust="spacingAndGlyphs">1.1014</text>
<text x="1079" y="518.4" font-size="11.2" text-anchor="start" fill="#f4f4f4" textLength="43.7" lengthAdjust="spacingAndGlyphs">0.9891</text>
<text x="1159.6" y="518.4" font-size="11.2" text-anchor="start" fill="#f4f4f4" textLength="43.7" lengthAdjust="spacingAndGlyphs">1.7290</text>
<rect x="243.8" y="523.2" width="957" height="10" fill="#404040"/>
<rect x="243.8" y="523.2" width="957" height="1" fill="#5c5c5c"/>
<rect x="260" y="524.3" width="502" height="8.4" fill="#505050" rx="4"/>
<rect x="245" y="524" width="11" height="9" fill="#8a8a8a"/><path d="M253 525.5 L248 528.5 L253 531.5 Z" fill="#2c2c2c"/>
<rect x="1184.5" y="524" width="11" height="9" fill="#8a8a8a"/><path d="M1187.5 525.5 L1192.5 528.5 L1187.5 531.5 Z" fill="#2c2c2c"/>
<path d="M1012.6 497.8 H1017.4 L1024.8 509.1 L1020 519.8 H1012.8 Q1011.9 519.8 1011.9 518.9 V498.5 Q1011.9 497.8 1012.6 497.8 Z" fill="#ff7f0e"/>
<path d="M1022.2 497.8 H1034.6 Q1035.6 497.8 1035.6 498.8 V518.9 Q1035.6 519.9 1034.6 519.9 H1024.4 L1029.6 509.1 Z" fill="#ff7f0e"/>
<text x="1041" y="519" font-size="29" text-anchor="start" fill="#242424" textLength="137.5" lengthAdjust="spacingAndGlyphs" opacity="0.8">Soomal.com</text>
<rect x="1198.6" y="385" width="1.4" height="155" fill="#303030"/>
</svg>
</body></html>
